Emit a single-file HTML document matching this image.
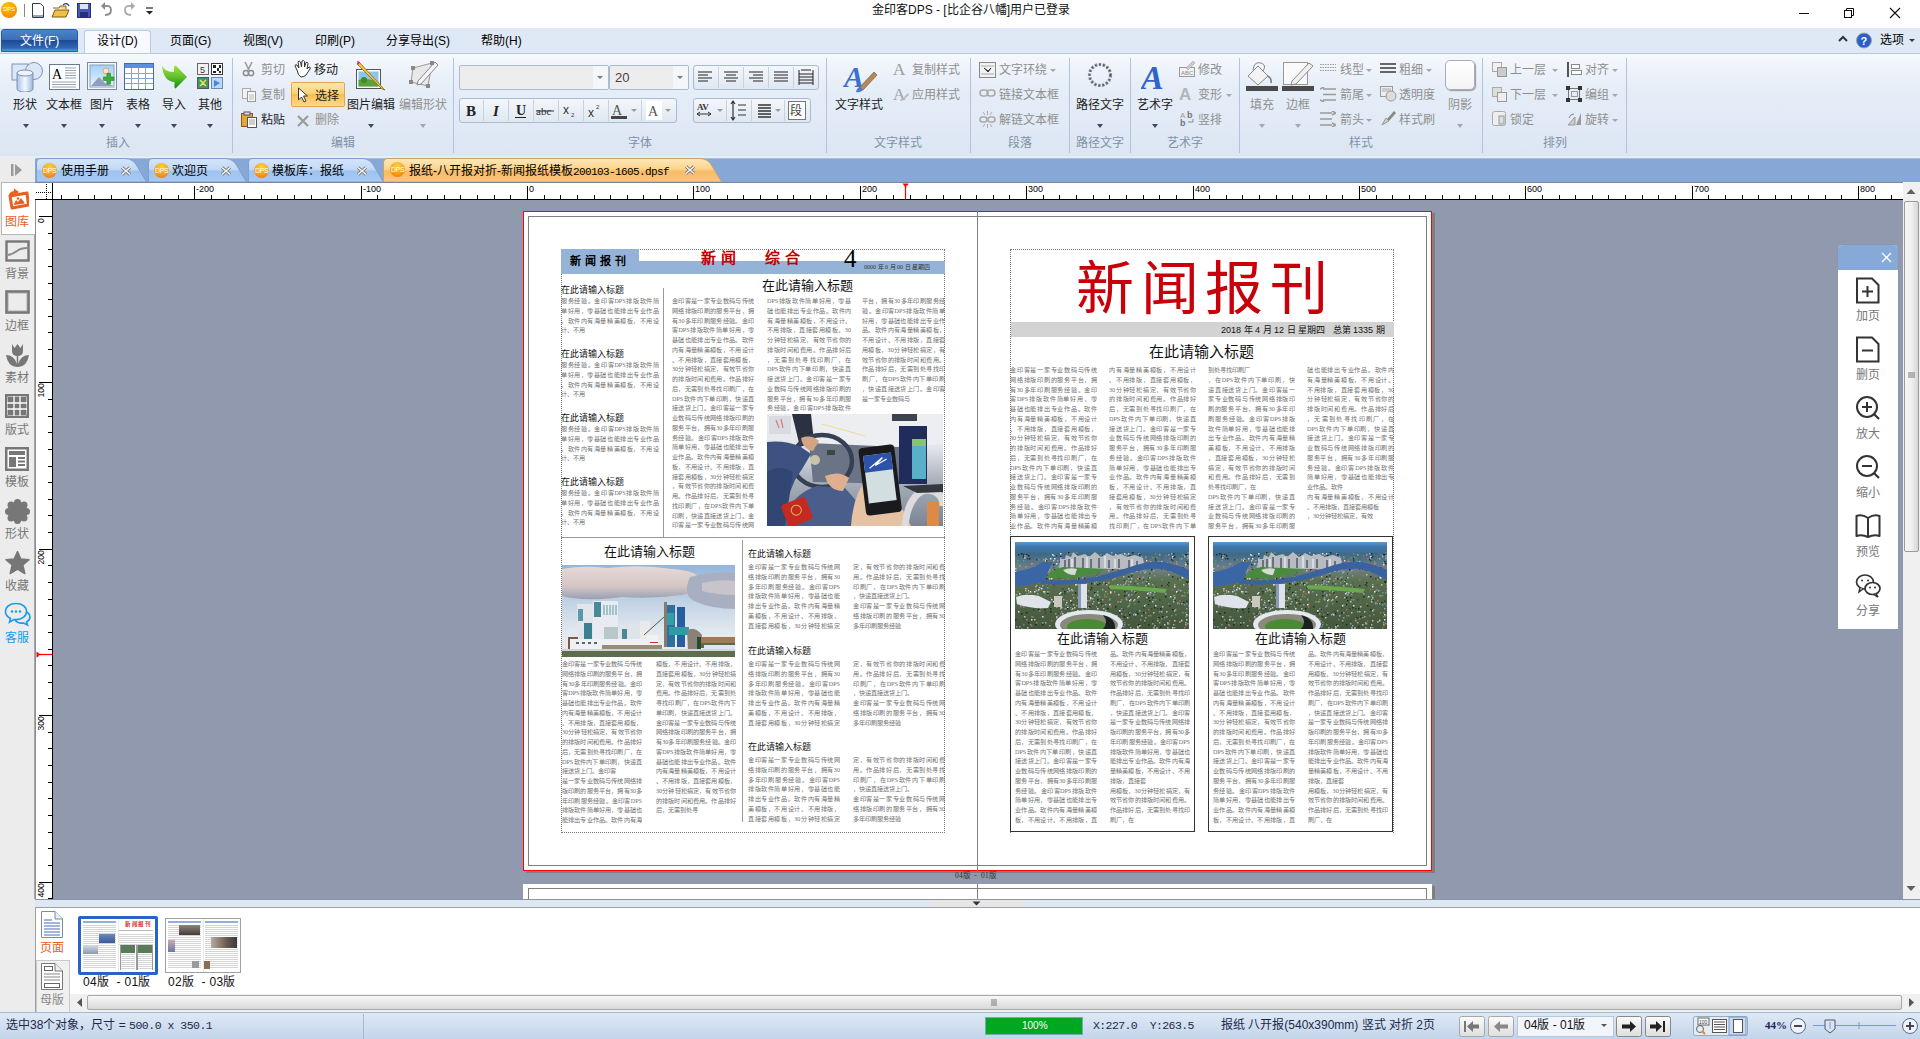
<!DOCTYPE html>
<html lang="zh-CN">
<head>
<meta charset="utf-8">
<style>
*{margin:0;padding:0;box-sizing:border-box}
html,body{width:1920px;height:1039px;overflow:hidden;background:#fff;font-family:"Liberation Sans",sans-serif;font-size:12px;color:#000}
.a{position:absolute}
.t{position:absolute;white-space:nowrap;line-height:1}
.bt .f{height:9.75px;text-align:justify;text-align-last:justify;white-space:nowrap;overflow:hidden}
.bt .s{height:9.75px;text-align:left;white-space:nowrap;overflow:hidden}
.bt{position:absolute;font-family:"Liberation Serif",serif;font-size:6.15px;line-height:9.75px;color:#707070;text-align:justify;word-break:break-all;overflow:hidden}
.hd{position:absolute;white-space:nowrap;line-height:1;font-weight:500;font-size:9px;color:#111}
.bh{position:absolute;white-space:nowrap;line-height:1;font-size:13px;color:#111}
#title{left:0;top:0;width:1920px;height:28px;background:#fff}
#menubar{left:0;top:28px;width:1920px;height:25px;background:#dfe9f5}
#ribbon{left:0;top:53px;width:1920px;height:105px;border-bottom:2px solid #e4eef8;background:linear-gradient(#f6f9fd 0,#e6eef8 30%,#dce6f3 100%);border-top:1px solid #b9cbe3}
#doctabs{left:0;top:158px;width:1920px;height:24px;background:#87a8d6;border-top:1px solid #a8bedc}
#leftbar{left:0;top:182px;width:35px;height:831px;background:#ececec}
#hruler{left:35px;top:182px;width:1868px;height:18px;background:#fff;border-bottom:1px solid #000}
#vruler{left:35px;top:200px;width:18px;height:699px;background:#fff;border-right:1px solid #000}
#canvas{left:53px;top:200px;width:1850px;height:699px;background:#9199ae;overflow:hidden}
#vscroll{left:1903px;top:182px;width:17px;height:717px;background:#f0f0f0}
#bottom{left:35px;top:899px;width:1885px;height:114px;background:#fff}
#status{left:0;top:1012px;width:1920px;height:27px;background:linear-gradient(#dfe9f6,#c3d4ea);border-top:1px solid #a4b9d6}
.sep{position:absolute;width:1px;background:#b2c4dc}
.glab{position:absolute;color:#8091a8;font-size:12px;top:137px;line-height:1;white-space:nowrap}
.rb{position:absolute;font-size:12px;color:#222;white-space:nowrap;line-height:1}
.gr{color:#909090}
.dd{position:absolute;width:0;height:0;border-left:3.5px solid transparent;border-right:3.5px solid transparent;border-top:4px solid #3b4a63}
.dd.g{border-top-color:#a0a8b4}
</style>
</head>
<body>
<!-- TITLE BAR -->
<div id="title" class="a">
  <div class="a" style="left:1px;top:2px;width:16px;height:16px;border-radius:50%;background:radial-gradient(circle at 40% 30%,#ffc400,#f07800);"></div>
  <div class="t" style="left:3px;top:6px;font-size:6px;color:#fff">DPS</div>
  <div class="a" style="left:24px;top:4px;width:1px;height:13px;background:#888"></div>
  <svg class="a" style="left:30px;top:1px" width="125" height="19" viewBox="0 0 125 19">
   <path d="M2.5 2.5h8l3 3v11h-11z" fill="#fff" stroke="#2a3a5a"/><path d="M3 15h10" stroke="#445" />
   <path d="M23 7h6l1-2h6v3" fill="#f6d46a" stroke="#8a6a20"/><path d="M22 16 L25 9 H39 L36 16z" fill="#f1c04a" stroke="#7a5a10"/><path d="M33 4 Q37 1 39 5" stroke="#2a4a8a" fill="none" stroke-width="1.3"/>
   <rect x="47.5" y="2.5" width="13" height="14" fill="#4a56b8" stroke="#26307a"/><rect x="50" y="3" width="8" height="5" fill="#dfe3ff"/><rect x="50" y="11" width="8" height="5" fill="#26307a"/>
   <path d="M75 14 Q81 14 81 9 Q81 4 75 5 L73 5" fill="none" stroke="#8a8a8a" stroke-width="1.8"/><path d="M71 5 L75 1 L75 9z" fill="#8a8a8a"/>
   <path d="M101 14 Q95 14 95 9 Q95 4 101 5 L103 5" fill="none" stroke="#aaa" stroke-width="1.8"/><path d="M105 5 L101 1 L101 9z" fill="#aaa"/>
   <path d="M116 7h7" stroke="#222" stroke-width="1.2"/><path d="M116 10h7l-3.5 3.5z" fill="#222"/>
  </svg>
  <svg class="a" style="left:1790px;top:0" width="130" height="28" viewBox="0 0 130 28">
   <path d="M9 13.5h10" stroke="#111" stroke-width="1"/>
   <rect x="54.5" y="10.5" width="7" height="7" fill="none" stroke="#111"/><path d="M56.5 10.5v-2h7v7h-2" fill="none" stroke="#111"/>
   <path d="M100 8 L110 18 M110 8 L100 18" stroke="#111" stroke-width="1.1"/>
  </svg>
  <div class="t" style="left:872px;top:4px;font-size:12px;color:#111">金印客DPS - [比企谷八幡]用户已登录</div>
</div>
<!-- MENU BAR -->
<div id="menubar" class="a">
  <div class="a" style="left:1px;top:1px;width:77px;height:23px;border-radius:3px 3px 0 0;background:linear-gradient(#4a86cc 0,#3a6fb8 45%,#1f4a94 50%,#2d67b5 85%,#46a0dc 100%);border:1px solid #2a5aa8"></div>
  <div class="t" style="left:20px;top:7px;font-size:12px;color:#fff">文件(F)</div>
  <div class="a" style="left:84px;top:2px;width:67px;height:23px;border-radius:3px 3px 0 0;background:#f6f9fd;border:1px solid #b9cbe3;border-bottom:none"></div>
  <div class="t" style="left:97px;top:7px;font-size:12px">设计(D)</div>
  <div class="t" style="left:170px;top:7px;font-size:12px">页面(G)</div>
  <div class="t" style="left:243px;top:7px;font-size:12px">视图(V)</div>
  <div class="t" style="left:315px;top:7px;font-size:12px">印刷(P)</div>
  <div class="t" style="left:386px;top:7px;font-size:12px">分享导出(S)</div>
  <div class="t" style="left:481px;top:7px;font-size:12px">帮助(H)</div>
  <div class="t" style="left:1880px;top:6px;font-size:12px">选项</div>
  <svg class="a" style="left:1836px;top:4px" width="40" height="18" viewBox="0 0 40 18">
   <path d="M3 9 L7 5 L11 9" fill="none" stroke="#333" stroke-width="2"/>
   <circle cx="28" cy="8.5" r="7.5" fill="#2a5ec8" stroke="#9aa" stroke-width="1"/>
   <text x="24.5" y="13" font-size="11" font-weight="bold" fill="#fff" font-family="Liberation Sans">?</text>
  </svg>
  <div class="dd" style="left:1909px;top:11px;border-width:3px 3px 0;border-top-color:#333"></div>

</div>
<!-- RIBBON -->
<div id="ribbon" class="a"></div>
<div class="a" style="left:0;top:0;width:1920px;height:157px">
<!-- group insert -->
<svg class="a" style="left:10px;top:60px" width="34" height="32" viewBox="0 0 34 32">
 <defs><linearGradient id="cyl" x1="0" x2="1"><stop offset="0" stop-color="#a9c3e6"/><stop offset=".5" stop-color="#f4f8fe"/><stop offset="1" stop-color="#9bb6dc"/></linearGradient></defs>
 <rect x="2" y="4" width="16" height="16" fill="#dce8f8" stroke="#7d93b3"/>
 <circle cx="24" cy="11" r="8.5" fill="#dbe7f7" stroke="#7d93b3"/>
 <path d="M7 13 h16 v16 a8 3 0 0 1 -16 0z" fill="url(#cyl)" stroke="#7d93b3"/>
 <ellipse cx="15" cy="13" rx="8" ry="3" fill="#eef4fc" stroke="#7d93b3"/>
</svg>
<svg class="a" style="left:49px;top:64px" width="31" height="26" viewBox="0 0 31 26">
 <rect x=".5" y=".5" width="30" height="25" fill="#fff" stroke="#6b7a90"/>
 <text x="3" y="15" font-family="Liberation Serif" font-size="14" fill="#000">A</text>
 <path d="M16 4h11M16 6.5h11M16 9h11M16 11.5h11M16 14h11M3 18h24M3 20.5h24M3 23h24" stroke="#98a3b3" stroke-width="1"/>
</svg>
<svg class="a" style="left:87px;top:62px" width="31" height="29" viewBox="0 0 31 29">
 <defs><linearGradient id="pic" x1="0" y1="0" x2="0" y2="1"><stop offset="0" stop-color="#9fd2f6"/><stop offset="1" stop-color="#e9f5fd"/></linearGradient></defs>
 <rect x=".5" y=".5" width="29" height="27" fill="#f4f7fb" stroke="#7c8a9e"/>
 <rect x="3" y="3" width="24" height="22" fill="url(#pic)" stroke="#8aa0bb"/>
 <circle cx="19" cy="9" r="3" fill="#fde6d2" stroke="#f39a6a"/>
 <path d="M4 24 L12 15 L18 21 L27 24z" fill="#8e9fbf"/>
 <path d="M21 17h4v4h4v4h-4v4h-4v-4h-4v-4h4z" transform="translate(1,-4) scale(.9)" fill="#3ab03a" stroke="#1f7a1f" stroke-width=".6"/>
</svg>
<svg class="a" style="left:124px;top:63px" width="30" height="27" viewBox="0 0 30 27">
 <rect x=".5" y=".5" width="29" height="26" fill="#fff" stroke="#4f67a6"/>
 <rect x="1" y="1" width="28" height="4" fill="#5d8fe0"/>
 <path d="M1 10.5h28M1 15.5h28M1 20.5h28M7.5 5v21M14.5 5v21M21.5 5v21" stroke="#8aa3cf"/>
</svg>
<svg class="a" style="left:161px;top:65px" width="27" height="25" viewBox="0 0 27 25">
 <defs><linearGradient id="arr" x1="0" y1="0" x2="0" y2="1"><stop offset="0" stop-color="#a8e040"/><stop offset=".5" stop-color="#60c02a"/><stop offset="1" stop-color="#108a10"/></linearGradient></defs>
 <path d="M1 0.5 Q4 7.5 13 7 V1.8 Q14 0.2 15.5 1.2 L26 12 L15 23 Q14 24 13.5 22.5 V17 Q2.5 16.5 1 0.5z" fill="url(#arr)"/>
</svg>
<svg class="a" style="left:196px;top:62px" width="29" height="29" viewBox="0 0 29 29">
 <rect x="1.5" y="1.5" width="11" height="11" fill="#f2f2f2" stroke="#666"/>
 <text x="4" y="11" font-size="9" font-family="Liberation Sans" fill="#333">5</text>
 <rect x="15.5" y="1.5" width="11" height="11" fill="#fff" stroke="#333"/>
 <path d="M17 3h3v3h-3zM23 3h2v3h-2zM17 9h3v2h-3zM21 6h2v3h-2zM23 9h2v2h-2z" fill="#222"/>
 <rect x="1.5" y="15.5" width="11" height="11" fill="#3e9a6a" stroke="#555"/>
 <path d="M4 18l3 3-3 3M10 18l-3 3 3 3" stroke="#f5e04a" stroke-width="1.5" fill="none"/>
 <rect x="15.5" y="15.5" width="11" height="11" fill="#bcd6f5" stroke="#6b8ab5"/>
 <path d="M18 18l6 3-6 4z" fill="#4a86d8"/>
</svg>
<div class="rb" style="left:13px;top:99px">形状</div>
<div class="rb" style="left:46px;top:99px">文本框</div>
<div class="rb" style="left:90px;top:99px">图片</div>
<div class="rb" style="left:126px;top:99px">表格</div>
<div class="rb" style="left:162px;top:99px">导入</div>
<div class="rb" style="left:198px;top:99px">其他</div>
<div class="glab" style="left:106px">插入</div>
<div class="sep" style="left:232px;top:58px;height:95px"></div>
<div class="dd" style="left:23px;top:124px"></div>
<div class="dd" style="left:61px;top:124px"></div>
<div class="dd" style="left:99px;top:124px"></div>
<div class="dd" style="left:135px;top:124px"></div>
<div class="dd" style="left:171px;top:124px"></div>
<div class="dd" style="left:207px;top:124px"></div>
<!-- group edit -->
<svg class="a" style="left:241px;top:61px" width="15" height="16" viewBox="0 0 15 16">
 <path d="M4 1 L8 9 M11 1 L7 9" stroke="#9a9a9a" stroke-width="1.6"/>
 <circle cx="5" cy="12" r="2.6" fill="none" stroke="#8c8c8c" stroke-width="1.5"/><circle cx="10" cy="12" r="2.6" fill="none" stroke="#8c8c8c" stroke-width="1.5"/>
</svg>
<div class="rb gr" style="left:261px;top:64px">剪切</div>
<svg class="a" style="left:293px;top:60px" width="19" height="18" viewBox="0 0 19 18">
 <path d="M4 10 L2 6 Q2 4 4 5 L6 8 L5 2 Q6 0 7.5 2 L8.5 7 L9 1 Q10.5 -0.5 11.5 1.5 L11.5 7 L13 2.5 Q14.5 1.5 15 3.5 L14 9 L16 7 Q18 7 17 9 L13 15 Q11 17 8 17 Q5 16 4 10z" fill="#fff" stroke="#333" stroke-width="1"/>
</svg>
<div class="rb" style="left:314px;top:64px">移动</div>
<svg class="a" style="left:241px;top:87px" width="16" height="15" viewBox="0 0 16 15">
 <rect x="1.5" y="1.5" width="8" height="10" fill="#f3f3f3" stroke="#aaa"/><rect x="6.5" y="4.5" width="8" height="10" fill="#f8f8f8" stroke="#999"/>
 <path d="M8 8h5M8 10h5M8 12h5" stroke="#bbb"/>
</svg>
<div class="rb gr" style="left:261px;top:89px">复制</div>
<div class="a" style="left:291px;top:82px;width:54px;height:25px;border:1px solid #e0a64a;border-radius:2px;background:linear-gradient(#fde7a8,#fbd27a 45%,#f9bf4f 50%,#fcd98c)"></div>
<svg class="a" style="left:297px;top:87px" width="13" height="16" viewBox="0 0 13 16">
 <path d="M1.5 1 L1.5 13 L4.5 10 L7 15 L9 14 L6.5 9 L10.5 9z" fill="#fff" stroke="#333" stroke-width="1"/>
</svg>
<div class="rb" style="left:315px;top:90px">选择</div>
<svg class="a" style="left:240px;top:111px" width="18" height="17" viewBox="0 0 18 17">
 <rect x="1.5" y="2.5" width="11" height="13" fill="#e2a73c" stroke="#8a5a12"/>
 <rect x="4" y="1" width="6" height="3" fill="#ddd" stroke="#555"/>
 <rect x="7.5" y="6.5" width="9" height="10" fill="#fff" stroke="#555"/>
 <path d="M9 9h6M9 11h6M9 13h6" stroke="#999"/>
</svg>
<div class="rb" style="left:261px;top:114px">粘贴</div>
<svg class="a" style="left:296px;top:114px" width="14" height="14" viewBox="0 0 14 14"><path d="M2 2 L12 12 M12 2 L2 12" stroke="#9b9b9b" stroke-width="2.2"/></svg>
<div class="rb gr" style="left:315px;top:114px">删除</div>
<svg class="a" style="left:354px;top:60px" width="34" height="31" viewBox="0 0 34 31">
 <rect x="2.5" y="9.5" width="24" height="19" fill="#fff" stroke="#555"/>
 <rect x="4.5" y="11.5" width="20" height="15" fill="#8fc3ea"/>
 <path d="M4.5 26.5 L4.5 20 Q12 17 24.5 22 L24.5 26.5z" fill="#5aa33a"/>
 <circle cx="10" cy="20" r="3" fill="#3f8a2a"/>
 <path d="M5 2 L29 28 L31 30 L28 29 L3 4z" fill="#f4c542" stroke="#8a6a10" stroke-width=".8"/>
 <path d="M3 1 L6 2 L4 5z" fill="#f08"/>
</svg>
<div class="rb" style="left:347px;top:99px">图片编辑</div>
<svg class="a" style="left:408px;top:59px" width="31" height="32" viewBox="0 0 31 32">
 <path d="M5 9 L24 4 L20 27 L3 23z" fill="#e8e8e8" stroke="#9a9a9a"/>
 <path d="M10 22 L27 3 L30 6 L13 25 L9 26z" fill="#f5f5f5" stroke="#888"/>
 <rect x="3" y="7" width="4" height="4" fill="#888"/><rect x="22" y="2" width="4" height="4" fill="#888"/><rect x="18" y="25" width="4" height="4" fill="#888"/><rect x="1" y="21" width="4" height="4" fill="#888"/>
</svg>
<div class="rb gr" style="left:399px;top:99px">编辑形状</div>
<div class="dd" style="left:368px;top:124px"></div>
<div class="dd g" style="left:420px;top:124px"></div>
<div class="glab" style="left:331px">编辑</div>
<div class="sep" style="left:453px;top:58px;height:95px"></div>
<!-- group font -->
<div class="a" style="left:459px;top:65px;width:150px;height:25px;border:1px solid #a9bad3;background:#ededed;border-radius:2px"></div>
<div class="a" style="left:593px;top:66px;width:15px;height:23px;background:#f4f6f9"></div>
<div class="dd" style="left:597px;top:76px;border-top-color:#777;border-width:3px 3px 0"></div>
<div class="a" style="left:609px;top:65px;width:80px;height:25px;border:1px solid #a9bad3;background:#ededed;border-radius:2px"></div>
<div class="a" style="left:673px;top:66px;width:15px;height:23px;background:#f4f6f9"></div>
<div class="dd" style="left:677px;top:76px;border-top-color:#777;border-width:3px 3px 0"></div>
<div class="rb" style="left:615px;top:71px;font-size:13px;color:#444">20</div>
<div class="a" style="left:693px;top:65px;width:126px;height:25px;border:1px solid #a9bad3;border-radius:3px;background:linear-gradient(#f4f7fb,#dfe7f2)"></div>
<svg class="a" style="left:693px;top:65px" width="126" height="25" viewBox="0 0 126 25">
 <path d="M25.5 2v21M50.5 2v21M75.5 2v21M100.5 2v21" stroke="#c6d2e2"/>
 <path d="M5 7h14M5 10h10M5 13h14M5 16h10" stroke="#222" stroke-width="1.2"/>
 <path d="M31 7h14M33 10h10M31 13h14M33 16h10" stroke="#222" stroke-width="1.2"/>
 <path d="M56 7h14M60 10h10M56 13h14M60 16h10" stroke="#222" stroke-width="1.2"/>
 <path d="M81 7h14M81 10h14M81 13h14M81 16h14" stroke="#222" stroke-width="1.2"/>
 <path d="M106 9h14M106 12h14M106 15h14M106 18h14M106 5v15M120 5v15M108 5h10" stroke="#222" stroke-width="1"/>
</svg>
<div class="a" style="left:459px;top:98px;width:218px;height:25px;border:1px solid #a9bad3;border-radius:3px;background:linear-gradient(#f4f7fb,#dfe7f2)"></div>
<svg class="a" style="left:459px;top:98px" width="218" height="25" viewBox="0 0 218 25">
 <path d="M24.5 2v21M49.5 2v21M74.5 2v21M99.5 2v21M124.5 2v21M149.5 2v21M182.5 2v21" stroke="#c6d2e2"/>
 <text x="7" y="18" font-family="Liberation Serif" font-weight="bold" font-size="15" fill="#222">B</text>
 <text x="34" y="18" font-family="Liberation Serif" font-style="italic" font-weight="bold" font-size="15" fill="#222">I</text>
 <text x="57" y="17" font-family="Liberation Serif" font-weight="bold" font-size="14" fill="#222">U</text><path d="M56 19.5h11" stroke="#222"/>
 <text x="77" y="17" font-family="Liberation Serif" font-size="11" fill="#333">abc</text><path d="M77 13h18" stroke="#333"/>
 <text x="104" y="16" font-family="Liberation Sans" font-size="12" fill="#333">x</text><text x="112" y="19" font-size="6" fill="#333">2</text>
 <text x="129" y="19" font-family="Liberation Sans" font-size="12" fill="#333">x</text><text x="137" y="11" font-size="6" fill="#333">2</text>
 <text x="153" y="17" font-family="Liberation Serif" font-size="14" fill="#555">A</text><rect x="152" y="18" width="16" height="3" fill="#444"/>
 <path d="M172 11l3 3 3-3z" fill="#999"/>
 <rect x="187" y="3" width="16" height="19" fill="#fff"/><text x="189" y="18" font-family="Liberation Serif" font-size="14" fill="#555">A</text>
 <path d="M206 11l3 3 3-3z" fill="#999"/>
</svg>
<div class="a" style="left:693px;top:98px;width:118px;height:25px;border:1px solid #a9bad3;border-radius:3px;background:linear-gradient(#f4f7fb,#dfe7f2)"></div>
<svg class="a" style="left:693px;top:98px" width="118" height="25" viewBox="0 0 118 25">
 <path d="M33.5 2v21M58.5 2v21M91.5 2v21" stroke="#c6d2e2"/>
 <text x="4" y="12" font-family="Liberation Serif" font-weight="bold" font-size="9" fill="#333">AV</text>
 <path d="M4 16h14M4 16l3-2M4 16l3 2M18 16l-3-2M18 16l-3 2" stroke="#333"/>
 <path d="M24 11l3 3 3-3z" fill="#999"/>
 <path d="M40 4v17M38 6l2-3 2 3M38 19l2 3 2-3M45 7h8M45 12h8M45 17h8" stroke="#333" stroke-width="1.2" fill="none"/>
 <path d="M65 7h13M65 10h13M65 13h13M65 16h13M65 19h13" stroke="#333" stroke-width="1.3"/>
 <path d="M82 11l3 3 3-3z" fill="#999"/>
 <rect x="95.5" y="3.5" width="17" height="18" fill="#fff" stroke="#777"/>
 <text x="97" y="17" font-size="12" fill="#444">段</text>
</svg>
<div class="glab" style="left:628px">字体</div>
<div class="sep" style="left:826px;top:58px;height:95px"></div>
<!-- group text style -->
<svg class="a" style="left:843px;top:60px" width="36" height="33" viewBox="0 0 36 33">
 <text x="1" y="27" font-family="Liberation Serif" font-style="italic" font-weight="bold" font-size="30" fill="#3d6fd0">A</text>
 <path d="M16 28 L31 12 L34 15 L20 30z" fill="#b8875a" stroke="#7a5530" stroke-width=".7"/>
 <path d="M13 32 Q14 27 18 27 L20 30 Q17 33 13 32z" fill="#4a7ad0"/>
</svg>
<div class="rb" style="left:835px;top:99px">文字样式</div>
<svg class="a" style="left:892px;top:60px" width="17" height="17" viewBox="0 0 17 17"><text x="1" y="15" font-family="Liberation Serif" font-size="17" fill="#9a9a9a">A</text></svg>
<div class="rb gr" style="left:912px;top:64px">复制样式</div>
<svg class="a" style="left:892px;top:85px" width="18" height="17" viewBox="0 0 18 17"><text x="1" y="15" font-family="Liberation Serif" font-size="17" fill="#a0a0a0">A</text><path d="M8 16 L16 8 L17 10 L10 16z" fill="#bbb"/></svg>
<div class="rb gr" style="left:912px;top:89px">应用样式</div>
<div class="glab" style="left:874px">文字样式</div>
<div class="sep" style="left:970px;top:58px;height:95px"></div>
<!-- group paragraph -->
<svg class="a" style="left:979px;top:62px" width="17" height="16" viewBox="0 0 17 16"><rect x=".5" y=".5" width="16" height="15" fill="#f2f2f2" stroke="#888"/><path d="M2 4h13M2 12h13" stroke="#aaa"/><path d="M5 6 L9 10 L12 6 L9 9z" fill="#333" stroke="#333"/></svg>
<div class="rb gr" style="left:999px;top:64px">文字环绕</div>
<div class="dd g" style="left:1050px;top:69px;border-width:3px 3px 0"></div>
<svg class="a" style="left:979px;top:88px" width="17" height="11" viewBox="0 0 17 11"><rect x="1" y="2" width="8" height="6" rx="3" fill="none" stroke="#aaa" stroke-width="1.6"/><rect x="8" y="2" width="8" height="6" rx="3" fill="none" stroke="#aaa" stroke-width="1.6"/></svg>
<div class="rb gr" style="left:999px;top:89px">链接文本框</div>
<svg class="a" style="left:979px;top:111px" width="17" height="17" viewBox="0 0 17 17"><rect x="1" y="6" width="7" height="5" rx="2.5" fill="none" stroke="#aaa" stroke-width="1.5"/><rect x="9" y="6" width="7" height="5" rx="2.5" fill="none" stroke="#aaa" stroke-width="1.5"/><path d="M8.5 0v4M8.5 13v4M4 1l2 3M13 1l-2 3M4 16l2-3M13 16l-2-3" stroke="#aaa"/></svg>
<div class="rb gr" style="left:999px;top:114px">解链文本框</div>
<div class="glab" style="left:1008px">段落</div>
<div class="sep" style="left:1069px;top:58px;height:95px"></div>
<!-- group path text -->
<svg class="a" style="left:1085px;top:60px" width="30" height="30" viewBox="0 0 30 30">
 <circle cx="15" cy="15" r="10.5" fill="none" stroke="#8a8a8a" stroke-width="3.2" stroke-dasharray="2.4 1.6"/>
 <circle cx="15" cy="15" r="10.5" fill="none" stroke="#40568a" stroke-width="1.3" stroke-dasharray="1.5 2.5"/>
</svg>
<div class="rb" style="left:1076px;top:99px">路径文字</div>
<div class="dd" style="left:1097px;top:124px"></div>
<div class="glab" style="left:1076px">路径文字</div>
<div class="sep" style="left:1130px;top:58px;height:95px"></div>
<!-- group art -->
<svg class="a" style="left:1141px;top:60px" width="30" height="32" viewBox="0 0 30 32"><text x="0" y="29" font-family="Liberation Serif" font-style="italic" font-weight="bold" font-size="34" fill="#2f64c9">A</text></svg>
<div class="rb" style="left:1137px;top:99px">艺术字</div>
<div class="dd" style="left:1152px;top:124px"></div>
<svg class="a" style="left:1179px;top:61px" width="17" height="17" viewBox="0 0 17 17"><rect x=".5" y="6.5" width="15" height="9" fill="#f2f2f2" stroke="#999"/><text x="2" y="14" font-size="6" fill="#888">ABC</text><path d="M7 7 L14 0 L16 2 L9 9z" fill="#ccc" stroke="#999" stroke-width=".5"/></svg>
<div class="rb gr" style="left:1198px;top:64px">修改</div>
<svg class="a" style="left:1179px;top:85px" width="16" height="17" viewBox="0 0 16 17"><text x="0" y="15" font-family="Liberation Sans" font-weight="bold" font-size="17" fill="#b5b5b5">A</text></svg>
<div class="rb gr" style="left:1198px;top:89px">变形</div>
<div class="dd g" style="left:1226px;top:94px;border-width:3px 3px 0"></div>
<svg class="a" style="left:1180px;top:110px" width="15" height="17" viewBox="0 0 15 17"><text x="0" y="8" font-size="8" fill="#999">A</text><text x="7" y="8" font-weight="bold" font-size="9" fill="#777">b</text><text x="0" y="16" font-weight="bold" font-size="9" fill="#777">b</text><path d="M8 12h5v-3" stroke="#888" fill="none"/></svg>
<div class="rb gr" style="left:1198px;top:114px">竖排</div>
<div class="glab" style="left:1167px">艺术字</div>
<div class="sep" style="left:1239px;top:58px;height:95px"></div>
<!-- group style -->
<svg class="a" style="left:1245px;top:61px" width="34" height="32" viewBox="0 0 34 32">
 <path d="M3 15 L13 5 L23 15 L13 24z" fill="#f3f3f3" stroke="#888"/>
 <path d="M8 9 Q9 0 16 2 Q22 4 18 10" fill="none" stroke="#888"/>
 <path d="M23 15 Q27 18 26 22" fill="none" stroke="#777" stroke-width="1.5"/>
 <rect x="1" y="25" width="32" height="5" fill="#4a4a4a"/>
</svg>
<div class="rb gr" style="left:1250px;top:99px">填充</div>
<div class="dd g" style="left:1259px;top:124px"></div>
<svg class="a" style="left:1282px;top:61px" width="33" height="32" viewBox="0 0 33 32">
 <rect x="1.5" y="1.5" width="24" height="22" fill="#fafafa" stroke="#999"/>
 <path d="M10 20 L27 2 L31 5 L14 23 L9 24z" fill="#f0f0f0" stroke="#888"/>
 <rect x="0" y="25" width="32" height="5" fill="#4a4a4a"/>
</svg>
<div class="rb gr" style="left:1286px;top:99px">边框</div>
<div class="dd g" style="left:1295px;top:124px"></div>
<svg class="a" style="left:1320px;top:63px" width="16" height="9" viewBox="0 0 16 9"><path d="M0 1.5h16M0 4.5h16M0 7.5h16" stroke="#999" stroke-dasharray="1.5 1"/></svg>
<div class="rb gr" style="left:1340px;top:64px">线型</div>
<div class="dd g" style="left:1366px;top:69px;border-width:3px 3px 0"></div>
<svg class="a" style="left:1380px;top:63px" width="16" height="10" viewBox="0 0 16 10"><path d="M0 1h16M0 5h16M0 9h16" stroke="#666" stroke-width="2"/></svg>
<div class="rb gr" style="left:1399px;top:64px">粗细</div>
<div class="dd g" style="left:1426px;top:69px;border-width:3px 3px 0"></div>
<svg class="a" style="left:1320px;top:87px" width="16" height="15" viewBox="0 0 16 15"><path d="M3 2h13M3 7.5h13M3 13h13M0 2l4-2M0 13l4 2" stroke="#999" stroke-width="1.5"/></svg>
<div class="rb gr" style="left:1340px;top:89px">箭尾</div>
<div class="dd g" style="left:1366px;top:94px;border-width:3px 3px 0"></div>
<svg class="a" style="left:1380px;top:86px" width="17" height="16" viewBox="0 0 17 16"><rect x=".5" y=".5" width="12" height="10" fill="#eee" stroke="#999"/><circle cx="11" cy="10" r="5" fill="#ddd" stroke="#999"/><path d="M2 3h9M2 5h9" stroke="#aaa"/></svg>
<div class="rb gr" style="left:1399px;top:89px">透明度</div>
<svg class="a" style="left:1320px;top:111px" width="16" height="16" viewBox="0 0 16 16"><path d="M0 2h12M0 8h12M0 14h12M12 0l4 2-4 2M12 12l4 2-4 2" stroke="#999" stroke-width="1.5" fill="none"/></svg>
<div class="rb gr" style="left:1340px;top:114px">箭头</div>
<div class="dd g" style="left:1366px;top:119px;border-width:3px 3px 0"></div>
<svg class="a" style="left:1380px;top:110px" width="17" height="17" viewBox="0 0 17 17"><path d="M2 15 L6 8 L9 11z" fill="#ccc" stroke="#999"/><path d="M7 9 L14 1 L16 3 L9 11z" fill="#888"/></svg>
<div class="rb gr" style="left:1399px;top:114px">样式刷</div>
<div class="a" style="left:1445px;top:60px;width:30px;height:30px;border:1px solid #aab;border-radius:5px;background:linear-gradient(#fff,#f4f4f4);box-shadow:1px 1px 1px #999"></div>
<div class="rb gr" style="left:1448px;top:99px">阴影</div>
<div class="dd g" style="left:1457px;top:124px"></div>
<div class="glab" style="left:1349px">样式</div>
<div class="sep" style="left:1482px;top:58px;height:95px"></div>
<!-- group arrange -->
<svg class="a" style="left:1492px;top:62px" width="15" height="16" viewBox="0 0 15 16"><rect x=".5" y=".5" width="9" height="9" fill="#f0f0f0" stroke="#aaa"/><rect x="5.5" y="5.5" width="9" height="9" fill="#ccc" stroke="#999"/></svg>
<div class="rb gr" style="left:1510px;top:64px">上一层</div>
<div class="dd g" style="left:1552px;top:69px;border-width:3px 3px 0"></div>
<svg class="a" style="left:1492px;top:87px" width="15" height="16" viewBox="0 0 15 16"><rect x=".5" y=".5" width="9" height="9" fill="#ddd" stroke="#aaa"/><rect x="5.5" y="5.5" width="9" height="9" fill="#eee" stroke="#999"/></svg>
<div class="rb gr" style="left:1510px;top:89px">下一层</div>
<div class="dd g" style="left:1552px;top:94px;border-width:3px 3px 0"></div>
<svg class="a" style="left:1492px;top:111px" width="15" height="16" viewBox="0 0 15 16"><rect x=".5" y=".5" width="13" height="14" rx="2" fill="#eee" stroke="#aaa"/><rect x="7" y="5" width="5" height="8" fill="#ddd" stroke="#999"/></svg>
<div class="rb gr" style="left:1510px;top:114px">锁定</div>
<svg class="a" style="left:1567px;top:62px" width="15" height="15" viewBox="0 0 15 15"><path d="M1 0v15" stroke="#555" stroke-width="2"/><rect x="4.5" y="2.5" width="8" height="4" fill="#fff" stroke="#888"/><rect x="4.5" y="8.5" width="10" height="4" fill="#fff" stroke="#888"/></svg>
<div class="rb gr" style="left:1585px;top:64px">对齐</div>
<div class="dd g" style="left:1612px;top:69px;border-width:3px 3px 0"></div>
<svg class="a" style="left:1566px;top:86px" width="16" height="16" viewBox="0 0 16 16"><rect x="2.5" y="2.5" width="11" height="11" fill="none" stroke="#777"/><rect x="0" y="0" width="4" height="4" fill="#333"/><rect x="12" y="0" width="4" height="4" fill="#333"/><rect x="0" y="12" width="4" height="4" fill="#333"/><rect x="12" y="12" width="4" height="4" fill="#333"/><rect x="5.5" y="5.5" width="6" height="5" fill="none" stroke="#999"/></svg>
<div class="rb gr" style="left:1585px;top:89px">编组</div>
<div class="dd g" style="left:1612px;top:94px;border-width:3px 3px 0"></div>
<svg class="a" style="left:1567px;top:112px" width="15" height="14" viewBox="0 0 15 14"><path d="M1 13 L8 5 L8 13z" fill="#ccc" stroke="#999"/><path d="M9 13 L14 1 L14 13z" fill="#999"/><path d="M2 6 Q3 2 7 2" stroke="#888" fill="none"/></svg>
<div class="rb gr" style="left:1585px;top:114px">旋转</div>
<div class="dd g" style="left:1612px;top:119px;border-width:3px 3px 0"></div>
<div class="glab" style="left:1543px">排列</div>
<div class="sep" style="left:1626px;top:58px;height:95px"></div>
</div>

<!-- DOC TABS -->
<div id="doctabs" class="a"></div>
<div class="a" style="left:0;top:157px;width:35px;height:25px;background:#ececec"></div>
<svg class="a" style="left:10px;top:163px" width="14" height="14" viewBox="0 0 14 14"><rect x="1" y="1" width="2.5" height="12" fill="#9a9a9a"/><path d="M5 1 L12 7 L5 13z" fill="#9a9a9a"/></svg>
<svg class="a" style="left:36px;top:158px" width="112" height="24" viewBox="0 0 112 24"><defs><linearGradient id="tg36" x1="0" y1="0" x2="0" y2="1"><stop offset="0" stop-color="#d3e5fb"/><stop offset=".45" stop-color="#c3daf7"/><stop offset=".55" stop-color="#9fc3f0"/><stop offset="1" stop-color="#a8c9f2"/></linearGradient></defs><path d="M0.5 24 V5 Q0.5 0.5 5 0.5 H89 Q97 0.5 101 8 L110.5 24z" fill="url(#tg36)" stroke="#7b9fd0"/></svg><div class="a" style="left:42.0px;top:162.5px;width:15.0px;height:15.0px;border-radius:50%;background:radial-gradient(circle at 50% 25%,#ffd23a,#f79a1a 60%,#ef6a10)"></div><div class="t" style="left:43.0px;top:166.5px;font-size:7px;color:#fff;letter-spacing:-.3px">DPS</div><div class="t" style="left:61px;top:165px;font-size:12px">使用手册</div><svg class="a" style="left:120px;top:166px" width="12" height="10" viewBox="0 0 12 10"><path d="M2 1.5 L10 8.5 M10 1.5 L2 8.5" stroke="#777" stroke-width="3"/><path d="M2 1.5 L10 8.5 M10 1.5 L2 8.5" stroke="#fff" stroke-width="1.2"/></svg><svg class="a" style="left:148px;top:158px" width="100" height="24" viewBox="0 0 100 24"><defs><linearGradient id="tg148" x1="0" y1="0" x2="0" y2="1"><stop offset="0" stop-color="#d3e5fb"/><stop offset=".45" stop-color="#c3daf7"/><stop offset=".55" stop-color="#9fc3f0"/><stop offset="1" stop-color="#a8c9f2"/></linearGradient></defs><path d="M0.5 24 V5 Q0.5 0.5 5 0.5 H77 Q85 0.5 89 8 L98.5 24z" fill="url(#tg148)" stroke="#7b9fd0"/></svg><div class="a" style="left:154.0px;top:162.5px;width:15.0px;height:15.0px;border-radius:50%;background:radial-gradient(circle at 50% 25%,#ffd23a,#f79a1a 60%,#ef6a10)"></div><div class="t" style="left:155.0px;top:166.5px;font-size:7px;color:#fff;letter-spacing:-.3px">DPS</div><div class="t" style="left:172px;top:165px;font-size:12px">欢迎页</div><svg class="a" style="left:220px;top:166px" width="12" height="10" viewBox="0 0 12 10"><path d="M2 1.5 L10 8.5 M10 1.5 L2 8.5" stroke="#777" stroke-width="3"/><path d="M2 1.5 L10 8.5 M10 1.5 L2 8.5" stroke="#fff" stroke-width="1.2"/></svg><svg class="a" style="left:248px;top:158px" width="137" height="24" viewBox="0 0 137 24"><defs><linearGradient id="tg248" x1="0" y1="0" x2="0" y2="1"><stop offset="0" stop-color="#d3e5fb"/><stop offset=".45" stop-color="#c3daf7"/><stop offset=".55" stop-color="#9fc3f0"/><stop offset="1" stop-color="#a8c9f2"/></linearGradient></defs><path d="M0.5 24 V5 Q0.5 0.5 5 0.5 H114 Q122 0.5 126 8 L135.5 24z" fill="url(#tg248)" stroke="#7b9fd0"/></svg><div class="a" style="left:254.0px;top:162.5px;width:15.0px;height:15.0px;border-radius:50%;background:radial-gradient(circle at 50% 25%,#ffd23a,#f79a1a 60%,#ef6a10)"></div><div class="t" style="left:255.0px;top:166.5px;font-size:7px;color:#fff;letter-spacing:-.3px">DPS</div><div class="t" style="left:272px;top:165px;font-size:12px">模板库：报纸</div><svg class="a" style="left:356px;top:166px" width="12" height="10" viewBox="0 0 12 10"><path d="M2 1.5 L10 8.5 M10 1.5 L2 8.5" stroke="#777" stroke-width="3"/><path d="M2 1.5 L10 8.5 M10 1.5 L2 8.5" stroke="#fff" stroke-width="1.2"/></svg><svg class="a" style="left:383px;top:158px" width="340" height="24" viewBox="0 0 340 24"><defs><linearGradient id="tg383" x1="0" y1="0" x2="0" y2="1"><stop offset="0" stop-color="#fee8ba"/><stop offset=".45" stop-color="#fdd48c"/><stop offset=".55" stop-color="#f8bb68"/><stop offset="1" stop-color="#fbc878"/></linearGradient></defs><path d="M0.5 24 V5 Q0.5 0.5 5 0.5 H317 Q325 0.5 329 8 L338.5 24z" fill="url(#tg383)" stroke="#c8a06a"/></svg><div class="a" style="left:390.0px;top:161.5px;width:15.0px;height:15.0px;border-radius:50%;background:radial-gradient(circle at 50% 25%,#ffd23a,#f79a1a 60%,#ef6a10)"></div><div class="t" style="left:391.0px;top:165.5px;font-size:7px;color:#fff;letter-spacing:-.3px">DPS</div><div class="t" style="left:409px;top:165px;font-size:12px">报纸-八开报对折-新闻报纸模板<span style="font-family:Liberation Mono;font-size:11px;letter-spacing:-.6px">200103-1605.dpsf</span></div><svg class="a" style="left:684px;top:165px" width="12" height="10" viewBox="0 0 12 10"><path d="M2 1.5 L10 8.5 M10 1.5 L2 8.5" stroke="#777" stroke-width="3"/><path d="M2 1.5 L10 8.5 M10 1.5 L2 8.5" stroke="#fff" stroke-width="1.2"/></svg>
<div id="leftbar" class="a"></div>
<div class="a" style="left:34px;top:182px;width:1px;height:717px;background:#a8a8a8"></div>
<div class="a" style="left:1px;top:182px;width:34px;height:53px;background:#fff;border:1px solid #b8b8b8;border-right:none"></div>
<svg class="a" style="left:5px;top:188px" width="24" height="22" viewBox="0 0 24 22">
 <path d="M4 9 Q3 4 9 3 L9 0.5 L14 4 L9 7.5 L9 5.5 Q6 6 6.5 9" fill="#e8601a"/>
 <path d="M5 8 L22 5 L23.5 17 L7 20z" fill="none" stroke="#e8601a" stroke-width="3" stroke-linejoin="round"/>
 <path d="M9 16 L11 12 L13 14 L16 10 L19 14 L19.5 15.5 L9.5 17z" fill="#e8601a"/><circle cx="13" cy="10.5" r="1.3" fill="#e8601a"/>
</svg>
<div class="t" style="left:5px;top:216px;font-size:12px;color:#e8601a">图库</div>
<svg class="a" style="left:5px;top:240px" width="25" height="22" viewBox="0 0 25 22"><rect x="1.5" y="1.5" width="22" height="19" fill="none" stroke="#777" stroke-width="2.4"/><path d="M3 15 Q8 14 12 11 Q16 8 22 8" fill="none" stroke="#8a8a8a" stroke-width="2"/></svg>
<div class="t" style="left:5px;top:268px;font-size:12px;color:#777">背景</div>
<svg class="a" style="left:5px;top:290px" width="25" height="24" viewBox="0 0 25 24"><rect x="1.5" y="1.5" width="22" height="21" fill="none" stroke="#777" stroke-width="2.6"/><rect x="3.5" y="3.5" width="18" height="17" fill="none" stroke="#aaa" stroke-width="1" stroke-dasharray="1 1"/></svg>
<div class="t" style="left:5px;top:320px;font-size:12px;color:#777">边框</div>
<svg class="a" style="left:5px;top:343px" width="25" height="24" viewBox="0 0 25 24"><path d="M7 1 L9.5 5 L12.5 1 L15.5 5 L18 1 L18 8 Q18 13 12.5 13 Q7 13 7 8z" fill="#777"/><path d="M12 24 Q3 24 1 12 Q9 12 12 21z M13 24 Q22 24 24 12 Q16 12 13 21z" fill="#777"/><path d="M12.5 13v11" stroke="#777" stroke-width="1.5"/></svg>
<div class="t" style="left:5px;top:372px;font-size:12px;color:#777">素材</div>
<svg class="a" style="left:5px;top:394px" width="25" height="25" viewBox="0 0 25 25"><rect x="0" y="0" width="24" height="24" fill="#777"/><path d="M2.5 2.5h19v19h-19z" fill="#fff"/><rect x="3" y="3" width="18" height="18" fill="#777"/><path d="M9 2v20M15 2v20M2 9h20M2 15h20" stroke="#fff" stroke-width="1.3"/></svg>
<div class="t" style="left:5px;top:424px;font-size:12px;color:#777">版式</div>
<svg class="a" style="left:5px;top:447px" width="25" height="25" viewBox="0 0 25 25"><rect x="0" y="0" width="24" height="24" fill="#777"/><rect x="2.5" y="2.5" width="19" height="19" fill="#fff"/><rect x="4" y="4" width="16" height="4" fill="#777"/><rect x="4" y="10" width="7" height="10" fill="#777"/><path d="M13 11h7M13 14.5h7M13 18h7" stroke="#777" stroke-width="2"/></svg>
<div class="t" style="left:5px;top:476px;font-size:12px;color:#777">模板</div>
<svg class="a" style="left:5px;top:499px" width="25" height="25" viewBox="0 0 25 25"><circle cx="12.5" cy="12.5" r="10" fill="#777"/><g fill="#777"><circle cx="12.5" cy="3.5" r="3.5"/><circle cx="12.5" cy="21.5" r="3.5"/><circle cx="3.5" cy="12.5" r="3.5"/><circle cx="21.5" cy="12.5" r="3.5"/><circle cx="6" cy="6" r="3.5"/><circle cx="19" cy="6" r="3.5"/><circle cx="6" cy="19" r="3.5"/><circle cx="19" cy="19" r="3.5"/></g></svg>
<div class="t" style="left:5px;top:528px;font-size:12px;color:#777">形状</div>
<svg class="a" style="left:5px;top:551px" width="25" height="24" viewBox="0 0 25 24"><path d="M12.5 0.5 L15.8 8 L24 8.7 L17.8 14 L19.8 22.5 L12.5 18 L5.2 22.5 L7.2 14 L1 8.7 L9.2 8z" fill="#777" stroke="#777" stroke-linejoin="round" stroke-width="1.5"/></svg>
<div class="t" style="left:5px;top:580px;font-size:12px;color:#777">收藏</div>
<svg class="a" style="left:4px;top:602px" width="27" height="25" viewBox="0 0 27 25"><path d="M12 1.5 C5.5 1.5 1.5 5 1.5 9.5 C1.5 12.5 3.5 15 6.5 16.5 L5.5 20 L10 17.5 C10.7 17.6 11.3 17.6 12 17.6 C18.5 17.6 22.5 14 22.5 9.5 C22.5 5 18.5 1.5 12 1.5z" fill="none" stroke="#1a9ae8" stroke-width="1.6"/><path d="M23 10 C25 11.5 26 13 26 15 C26 17 24.5 19 22.5 20 L23.5 23 L19.5 21 C16 21.5 12.5 20 11 18" fill="none" stroke="#1a9ae8" stroke-width="1.6"/><circle cx="8" cy="9.5" r="1.2" fill="#1a9ae8"/><circle cx="12" cy="9.5" r="1.2" fill="#1a9ae8"/><circle cx="16" cy="9.5" r="1.2" fill="#1a9ae8"/></svg>
<div class="t" style="left:5px;top:632px;font-size:12px;color:#1a9ae8">客服</div>

<svg class="a" style="left:35px;top:182px" width="1868" height="18" viewBox="0 0 1868 18">
<rect x="0" y="0" width="1868" height="18" fill="#fff"/>
<path d="M0 17.5h1868M17.5 0v18" stroke="#000"/>
<path d="M1 10.5h16M11.5 2v15" stroke="#000" stroke-dasharray="1 1"/>
<path d="M26.5 13v4.5M43.5 13v4.5M59.5 13v4.5M76.5 13v4.5M93.5 13v4.5M109.5 13v4.5M126.5 13v4.5M143.5 13v4.5M159.5 4v13.5M176.5 13v4.5M193.5 13v4.5M209.5 13v4.5M226.5 13v4.5M242.5 13v4.5M259.5 13v4.5M276.5 13v4.5M292.5 13v4.5M309.5 13v4.5M326.5 4v13.5M342.5 13v4.5M359.5 13v4.5M376.5 13v4.5M392.5 13v4.5M409.5 13v4.5M425.5 13v4.5M442.5 13v4.5M459.5 13v4.5M475.5 13v4.5M492.5 4v13.5M509.5 13v4.5M525.5 13v4.5M542.5 13v4.5M559.5 13v4.5M575.5 13v4.5M592.5 13v4.5M608.5 13v4.5M625.5 13v4.5M642.5 13v4.5M658.5 4v13.5M675.5 13v4.5M692.5 13v4.5M708.5 13v4.5M725.5 13v4.5M742.5 13v4.5M758.5 13v4.5M775.5 13v4.5M791.5 13v4.5M808.5 13v4.5M825.5 4v13.5M841.5 13v4.5M858.5 13v4.5M875.5 13v4.5M891.5 13v4.5M908.5 13v4.5M925.5 13v4.5M941.5 13v4.5M958.5 13v4.5M974.5 13v4.5M991.5 4v13.5M1008.5 13v4.5M1024.5 13v4.5M1041.5 13v4.5M1058.5 13v4.5M1074.5 13v4.5M1091.5 13v4.5M1108.5 13v4.5M1124.5 13v4.5M1141.5 13v4.5M1158.5 4v13.5M1174.5 13v4.5M1191.5 13v4.5M1207.5 13v4.5M1224.5 13v4.5M1241.5 13v4.5M1257.5 13v4.5M1274.5 13v4.5M1291.5 13v4.5M1307.5 13v4.5M1324.5 4v13.5M1341.5 13v4.5M1357.5 13v4.5M1374.5 13v4.5M1390.5 13v4.5M1407.5 13v4.5M1424.5 13v4.5M1440.5 13v4.5M1457.5 13v4.5M1474.5 13v4.5M1490.5 4v13.5M1507.5 13v4.5M1524.5 13v4.5M1540.5 13v4.5M1557.5 13v4.5M1573.5 13v4.5M1590.5 13v4.5M1607.5 13v4.5M1623.5 13v4.5M1640.5 13v4.5M1657.5 4v13.5M1673.5 13v4.5M1690.5 13v4.5M1707.5 13v4.5M1723.5 13v4.5M1740.5 13v4.5M1756.5 13v4.5M1773.5 13v4.5M1790.5 13v4.5M1806.5 13v4.5M1823.5 4v13.5M1840.5 13v4.5M1856.5 13v4.5" stroke="#000"/>
<text x="161.0" y="10" font-size="9" font-family="Liberation Sans">-200</text>
<text x="328.0" y="10" font-size="9" font-family="Liberation Sans">-100</text>
<text x="494.0" y="10" font-size="9" font-family="Liberation Sans">0</text>
<text x="660.0" y="10" font-size="9" font-family="Liberation Sans">100</text>
<text x="827.0" y="10" font-size="9" font-family="Liberation Sans">200</text>
<text x="993.0" y="10" font-size="9" font-family="Liberation Sans">300</text>
<text x="1160.0" y="10" font-size="9" font-family="Liberation Sans">400</text>
<text x="1326.0" y="10" font-size="9" font-family="Liberation Sans">500</text>
<text x="1492.0" y="10" font-size="9" font-family="Liberation Sans">600</text>
<text x="1659.0" y="10" font-size="9" font-family="Liberation Sans">700</text>
<text x="1825.0" y="10" font-size="9" font-family="Liberation Sans">800</text>
</svg>
<svg class="a" style="left:35px;top:200px" width="18" height="699" viewBox="0 0 18 699">
<rect x="1" y="0" width="17" height="699" fill="#fff"/><path d="M0.5 0v699" stroke="#8a9098"/><path d="M17.5 0v699" stroke="#000"/>
<path d="M4 16.5h14M13 33.5h5M13 49.5h5M13 66.5h5M13 83.5h5M13 99.5h5M13 116.5h5M13 132.5h5M13 149.5h5M13 166.5h5M4 182.5h14M13 199.5h5M13 216.5h5M13 232.5h5M13 249.5h5M13 266.5h5M13 282.5h5M13 299.5h5M13 315.5h5M13 332.5h5M4 349.5h14M13 365.5h5M13 382.5h5M13 399.5h5M13 415.5h5M13 432.5h5M13 449.5h5M13 465.5h5M13 482.5h5M13 498.5h5M4 515.5h14M13 532.5h5M13 548.5h5M13 565.5h5M13 582.5h5M13 598.5h5M13 615.5h5M13 632.5h5M13 648.5h5M13 665.5h5M4 682.5h14M13 698.5h5" stroke="#000"/>
<text transform="translate(9,23.0) rotate(-90)" font-size="8.5" font-family="Liberation Sans">0</text>
<text transform="translate(9,197.5) rotate(-90)" font-size="8.5" font-family="Liberation Sans">100</text>
<text transform="translate(9,364.5) rotate(-90)" font-size="8.5" font-family="Liberation Sans">200</text>
<text transform="translate(9,530.5) rotate(-90)" font-size="8.5" font-family="Liberation Sans">300</text>
<text transform="translate(9,697.5) rotate(-90)" font-size="8.5" font-family="Liberation Sans">400</text>
</svg>
<div class="a" style="left:35px;top:182px;width:1868px;height:1px;background:#7d8696"></div>
<svg class="a" style="left:901px;top:183px" width="9" height="17" viewBox="0 0 9 17"><path d="M4.5 4v12.5" stroke="#f00" stroke-width="1.2"/><path d="M1.5 0.5 H7.5 L6.5 2.5 H5.5 L5 5 H4 L3.5 3z" fill="#f00"/></svg>
<svg class="a" style="left:36px;top:650px" width="17" height="9" viewBox="0 0 17 9"><path d="M4 4.5h12.5" stroke="#f00" stroke-width="1.2"/><path d="M0.5 1.5 V7.5 L2.5 6.5 V5.5 L5 5 V4 L3 3.5z" fill="#f00"/></svg>
<div id="canvas" class="a"></div>
<div class="a" style="left:0;top:0;width:1903px;height:899px;overflow:hidden;clip-path:inset(200px 0 0 53px)">
<div class="a" style="left:523px;top:211px;width:909px;height:660px;background:#fff;border:1px solid #ff0000;box-shadow:3px 2px 0 #7f7f7f"></div>
<div class="a" style="left:528px;top:216px;width:899px;height:650px;border:1px solid #808080"></div>
<div class="a" style="left:977px;top:211px;width:1px;height:660px;background:#808080"></div>
<div class="a" style="left:523px;top:884px;width:909px;height:20px;background:#fff;box-shadow:3px 2px 0 #7f7f7f"></div>
<div class="a" style="left:528px;top:888px;width:899px;height:20px;border:1px solid #808080"></div>
<div class="a" style="left:977px;top:884px;width:1px;height:20px;background:#808080"></div>
<div class="t" style="left:955px;top:872px;font-family:Liberation Serif;font-size:7.5px;color:#333;letter-spacing:.2px">04版 &nbsp;- &nbsp;01版</div>
<div class="a" style="left:561px;top:249px;width:384px;height:584px;border:1px dotted #777"></div>
<div class="a" style="left:561px;top:249px;width:78px;height:25px;background:#95b3d7"></div>
<div class="a" style="left:639px;top:261px;width:306px;height:13px;background:#95b3d7"></div>
<div class="t" style="left:570px;top:256px;font-size:11px;font-weight:bold;letter-spacing:4px;font-family:Liberation Serif">新闻报刊</div>
<div class="t" style="left:701px;top:251px;font-size:15px;font-weight:bold;color:#c00000;font-family:Liberation Serif;letter-spacing:5px">新闻</div><div class="t" style="left:765px;top:251px;font-size:15px;font-weight:bold;color:#c00000;font-family:Liberation Serif;letter-spacing:5px">综合</div>
<div class="t" style="left:844px;top:246px;font-size:25px;font-family:Liberation Serif">4</div>
<div class="t" style="left:864px;top:264px;font-size:6px;color:#333;font-family:Liberation Serif">0000 年 0 月 00 日 星期四</div>
<div class="hd" style="left:561px;top:286px">在此请输入标题</div>
<div class="bt" style="left:561px;top:297px;width:98px;height:39.00px"><div class="f">服务经验。金印客DPS排版软件简</div><div class="f">单好用，零基础也能排出专业作品</div><div class="f">。软件内有海量精美模板，不用设</div><div class="s">计、不用</div></div>

<div class="hd" style="left:561px;top:350px">在此请输入标题</div>
<div class="bt" style="left:561px;top:361px;width:98px;height:39.00px"><div class="f">服务经验。金印客DPS排版软件简</div><div class="f">单好用，零基础也能排出专业作品</div><div class="f">。软件内有海量精美模板，不用设</div><div class="s">计、不用</div></div>

<div class="hd" style="left:561px;top:414px">在此请输入标题</div>
<div class="bt" style="left:561px;top:425px;width:98px;height:39.00px"><div class="f">服务经验。金印客DPS排版软件简</div><div class="f">单好用，零基础也能排出专业作品</div><div class="f">。软件内有海量精美模板，不用设</div><div class="s">计、不用</div></div>

<div class="hd" style="left:561px;top:478px">在此请输入标题</div>
<div class="bt" style="left:561px;top:489px;width:98px;height:39.00px"><div class="f">服务经验。金印客DPS排版软件简</div><div class="f">单好用，零基础也能排出专业作品</div><div class="f">。软件内有海量精美模板，不用设</div><div class="s">计、不用</div></div>

<div class="a" style="left:663px;top:288px;width:1px;height:249px;background:#999"></div>
<div class="bh" style="left:762px;top:279px">在此请输入标题</div>
<div class="bt" style="left:672px;top:297px;width:82px;height:234.00px"><div class="f">金印客是一家专业数码与传统</div><div class="f">网络排版印刷的服务平台，拥</div><div class="f">有30多年印刷服务经验。金印</div><div class="f">客DPS排版软件简单好用，零</div><div class="f">基础也能排出专业作品。软件</div><div class="f">内有海量精美模板，不用设计</div><div class="f">、不用排版，直接套用模板，</div><div class="f">30分钟轻松搞定，有效节省你</div><div class="f">的排版时间和费用。作品排好</div><div class="f">后，无需到处寻找印刷厂，在</div><div class="f">DPS软件内下单印刷，快递直</div><div class="f">接送货上门。金印客是一家专</div><div class="f">业数码与传统网络排版印刷的</div><div class="f">服务平台，拥有30多年印刷服</div><div class="f">务经验。金印客DPS排版软件</div><div class="f">简单好用，零基础也能排出专</div><div class="f">业作品。软件内有海量精美模</div><div class="f">板，不用设计、不用排版，直</div><div class="f">接套用模板，30分钟轻松搞定</div><div class="f">，有效节省你的排版时间和费</div><div class="f">用。作品排好后，无需到处寻</div><div class="f">找印刷厂，在DPS软件内下单</div><div class="f">印刷，快递直接送货上门。金</div><div class="f">印客是一家专业数码与传统网</div></div>

<div class="bt" style="left:767px;top:297px;width:84px;height:117.00px"><div class="f">DPS排版软件简单好用，零基</div><div class="f">础也能排出专业作品。软件内</div><div class="f">有海量精美模板，不用设计、</div><div class="f">不用排版，直接套用模板，30</div><div class="f">分钟轻松搞定，有效节省你的</div><div class="f">排版时间和费用。作品排好后</div><div class="f">，无需到处寻找印刷厂，在</div><div class="f">DPS软件内下单印刷，快递直</div><div class="f">接送货上门。金印客是一家专</div><div class="f">业数码与传统网络排版印刷的</div><div class="f">服务平台，拥有30多年印刷服</div><div class="f">务经验。金印客DPS排版软件</div></div>

<div class="bt" style="left:862px;top:297px;width:83px;height:107.25px"><div class="f">平台，拥有30多年印刷服务经</div><div class="f">验。金印客DPS排版软件简单</div><div class="f">好用，零基础也能排出专业作</div><div class="f">品。软件内有海量精美模板，</div><div class="f">不用设计、不用排版，直接套</div><div class="f">用模板，30分钟轻松搞定，有</div><div class="f">效节省你的排版时间和费用。</div><div class="f">作品排好后，无需到处寻找印</div><div class="f">刷厂，在DPS软件内下单印刷</div><div class="f">，快递直接送货上门。金印客</div><div class="s">是一家专业数码与</div></div>

<svg class="a" style="left:767px;top:414px" width="176" height="112" viewBox="0 0 176 112">
<defs><linearGradient id="bg1" x1="0" y1="0" x2="0" y2="1"><stop offset="0" stop-color="#eef0f2"/><stop offset=".3" stop-color="#e2e5ea"/><stop offset=".6" stop-color="#a8b0bc"/><stop offset="1" stop-color="#7a8494"/></linearGradient></defs>
<rect width="176" height="112" fill="url(#bg1)"/>
<rect x="0" y="0" width="28" height="26" fill="#e8eaee"/><rect x="2" y="2" width="22" height="18" fill="#d8dce2"/><path d="M9 6l3 8M14 5l2 9" stroke="#d48090" stroke-width="1.3"/>
<path d="M25 0 H44 L47 28 L33 33z" fill="#2a3242"/>
<path d="M45 0 H176 V30 L120 34 L50 29z" fill="#eceef1"/>
<path d="M55 10 L98 22" stroke="#f0dc98" stroke-width="1.2"/>
<rect x="125" y="0" width="25" height="7" fill="#3c424e"/>
<path d="M42 29 L132 33 L136 70 L46 68z" fill="#6a7486"/>
<rect x="60" y="36" width="8" height="5" fill="#3a4a40"/>
<ellipse cx="55" cy="47" rx="30" ry="26" fill="none" stroke="#364055" stroke-width="4.5"/>
<circle cx="48" cy="46" r="5" fill="#c8c4a8"/>
<path d="M0 28 Q18 26 34 33 L44 40 Q36 54 28 66 Q18 88 12 112 H0z" fill="#3e5282"/>
<path d="M12 112 Q24 80 50 72 L78 74 L92 90 L84 112z" fill="#4a5e8c"/>
<path d="M0 58 Q12 50 26 58 L18 112 H0z" fill="#324674"/>
<path d="M34 24 Q44 20 52 27 L46 37 Q36 36 34 24z" fill="#d4a484"/>
<path d="M58 62 Q72 56 82 64 L76 77 Q62 77 58 62z" fill="#deb090"/>
<g transform="rotate(-22 30 98)"><rect x="17" y="86" width="26" height="24" rx="3" fill="#c42a20"/><circle cx="30" cy="96" r="5" fill="none" stroke="#e8b060" stroke-width="1"/></g>
<path d="M84 112 Q86 84 97 68 L108 84 L136 96 L144 112z" fill="#e6c2a4"/>
<g transform="rotate(-7 113 65)"><rect x="95" y="32" width="36" height="68" rx="4" fill="#1a1a1c"/>
<rect x="99" y="40" width="28" height="48" fill="#d2dedf"/><rect x="99" y="40" width="28" height="17" fill="#2c52aa"/><path d="M104 53 L118 44 L110 51 L122 46" stroke="#fff" stroke-width="1.2" fill="none"/></g>
<rect x="132" y="12" width="28" height="58" fill="#202c5c"/>
<rect x="145" y="25" width="14" height="40" fill="#5ab0c8"/>
<rect x="145" y="25" width="14" height="7" fill="#88c468"/>
<path d="M138 112 Q141 82 158 76 Q176 76 176 92" fill="none" stroke="#dcdcde" stroke-width="7"/>
<rect x="160" y="88" width="12" height="24" fill="#dc8a48"/>
<path d="M136 72 L176 70 L176 78 L150 79z" fill="#34383e"/>
</svg>
<div class="a" style="left:561px;top:537px;width:384px;height:1px;background:#999"></div>
<div class="a" style="left:742px;top:540px;width:1px;height:282px;background:#999"></div>
<div class="bh" style="left:604px;top:545px">在此请输入标题</div>
<svg class="a" style="left:562px;top:565px" width="173" height="92" viewBox="0 0 173 92">
<defs><linearGradient id="sky" x1="0" y1="0" x2="0" y2="1"><stop offset="0" stop-color="#93b6d8"/><stop offset=".45" stop-color="#c6d6e6"/><stop offset=".75" stop-color="#e4eaf0"/><stop offset="1" stop-color="#f0e8e2"/></linearGradient>
<linearGradient id="cl" x1="0" y1="0" x2="0" y2="1"><stop offset="0" stop-color="#e6d8d4"/><stop offset=".6" stop-color="#d4c6c6"/><stop offset="1" stop-color="#9aa0b2"/></linearGradient></defs>
<rect width="173" height="92" fill="url(#sky)"/>
<path d="M0 4 Q20 0 45 3 Q80 -1 110 4 Q135 6 138 14 Q140 26 120 30 Q90 34 60 32 Q30 36 10 33 Q0 32 0 30z" fill="url(#cl)"/>
<path d="M128 12 Q150 6 173 8 V44 Q150 44 132 36 Q120 30 128 12z" fill="#a8afc0"/>
<path d="M140 18 Q160 14 173 16 V30 Q155 30 140 26z" fill="#c8c4cc"/>
<rect x="15" y="39" width="16" height="36" fill="#e2e6ec"/><rect x="16" y="44" width="5" height="12" fill="#5a98a8"/>
<rect x="31" y="36" width="25" height="40" fill="#e8ecf2"/><rect x="32" y="37" width="7" height="15" fill="#4a8a98"/><path d="M42 40v10M45 40v10M48 40v10M51 40v10M54 40v10" stroke="#5a9aa0" stroke-width="1"/>
<rect x="22" y="58" width="8" height="17" fill="#3a8090"/>
<rect x="42" y="62" width="14" height="15" fill="#b8c8c8"/>
<rect x="58" y="60" width="20" height="20" fill="#dfe4ea"/><rect x="60" y="64" width="5" height="12" fill="#4a8898"/>
<rect x="78" y="56" width="10" height="26" fill="#eaeaea"/>
<rect x="85" y="70" width="11" height="16" fill="#f2f2f2"/><rect x="85" y="77" width="11" height="1" fill="#c83030"/>
<path d="M82 70 L102 52" stroke="#555" stroke-width="1"/>
<rect x="102" y="37" width="3" height="45" fill="#8a7a6a"/>
<rect x="105" y="40" width="8" height="42" fill="#2f6fa0"/><rect x="105" y="48" width="7" height="12" fill="#30a0a8"/>
<rect x="115" y="42" width="8" height="40" fill="#2a5ca0"/>
<rect x="107" y="62" width="20" height="8" fill="#2a9ca4"/>
<path d="M125 66 Q132 60 140 70 L138 86 H126z" fill="#8a8278"/>
<rect x="136" y="72" width="37" height="6" fill="#a07a58"/>
<rect x="136" y="78" width="37" height="5" fill="#5a6a4a"/>
<rect x="135" y="72" width="4" height="14" fill="#2a4a30"/>
<rect x="6" y="72" width="10" height="12" fill="#7a5a48"/>
<rect x="8" y="74" width="80" height="10" fill="#eef0f4"/><path d="M14 78h3M20 78h3M26 78h3M32 78h3" stroke="#334" stroke-width="1.5"/>
<rect x="40" y="80" width="60" height="5" fill="#9a8a78"/>
<rect x="142" y="80" width="31" height="9" fill="#dce6f0"/>
<rect x="0" y="84" width="173" height="2" fill="#cfd4d8"/>
<rect x="0" y="86" width="173" height="6" fill="#5e6e4c"/>
</svg>
<div class="bt" style="left:562px;top:660px;width:80px;height:165.75px"><div class="f">金印客是一家专业数码与传统</div><div class="f">网络排版印刷的服务平台，拥</div><div class="f">有30多年印刷服务经验。金印</div><div class="f">客DPS排版软件简单好用，零</div><div class="f">基础也能排出专业作品。软件</div><div class="f">内有海量精美模板，不用设计</div><div class="f">、不用排版，直接套用模板，</div><div class="f">30分钟轻松搞定，有效节省你</div><div class="f">的排版时间和费用。作品排好</div><div class="f">后，无需到处寻找印刷厂，在</div><div class="f">DPS软件内下单印刷，快递直</div><div class="s">接送货上门。金印客</div><div class="f">是一家专业数码与传统网络排</div><div class="f">版印刷的服务平台，拥有30多</div><div class="f">年印刷服务经验。金印客DPS</div><div class="f">排版软件简单好用，零基础也</div><div class="f">能排出专业作品。软件内有海</div></div>

<div class="bt" style="left:656px;top:660px;width:80px;height:156.00px"><div class="f">模板，不用设计、不用排版，</div><div class="f">直接套用模板，30分钟轻松搞</div><div class="f">定，有效节省你的排版时间和</div><div class="f">费用。作品排好后，无需到处</div><div class="f">寻找印刷厂，在DPS软件内下</div><div class="f">单印刷，快递直接送货上门。</div><div class="f">金印客是一家专业数码与传统</div><div class="f">网络排版印刷的服务平台，拥</div><div class="f">有30多年印刷服务经验。金印</div><div class="f">客DPS排版软件简单好用，零</div><div class="f">基础也能排出专业作品。软件</div><div class="f">内有海量精美模板，不用设计</div><div class="f">、不用排版，直接套用模板，</div><div class="f">30分钟轻松搞定，有效节省你</div><div class="f">的排版时间和费用。作品排好</div><div class="s">后，无需到处寻</div></div>

<div class="hd" style="left:748px;top:550px">在此请输入标题</div>
<div class="bt" style="left:748px;top:563px;width:92px;height:68.25px"><div class="f">金印客是一家专业数码与传统网</div><div class="f">络排版印刷的服务平台，拥有30</div><div class="f">多年印刷服务经验。金印客DPS</div><div class="f">排版软件简单好用，零基础也能</div><div class="f">排出专业作品。软件内有海量精</div><div class="f">美模板，不用设计、不用排版，</div><div class="f">直接套用模板，30分钟轻松搞定</div></div>

<div class="bt" style="left:853px;top:563px;width:92px;height:68.25px"><div class="f">定，有效节省你的排版时间和费</div><div class="f">用。作品排好后，无需到处寻找</div><div class="f">印刷厂，在DPS软件内下单印刷</div><div class="s">，快递直接送货上门。</div><div class="f">金印客是一家专业数码与传统网</div><div class="f">络排版印刷的服务平台，拥有30</div><div class="s">多年印刷服务经验</div></div>

<div class="hd" style="left:748px;top:647px">在此请输入标题</div>
<div class="bt" style="left:748px;top:660px;width:92px;height:68.25px"><div class="f">金印客是一家专业数码与传统网</div><div class="f">络排版印刷的服务平台，拥有30</div><div class="f">多年印刷服务经验。金印客DPS</div><div class="f">排版软件简单好用，零基础也能</div><div class="f">排出专业作品。软件内有海量精</div><div class="f">美模板，不用设计、不用排版，</div><div class="f">直接套用模板，30分钟轻松搞定</div></div>

<div class="bt" style="left:853px;top:660px;width:92px;height:68.25px"><div class="f">定，有效节省你的排版时间和费</div><div class="f">用。作品排好后，无需到处寻找</div><div class="f">印刷厂，在DPS软件内下单印刷</div><div class="s">，快递直接送货上门。</div><div class="f">金印客是一家专业数码与传统网</div><div class="f">络排版印刷的服务平台，拥有30</div><div class="s">多年印刷服务经验</div></div>

<div class="hd" style="left:748px;top:743px">在此请输入标题</div>
<div class="bt" style="left:748px;top:756px;width:92px;height:68.25px"><div class="f">金印客是一家专业数码与传统网</div><div class="f">络排版印刷的服务平台，拥有30</div><div class="f">多年印刷服务经验。金印客DPS</div><div class="f">排版软件简单好用，零基础也能</div><div class="f">排出专业作品。软件内有海量精</div><div class="f">美模板，不用设计、不用排版，</div><div class="f">直接套用模板，30分钟轻松搞定</div></div>

<div class="bt" style="left:853px;top:756px;width:92px;height:68.25px"><div class="f">定，有效节省你的排版时间和费</div><div class="f">用。作品排好后，无需到处寻找</div><div class="f">印刷厂，在DPS软件内下单印刷</div><div class="s">，快递直接送货上门。</div><div class="f">金印客是一家专业数码与传统网</div><div class="f">络排版印刷的服务平台，拥有30</div><div class="s">多年印刷服务经验</div></div>

<div class="a" style="left:1010px;top:249px;width:384px;height:584px;border:1px dotted #777;border-bottom:none"></div>
<div class="t" style="left:1076px;top:261px;font-size:58px;font-weight:500;color:#c8000a;letter-spacing:6.7px;font-family:Liberation Serif">新闻报刊</div>
<div class="a" style="left:1011px;top:322px;width:383px;height:15px;background:#d3d3d3"></div>
<div class="t" style="left:1221px;top:326px;font-size:9px;color:#111">2018 年 4 月 12 日  星期四 &nbsp; 总第 1335 期</div>
<div class="t" style="left:1149px;top:344px;font-size:15px;color:#111">在此请输入标题</div>
<div class="bt" style="left:1010px;top:366px;width:87px;height:165.75px"><div class="f">金印客是一家专业数码与传统</div><div class="f">网络排版印刷的服务平台，拥</div><div class="f">有30多年印刷服务经验。金印</div><div class="f">客DPS排版软件简单好用，零</div><div class="f">基础也能排出专业作品。软件</div><div class="f">内有海量精美模板，不用设计</div><div class="f">、不用排版，直接套用模板，</div><div class="f">30分钟轻松搞定，有效节省你</div><div class="f">的排版时间和费用。作品排好</div><div class="f">后，无需到处寻找印刷厂，在</div><div class="f">DPS软件内下单印刷，快递直</div><div class="f">接送货上门。金印客是一家专</div><div class="f">业数码与传统网络排版印刷的</div><div class="f">服务平台，拥有30多年印刷服</div><div class="f">务经验。金印客DPS排版软件</div><div class="f">简单好用，零基础也能排出专</div><div class="f">业作品。软件内有海量精美模</div></div>

<div class="bt" style="left:1109px;top:366px;width:87px;height:165.75px"><div class="f">内有海量精美模板，不用设计</div><div class="f">、不用排版，直接套用模板，</div><div class="f">30分钟轻松搞定，有效节省你</div><div class="f">的排版时间和费用。作品排好</div><div class="f">后，无需到处寻找印刷厂，在</div><div class="f">DPS软件内下单印刷，快递直</div><div class="f">接送货上门。金印客是一家专</div><div class="f">业数码与传统网络排版印刷的</div><div class="f">服务平台，拥有30多年印刷服</div><div class="f">务经验。金印客DPS排版软件</div><div class="f">简单好用，零基础也能排出专</div><div class="f">业作品。软件内有海量精美模</div><div class="f">板，不用设计、不用排版，直</div><div class="f">接套用模板，30分钟轻松搞定</div><div class="f">，有效节省你的排版时间和费</div><div class="f">用。作品排好后，无需到处寻</div><div class="f">找印刷厂，在DPS软件内下单</div></div>

<div class="bt" style="left:1208px;top:366px;width:87px;height:165.75px"><div class="s">到处寻找印刷厂</div><div class="f">，在DPS软件内下单印刷，快</div><div class="f">递直接送货上门。金印客是一</div><div class="f">家专业数码与传统网络排版印</div><div class="f">刷的服务平台，拥有30多年印</div><div class="f">刷服务经验。金印客DPS排版</div><div class="f">软件简单好用，零基础也能排</div><div class="f">出专业作品。软件内有海量精</div><div class="f">美模板，不用设计、不用排版</div><div class="f">，直接套用模板，30分钟轻松</div><div class="f">搞定，有效节省你的排版时间</div><div class="f">和费用。作品排好后，无需到</div><div class="s">处寻找印刷厂，在</div><div class="f">DPS软件内下单印刷，快递直</div><div class="f">接送货上门。金印客是一家专</div><div class="f">业数码与传统网络排版印刷的</div><div class="f">服务平台，拥有30多年印刷服</div></div>

<div class="bt" style="left:1307px;top:366px;width:87px;height:156.00px"><div class="f">础也能排出专业作品。软件内</div><div class="f">有海量精美模板，不用设计、</div><div class="f">不用排版，直接套用模板，30</div><div class="f">分钟轻松搞定，有效节省你的</div><div class="f">排版时间和费用。作品排好后</div><div class="f">，无需到处寻找印刷厂，在</div><div class="f">DPS软件内下单印刷，快递直</div><div class="f">接送货上门。金印客是一家专</div><div class="f">业数码与传统网络排版印刷的</div><div class="f">服务平台，拥有30多年印刷服</div><div class="f">务经验。金印客DPS排版软件</div><div class="f">简单好用，零基础也能排出专</div><div class="s">业作品。软件</div><div class="f">内有海量精美模板，不用设计</div><div class="s">、不用排版，直接套用模板</div><div class="s">，30分钟轻松搞定，有效</div></div>

<div class="a" style="left:1010px;top:536px;width:185px;height:296px;border:1.5px solid #333"></div>
<svg class="a" style="left:1015px;top:542px" width="174" height="87" viewBox="0 0 174 87"><defs><linearGradient id="cs1015" x1="0" y1="0" x2="0" y2="1"><stop offset="0" stop-color="#5a9ad0"/><stop offset=".05" stop-color="#3f78b0"/><stop offset=".14" stop-color="#3e6a88"/><stop offset=".3" stop-color="#6e8088"/><stop offset=".45" stop-color="#5a7050"/><stop offset="1" stop-color="#44563c"/></linearGradient></defs><rect width="174" height="87" fill="url(#cs1015)"/><rect x="79" y="53" width="1.5" height="1.5" fill="#9aa8b8"/><rect x="79" y="76" width="1.5" height="1.5" fill="#b86a50"/><rect x="32" y="49" width="1.5" height="1.5" fill="#a0a8a0"/><rect x="107" y="24" width="1.5" height="1.5" fill="#9aa8b8"/><rect x="53" y="17" width="1.5" height="1.5" fill="#7890b0"/><rect x="110" y="56" width="1.5" height="1.5" fill="#6a9a5a"/><rect x="168" y="60" width="1.5" height="1.5" fill="#202820"/><rect x="113" y="58" width="1.5" height="1.5" fill="#4a6a38"/><rect x="11" y="13" width="1.5" height="1.5" fill="#b86a50"/><rect x="104" y="70" width="1.5" height="1.5" fill="#1c2a18"/><rect x="77" y="75" width="1.5" height="1.5" fill="#4a6a38"/><rect x="41" y="33" width="1.5" height="1.5" fill="#c8c0b0"/><rect x="115" y="45" width="1.5" height="1.5" fill="#e0e0e0"/><rect x="71" y="52" width="1.5" height="1.5" fill="#8a9aa8"/><rect x="123" y="34" width="1.5" height="1.5" fill="#b86a50"/><rect x="89" y="12" width="1.5" height="1.5" fill="#202820"/><rect x="133" y="41" width="1.5" height="1.5" fill="#e0e0e0"/><rect x="67" y="84" width="1.5" height="1.5" fill="#a0a8a0"/><rect x="0" y="26" width="1.5" height="1.5" fill="#c8c0b0"/><rect x="82" y="85" width="1.5" height="1.5" fill="#6a9a5a"/><rect x="73" y="54" width="1.5" height="1.5" fill="#b86a50"/><rect x="135" y="31" width="1.5" height="1.5" fill="#8a9aa8"/><rect x="54" y="11" width="1.5" height="1.5" fill="#6a9a5a"/><rect x="132" y="19" width="1.5" height="1.5" fill="#b86a50"/><rect x="123" y="11" width="1.5" height="1.5" fill="#9aa8b8"/><rect x="139" y="24" width="1.5" height="1.5" fill="#4a6a38"/><rect x="33" y="49" width="1.5" height="1.5" fill="#7890b0"/><rect x="134" y="42" width="1.5" height="1.5" fill="#6a9a5a"/><rect x="20" y="42" width="1.5" height="1.5" fill="#b86a50"/><rect x="0" y="77" width="1.5" height="1.5" fill="#202820"/><rect x="53" y="78" width="1.5" height="1.5" fill="#b86a50"/><rect x="33" y="87" width="1.5" height="1.5" fill="#202820"/><rect x="112" y="18" width="1.5" height="1.5" fill="#2e4a28"/><rect x="37" y="30" width="1.5" height="1.5" fill="#202820"/><rect x="57" y="33" width="1.5" height="1.5" fill="#8a9aa8"/><rect x="13" y="26" width="1.5" height="1.5" fill="#a0a8a0"/><rect x="42" y="56" width="1.5" height="1.5" fill="#1c2a18"/><rect x="108" y="20" width="1.5" height="1.5" fill="#202820"/><rect x="84" y="54" width="1.5" height="1.5" fill="#6a9a5a"/><rect x="32" y="22" width="1.5" height="1.5" fill="#b86a50"/><rect x="142" y="29" width="1.5" height="1.5" fill="#b86a50"/><rect x="28" y="58" width="1.5" height="1.5" fill="#4a6a38"/><rect x="34" y="83" width="1.5" height="1.5" fill="#9aa8b8"/><rect x="105" y="42" width="1.5" height="1.5" fill="#8a9aa8"/><rect x="19" y="49" width="1.5" height="1.5" fill="#e0e0e0"/><rect x="41" y="64" width="1.5" height="1.5" fill="#e0e0e0"/><rect x="73" y="80" width="1.5" height="1.5" fill="#9aa8b8"/><rect x="51" y="24" width="1.5" height="1.5" fill="#7890b0"/><rect x="170" y="20" width="1.5" height="1.5" fill="#9aa8b8"/><rect x="97" y="76" width="1.5" height="1.5" fill="#202820"/><rect x="13" y="26" width="1.5" height="1.5" fill="#b86a50"/><rect x="130" y="15" width="1.5" height="1.5" fill="#6a9a5a"/><rect x="78" y="15" width="1.5" height="1.5" fill="#2e4a28"/><rect x="49" y="51" width="1.5" height="1.5" fill="#2e4a28"/><rect x="16" y="21" width="1.5" height="1.5" fill="#9aa8b8"/><rect x="171" y="61" width="1.5" height="1.5" fill="#7890b0"/><rect x="91" y="83" width="1.5" height="1.5" fill="#202820"/><rect x="6" y="11" width="1.5" height="1.5" fill="#1c2a18"/><rect x="122" y="84" width="1.5" height="1.5" fill="#c8c0b0"/><rect x="104" y="16" width="1.5" height="1.5" fill="#8a9aa8"/><rect x="127" y="35" width="1.5" height="1.5" fill="#8a9aa8"/><rect x="13" y="52" width="1.5" height="1.5" fill="#7890b0"/><rect x="8" y="82" width="1.5" height="1.5" fill="#7890b0"/><rect x="122" y="71" width="1.5" height="1.5" fill="#1c2a18"/><rect x="61" y="63" width="1.5" height="1.5" fill="#8a9aa8"/><rect x="152" y="42" width="1.5" height="1.5" fill="#c8c0b0"/><rect x="150" y="54" width="1.5" height="1.5" fill="#202820"/><rect x="115" y="39" width="1.5" height="1.5" fill="#c8c0b0"/><rect x="106" y="16" width="1.5" height="1.5" fill="#a0a8a0"/><rect x="20" y="30" width="1.5" height="1.5" fill="#6a9a5a"/><rect x="127" y="40" width="1.5" height="1.5" fill="#7890b0"/><rect x="121" y="45" width="1.5" height="1.5" fill="#9aa8b8"/><rect x="146" y="16" width="1.5" height="1.5" fill="#4a6a38"/><rect x="5" y="56" width="1.5" height="1.5" fill="#9aa8b8"/><rect x="4" y="84" width="1.5" height="1.5" fill="#8a9aa8"/><rect x="87" y="57" width="1.5" height="1.5" fill="#9aa8b8"/><rect x="45" y="11" width="1.5" height="1.5" fill="#e0e0e0"/><rect x="25" y="57" width="1.5" height="1.5" fill="#4a6a38"/><rect x="30" y="80" width="1.5" height="1.5" fill="#a0a8a0"/><rect x="162" y="48" width="1.5" height="1.5" fill="#b86a50"/><rect x="57" y="61" width="1.5" height="1.5" fill="#b86a50"/><rect x="110" y="72" width="1.5" height="1.5" fill="#b86a50"/><rect x="153" y="40" width="1.5" height="1.5" fill="#202820"/><rect x="160" y="26" width="1.5" height="1.5" fill="#2e4a28"/><rect x="86" y="74" width="1.5" height="1.5" fill="#c8c0b0"/><rect x="124" y="83" width="1.5" height="1.5" fill="#e0e0e0"/><rect x="143" y="19" width="1.5" height="1.5" fill="#9aa8b8"/><rect x="48" y="26" width="1.5" height="1.5" fill="#6a9a5a"/><rect x="67" y="50" width="1.5" height="1.5" fill="#a0a8a0"/><rect x="55" y="75" width="1.5" height="1.5" fill="#202820"/><rect x="79" y="16" width="1.5" height="1.5" fill="#c8c0b0"/><rect x="48" y="57" width="1.5" height="1.5" fill="#a0a8a0"/><rect x="123" y="54" width="1.5" height="1.5" fill="#e0e0e0"/><rect x="113" y="53" width="1.5" height="1.5" fill="#a0a8a0"/><rect x="24" y="45" width="1.5" height="1.5" fill="#c8c0b0"/><rect x="134" y="31" width="1.5" height="1.5" fill="#2e4a28"/><rect x="139" y="86" width="1.5" height="1.5" fill="#8a9aa8"/><rect x="78" y="59" width="1.5" height="1.5" fill="#a0a8a0"/><rect x="111" y="38" width="1.5" height="1.5" fill="#8a9aa8"/><rect x="119" y="25" width="1.5" height="1.5" fill="#9aa8b8"/><rect x="45" y="65" width="1.5" height="1.5" fill="#9aa8b8"/><rect x="93" y="13" width="1.5" height="1.5" fill="#b86a50"/><rect x="47" y="37" width="1.5" height="1.5" fill="#7890b0"/><rect x="165" y="49" width="1.5" height="1.5" fill="#2e4a28"/><rect x="68" y="71" width="1.5" height="1.5" fill="#b86a50"/><rect x="15" y="82" width="1.5" height="1.5" fill="#7890b0"/><rect x="68" y="45" width="1.5" height="1.5" fill="#b86a50"/><rect x="109" y="80" width="1.5" height="1.5" fill="#6a9a5a"/><rect x="96" y="60" width="1.5" height="1.5" fill="#4a6a38"/><rect x="139" y="83" width="1.5" height="1.5" fill="#9aa8b8"/><rect x="57" y="86" width="1.5" height="1.5" fill="#8a9aa8"/><rect x="126" y="73" width="1.5" height="1.5" fill="#a0a8a0"/><rect x="161" y="20" width="1.5" height="1.5" fill="#b86a50"/><rect x="157" y="85" width="1.5" height="1.5" fill="#e0e0e0"/><rect x="93" y="71" width="1.5" height="1.5" fill="#1c2a18"/><rect x="46" y="65" width="1.5" height="1.5" fill="#c8c0b0"/><rect x="61" y="16" width="1.5" height="1.5" fill="#9aa8b8"/><rect x="60" y="42" width="1.5" height="1.5" fill="#e0e0e0"/><rect x="85" y="12" width="1.5" height="1.5" fill="#8a9aa8"/><rect x="75" y="13" width="1.5" height="1.5" fill="#4a6a38"/><rect x="58" y="71" width="1.5" height="1.5" fill="#2e4a28"/><rect x="82" y="87" width="1.5" height="1.5" fill="#7890b0"/><rect x="90" y="62" width="1.5" height="1.5" fill="#9aa8b8"/><rect x="165" y="48" width="1.5" height="1.5" fill="#7890b0"/><rect x="15" y="27" width="1.5" height="1.5" fill="#4a6a38"/><rect x="97" y="74" width="1.5" height="1.5" fill="#4a6a38"/><rect x="111" y="50" width="1.5" height="1.5" fill="#4a6a38"/><rect x="45" y="62" width="1.5" height="1.5" fill="#202820"/><rect x="36" y="76" width="1.5" height="1.5" fill="#4a6a38"/><rect x="91" y="54" width="1.5" height="1.5" fill="#b86a50"/><rect x="72" y="19" width="1.5" height="1.5" fill="#c8c0b0"/><rect x="105" y="12" width="1.5" height="1.5" fill="#c8c0b0"/><rect x="90" y="41" width="1.5" height="1.5" fill="#202820"/><rect x="21" y="17" width="1.5" height="1.5" fill="#2e4a28"/><rect x="11" y="51" width="1.5" height="1.5" fill="#6a9a5a"/><rect x="160" y="72" width="1.5" height="1.5" fill="#6a9a5a"/><rect x="47" y="46" width="1.5" height="1.5" fill="#2e4a28"/><rect x="59" y="79" width="1.5" height="1.5" fill="#9aa8b8"/><rect x="91" y="18" width="1.5" height="1.5" fill="#6a9a5a"/><rect x="108" y="81" width="1.5" height="1.5" fill="#2e4a28"/><rect x="122" y="85" width="1.5" height="1.5" fill="#c8c0b0"/><rect x="34" y="27" width="1.5" height="1.5" fill="#a0a8a0"/><rect x="49" y="66" width="1.5" height="1.5" fill="#b86a50"/><rect x="108" y="18" width="1.5" height="1.5" fill="#7890b0"/><rect x="101" y="76" width="1.5" height="1.5" fill="#202820"/><rect x="44" y="25" width="1.5" height="1.5" fill="#4a6a38"/><rect x="153" y="12" width="1.5" height="1.5" fill="#a0a8a0"/><rect x="72" y="51" width="1.5" height="1.5" fill="#2e4a28"/><rect x="94" y="77" width="1.5" height="1.5" fill="#4a6a38"/><rect x="111" y="51" width="1.5" height="1.5" fill="#4a6a38"/><rect x="106" y="76" width="1.5" height="1.5" fill="#b86a50"/><rect x="159" y="58" width="1.5" height="1.5" fill="#1c2a18"/><rect x="157" y="34" width="1.5" height="1.5" fill="#1c2a18"/><rect x="155" y="25" width="1.5" height="1.5" fill="#b86a50"/><rect x="154" y="20" width="1.5" height="1.5" fill="#b86a50"/><rect x="23" y="17" width="1.5" height="1.5" fill="#6a9a5a"/><rect x="17" y="74" width="1.5" height="1.5" fill="#6a9a5a"/><rect x="95" y="64" width="1.5" height="1.5" fill="#b86a50"/><rect x="70" y="63" width="1.5" height="1.5" fill="#c8c0b0"/><rect x="17" y="54" width="1.5" height="1.5" fill="#1c2a18"/><rect x="159" y="85" width="1.5" height="1.5" fill="#8a9aa8"/><rect x="123" y="59" width="1.5" height="1.5" fill="#1c2a18"/><rect x="87" y="63" width="1.5" height="1.5" fill="#b86a50"/><rect x="140" y="47" width="1.5" height="1.5" fill="#c8c0b0"/><rect x="7" y="52" width="1.5" height="1.5" fill="#4a6a38"/><rect x="157" y="47" width="1.5" height="1.5" fill="#b86a50"/><rect x="32" y="26" width="1.5" height="1.5" fill="#2e4a28"/><rect x="172" y="81" width="1.5" height="1.5" fill="#8a9aa8"/><rect x="101" y="20" width="1.5" height="1.5" fill="#a0a8a0"/><rect x="80" y="69" width="1.5" height="1.5" fill="#1c2a18"/><rect x="68" y="43" width="1.5" height="1.5" fill="#1c2a18"/><rect x="75" y="56" width="1.5" height="1.5" fill="#c8c0b0"/><rect x="110" y="13" width="1.5" height="1.5" fill="#b86a50"/><rect x="32" y="45" width="1.5" height="1.5" fill="#7890b0"/><rect x="64" y="81" width="1.5" height="1.5" fill="#202820"/><rect x="29" y="49" width="1.5" height="1.5" fill="#c8c0b0"/><rect x="56" y="17" width="1.5" height="1.5" fill="#7890b0"/><rect x="152" y="80" width="1.5" height="1.5" fill="#6a9a5a"/><rect x="99" y="25" width="1.5" height="1.5" fill="#202820"/><rect x="171" y="72" width="1.5" height="1.5" fill="#e0e0e0"/><rect x="49" y="19" width="1.5" height="1.5" fill="#7890b0"/><rect x="135" y="73" width="1.5" height="1.5" fill="#6a9a5a"/><rect x="23" y="35" width="1.5" height="1.5" fill="#4a6a38"/><rect x="121" y="69" width="1.5" height="1.5" fill="#2e4a28"/><rect x="71" y="66" width="1.5" height="1.5" fill="#8a9aa8"/><rect x="139" y="33" width="1.5" height="1.5" fill="#8a9aa8"/><rect x="2" y="37" width="1.5" height="1.5" fill="#a0a8a0"/><rect x="157" y="14" width="1.5" height="1.5" fill="#e0e0e0"/><rect x="164" y="61" width="1.5" height="1.5" fill="#1c2a18"/><rect x="38" y="41" width="1.5" height="1.5" fill="#2e4a28"/><rect x="93" y="40" width="1.5" height="1.5" fill="#9aa8b8"/><rect x="112" y="64" width="1.5" height="1.5" fill="#6a9a5a"/><rect x="171" y="12" width="1.5" height="1.5" fill="#202820"/><rect x="19" y="28" width="1.5" height="1.5" fill="#9aa8b8"/><rect x="70" y="14" width="1.5" height="1.5" fill="#b86a50"/><rect x="113" y="11" width="1.5" height="1.5" fill="#e0e0e0"/><rect x="44" y="80" width="1.5" height="1.5" fill="#4a6a38"/><rect x="94" y="42" width="1.5" height="1.5" fill="#4a6a38"/><rect x="99" y="87" width="1.5" height="1.5" fill="#a0a8a0"/><rect x="77" y="60" width="1.5" height="1.5" fill="#4a6a38"/><rect x="104" y="68" width="1.5" height="1.5" fill="#c8c0b0"/><rect x="67" y="82" width="1.5" height="1.5" fill="#6a9a5a"/><rect x="82" y="23" width="1.5" height="1.5" fill="#9aa8b8"/><rect x="94" y="56" width="1.5" height="1.5" fill="#6a9a5a"/><rect x="164" y="42" width="1.5" height="1.5" fill="#4a6a38"/><rect x="69" y="34" width="1.5" height="1.5" fill="#4a6a38"/><rect x="50" y="60" width="1.5" height="1.5" fill="#4a6a38"/><rect x="162" y="61" width="1.5" height="1.5" fill="#7890b0"/><rect x="52" y="11" width="1.5" height="1.5" fill="#b86a50"/><rect x="102" y="59" width="1.5" height="1.5" fill="#6a9a5a"/><rect x="131" y="40" width="1.5" height="1.5" fill="#1c2a18"/><rect x="130" y="14" width="1.5" height="1.5" fill="#7890b0"/><rect x="164" y="16" width="1.5" height="1.5" fill="#b86a50"/><rect x="75" y="47" width="1.5" height="1.5" fill="#b86a50"/><rect x="8" y="18" width="1.5" height="1.5" fill="#7890b0"/><rect x="158" y="21" width="1.5" height="1.5" fill="#b86a50"/><rect x="105" y="19" width="1.5" height="1.5" fill="#202820"/><rect x="73" y="19" width="1.5" height="1.5" fill="#c8c0b0"/><rect x="62" y="22" width="1.5" height="1.5" fill="#1c2a18"/><rect x="77" y="61" width="1.5" height="1.5" fill="#9aa8b8"/><rect x="105" y="59" width="1.5" height="1.5" fill="#a0a8a0"/><rect x="73" y="70" width="1.5" height="1.5" fill="#4a6a38"/><rect x="142" y="21" width="1.5" height="1.5" fill="#e0e0e0"/><rect x="128" y="28" width="1.5" height="1.5" fill="#8a9aa8"/><rect x="88" y="34" width="1.5" height="1.5" fill="#4a6a38"/><rect x="109" y="38" width="1.5" height="1.5" fill="#e0e0e0"/><rect x="106" y="66" width="1.5" height="1.5" fill="#7890b0"/><rect x="103" y="59" width="1.5" height="1.5" fill="#b86a50"/><rect x="33" y="29" width="1.5" height="1.5" fill="#a0a8a0"/><rect x="159" y="78" width="1.5" height="1.5" fill="#c8c0b0"/><rect x="109" y="11" width="1.5" height="1.5" fill="#e0e0e0"/><rect x="74" y="58" width="1.5" height="1.5" fill="#8a9aa8"/><rect x="39" y="31" width="1.5" height="1.5" fill="#8a9aa8"/><rect x="159" y="22" width="1.5" height="1.5" fill="#b86a50"/><rect x="110" y="39" width="1.5" height="1.5" fill="#9aa8b8"/><rect x="62" y="36" width="1.5" height="1.5" fill="#9aa8b8"/><rect x="130" y="75" width="1.5" height="1.5" fill="#8a9aa8"/><rect x="140" y="44" width="1.5" height="1.5" fill="#202820"/><rect x="146" y="69" width="1.5" height="1.5" fill="#9aa8b8"/><rect x="74" y="30" width="1.5" height="1.5" fill="#2e4a28"/><rect x="64" y="60" width="1.5" height="1.5" fill="#202820"/><rect x="57" y="52" width="1.5" height="1.5" fill="#7890b0"/><rect x="144" y="24" width="1.5" height="1.5" fill="#a0a8a0"/><rect x="64" y="17" width="1.5" height="1.5" fill="#1c2a18"/><rect x="14" y="16" width="1.5" height="1.5" fill="#202820"/><rect x="99" y="73" width="1.5" height="1.5" fill="#9aa8b8"/><rect x="52" y="70" width="1.5" height="1.5" fill="#8a9aa8"/><rect x="54" y="80" width="1.5" height="1.5" fill="#202820"/><rect x="14" y="33" width="1.5" height="1.5" fill="#7890b0"/><rect x="133" y="35" width="1.5" height="1.5" fill="#2e4a28"/><rect x="38" y="61" width="1.5" height="1.5" fill="#1c2a18"/><rect x="64" y="19" width="1.5" height="1.5" fill="#7890b0"/><rect x="77" y="56" width="1.5" height="1.5" fill="#a0a8a0"/><rect x="159" y="44" width="1.5" height="1.5" fill="#e0e0e0"/><rect x="80" y="27" width="1.5" height="1.5" fill="#7890b0"/><rect x="156" y="29" width="1.5" height="1.5" fill="#1c2a18"/><rect x="144" y="12" width="1.5" height="1.5" fill="#a0a8a0"/><rect x="69" y="40" width="1.5" height="1.5" fill="#b86a50"/><rect x="129" y="38" width="1.5" height="1.5" fill="#6a9a5a"/><rect x="94" y="74" width="1.5" height="1.5" fill="#202820"/><rect x="31" y="17" width="1.5" height="1.5" fill="#9aa8b8"/><rect x="153" y="32" width="1.5" height="1.5" fill="#c8c0b0"/><rect x="38" y="14" width="1.5" height="1.5" fill="#2e4a28"/><rect x="99" y="84" width="1.5" height="1.5" fill="#a0a8a0"/><rect x="146" y="43" width="1.5" height="1.5" fill="#202820"/><rect x="95" y="71" width="1.5" height="1.5" fill="#8a9aa8"/><rect x="58" y="31" width="1.5" height="1.5" fill="#8a9aa8"/><rect x="156" y="17" width="1.5" height="1.5" fill="#a0a8a0"/><rect x="114" y="18" width="1.5" height="1.5" fill="#a0a8a0"/><rect x="73" y="65" width="1.5" height="1.5" fill="#9aa8b8"/><rect x="133" y="50" width="1.5" height="1.5" fill="#9aa8b8"/><rect x="69" y="36" width="1.5" height="1.5" fill="#1c2a18"/><rect x="117" y="48" width="1.5" height="1.5" fill="#4a6a38"/><rect x="140" y="16" width="1.5" height="1.5" fill="#202820"/><rect x="159" y="42" width="1.5" height="1.5" fill="#a0a8a0"/><rect x="61" y="10" width="1.5" height="1.5" fill="#6a9a5a"/><rect x="145" y="78" width="1.5" height="1.5" fill="#4a6a38"/><rect x="111" y="50" width="1.5" height="1.5" fill="#7890b0"/><rect x="2" y="18" width="1.5" height="1.5" fill="#6a9a5a"/><rect x="159" y="29" width="1.5" height="1.5" fill="#2e4a28"/><rect x="172" y="39" width="1.5" height="1.5" fill="#2e4a28"/><rect x="56" y="40" width="1.5" height="1.5" fill="#4a6a38"/><rect x="51" y="85" width="1.5" height="1.5" fill="#c8c0b0"/><rect x="82" y="66" width="1.5" height="1.5" fill="#e0e0e0"/><rect x="113" y="70" width="1.5" height="1.5" fill="#2e4a28"/><rect x="159" y="68" width="1.5" height="1.5" fill="#c8c0b0"/><rect x="102" y="80" width="1.5" height="1.5" fill="#c8c0b0"/><rect x="54" y="25" width="1.5" height="1.5" fill="#1c2a18"/><rect x="38" y="28" width="1.5" height="1.5" fill="#7890b0"/><rect x="82" y="49" width="1.5" height="1.5" fill="#9aa8b8"/><rect x="32" y="32" width="1.5" height="1.5" fill="#2e4a28"/><rect x="158" y="82" width="1.5" height="1.5" fill="#a0a8a0"/><rect x="95" y="73" width="1.5" height="1.5" fill="#9aa8b8"/><rect x="148" y="47" width="1.5" height="1.5" fill="#6a9a5a"/><rect x="159" y="36" width="1.5" height="1.5" fill="#4a6a38"/><rect x="134" y="17" width="1.5" height="1.5" fill="#b86a50"/><rect x="70" y="27" width="1.5" height="1.5" fill="#2e4a28"/><rect x="139" y="40" width="1.5" height="1.5" fill="#4a6a38"/><rect x="138" y="70" width="1.5" height="1.5" fill="#c8c0b0"/><rect x="114" y="28" width="1.5" height="1.5" fill="#c8c0b0"/><rect x="152" y="80" width="1.5" height="1.5" fill="#9aa8b8"/><rect x="139" y="65" width="1.5" height="1.5" fill="#202820"/><rect x="152" y="42" width="1.5" height="1.5" fill="#1c2a18"/><rect x="25" y="80" width="1.5" height="1.5" fill="#4a6a38"/><rect x="23" y="67" width="1.5" height="1.5" fill="#202820"/><rect x="46" y="51" width="1.5" height="1.5" fill="#2e4a28"/><rect x="100" y="24" width="1.5" height="1.5" fill="#b86a50"/><rect x="143" y="75" width="1.5" height="1.5" fill="#2e4a28"/><rect x="14" y="31" width="1.5" height="1.5" fill="#7890b0"/><rect x="92" y="79" width="1.5" height="1.5" fill="#7890b0"/><rect x="82" y="84" width="1.5" height="1.5" fill="#202820"/><rect x="95" y="49" width="1.5" height="1.5" fill="#c8c0b0"/><rect x="137" y="42" width="1.5" height="1.5" fill="#a0a8a0"/><rect x="16" y="74" width="1.5" height="1.5" fill="#b86a50"/><rect x="6" y="42" width="1.5" height="1.5" fill="#9aa8b8"/><rect x="27" y="74" width="1.5" height="1.5" fill="#e0e0e0"/><rect x="55" y="41" width="1.5" height="1.5" fill="#4a6a38"/><rect x="53" y="46" width="1.5" height="1.5" fill="#7890b0"/><rect x="12" y="16" width="1.5" height="1.5" fill="#2e4a28"/><rect x="18" y="40" width="1.5" height="1.5" fill="#9aa8b8"/><rect x="130" y="70" width="1.5" height="1.5" fill="#8a9aa8"/><rect x="114" y="11" width="1.5" height="1.5" fill="#6a9a5a"/><rect x="124" y="47" width="1.5" height="1.5" fill="#e0e0e0"/><rect x="98" y="45" width="1.5" height="1.5" fill="#c8c0b0"/><rect x="149" y="75" width="1.5" height="1.5" fill="#7890b0"/><rect x="36" y="57" width="1.5" height="1.5" fill="#e0e0e0"/><rect x="109" y="82" width="1.5" height="1.5" fill="#7890b0"/><rect x="52" y="36" width="1.5" height="1.5" fill="#6a9a5a"/><rect x="97" y="17" width="1.5" height="1.5" fill="#b86a50"/><rect x="35" y="66" width="1.5" height="1.5" fill="#1c2a18"/><rect x="54" y="31" width="1.5" height="1.5" fill="#9aa8b8"/><rect x="126" y="36" width="1.5" height="1.5" fill="#6a9a5a"/><rect x="16" y="21" width="1.5" height="1.5" fill="#8a9aa8"/><rect x="23" y="59" width="1.5" height="1.5" fill="#2e4a28"/><rect x="31" y="41" width="1.5" height="1.5" fill="#9aa8b8"/><rect x="103" y="17" width="1.5" height="1.5" fill="#b86a50"/><rect x="6" y="86" width="1.5" height="1.5" fill="#6a9a5a"/><rect x="71" y="16" width="1.5" height="1.5" fill="#6a9a5a"/><rect x="161" y="21" width="1.5" height="1.5" fill="#b86a50"/><rect x="133" y="73" width="1.5" height="1.5" fill="#6a9a5a"/><rect x="84" y="81" width="1.5" height="1.5" fill="#202820"/><rect x="3" y="41" width="1.5" height="1.5" fill="#7890b0"/><rect x="55" y="71" width="1.5" height="1.5" fill="#b86a50"/><rect x="115" y="57" width="1.5" height="1.5" fill="#c8c0b0"/><rect x="45" y="25" width="1.5" height="1.5" fill="#e0e0e0"/><rect x="113" y="18" width="1.5" height="1.5" fill="#6a9a5a"/><rect x="36" y="36" width="1.5" height="1.5" fill="#e0e0e0"/><rect x="144" y="57" width="1.5" height="1.5" fill="#2e4a28"/><rect x="44" y="51" width="1.5" height="1.5" fill="#e0e0e0"/><rect x="95" y="37" width="1.5" height="1.5" fill="#4a6a38"/><rect x="89" y="54" width="1.5" height="1.5" fill="#b86a50"/><rect x="172" y="50" width="1.5" height="1.5" fill="#7890b0"/><rect x="123" y="82" width="1.5" height="1.5" fill="#202820"/><rect x="164" y="58" width="1.5" height="1.5" fill="#b86a50"/><rect x="135" y="20" width="1.5" height="1.5" fill="#9aa8b8"/><rect x="100" y="64" width="1.5" height="1.5" fill="#1c2a18"/><rect x="16" y="77" width="1.5" height="1.5" fill="#e0e0e0"/><rect x="81" y="20" width="1.5" height="1.5" fill="#7890b0"/><rect x="24" y="80" width="1.5" height="1.5" fill="#4a6a38"/><rect x="95" y="15" width="1.5" height="1.5" fill="#e0e0e0"/><rect x="29" y="67" width="1.5" height="1.5" fill="#1c2a18"/><rect x="105" y="19" width="1.5" height="1.5" fill="#c8c0b0"/><rect x="50" y="79" width="1.5" height="1.5" fill="#b86a50"/><rect x="132" y="38" width="1.5" height="1.5" fill="#2e4a28"/><rect x="32" y="52" width="1.5" height="1.5" fill="#8a9aa8"/><rect x="79" y="41" width="1.5" height="1.5" fill="#a0a8a0"/><rect x="24" y="68" width="1.5" height="1.5" fill="#7890b0"/><rect x="158" y="57" width="1.5" height="1.5" fill="#a0a8a0"/><rect x="140" y="11" width="1.5" height="1.5" fill="#b86a50"/><rect x="72" y="13" width="1.5" height="1.5" fill="#4a6a38"/><rect x="67" y="54" width="1.5" height="1.5" fill="#2e4a28"/><rect x="59" y="20" width="1.5" height="1.5" fill="#b86a50"/><rect x="99" y="36" width="1.5" height="1.5" fill="#a0a8a0"/><rect x="136" y="66" width="1.5" height="1.5" fill="#2e4a28"/><rect x="70" y="48" width="1.5" height="1.5" fill="#8a9aa8"/><rect x="82" y="42" width="1.5" height="1.5" fill="#202820"/><rect x="159" y="53" width="1.5" height="1.5" fill="#6a9a5a"/><rect x="131" y="47" width="1.5" height="1.5" fill="#9aa8b8"/><rect x="146" y="76" width="1.5" height="1.5" fill="#6a9a5a"/><rect x="144" y="19" width="1.5" height="1.5" fill="#8a9aa8"/><rect x="158" y="50" width="1.5" height="1.5" fill="#4a6a38"/><rect x="91" y="42" width="1.5" height="1.5" fill="#c8c0b0"/><rect x="56" y="14" width="1.5" height="1.5" fill="#7890b0"/><rect x="107" y="43" width="1.5" height="1.5" fill="#6a9a5a"/><rect x="104" y="68" width="1.5" height="1.5" fill="#e0e0e0"/><rect x="154" y="78" width="1.5" height="1.5" fill="#b86a50"/><rect x="22" y="44" width="1.5" height="1.5" fill="#4a6a38"/><rect x="152" y="85" width="1.5" height="1.5" fill="#9aa8b8"/><rect x="121" y="51" width="1.5" height="1.5" fill="#b86a50"/><rect x="95" y="61" width="1.5" height="1.5" fill="#b86a50"/><rect x="153" y="87" width="1.5" height="1.5" fill="#7890b0"/><rect x="168" y="61" width="1.5" height="1.5" fill="#4a6a38"/><rect x="73" y="72" width="1.5" height="1.5" fill="#b86a50"/><rect x="113" y="42" width="1.5" height="1.5" fill="#8a9aa8"/><rect x="157" y="18" width="1.5" height="1.5" fill="#2e4a28"/><rect x="22" y="51" width="1.5" height="1.5" fill="#9aa8b8"/><rect x="0" y="29" width="1.5" height="1.5" fill="#e0e0e0"/><rect x="4" y="23" width="1.5" height="1.5" fill="#9aa8b8"/><rect x="156" y="73" width="1.5" height="1.5" fill="#6a9a5a"/><rect x="25" y="63" width="1.5" height="1.5" fill="#b86a50"/><rect x="8" y="12" width="1.5" height="1.5" fill="#1c2a18"/><rect x="54" y="48" width="1.5" height="1.5" fill="#9aa8b8"/><rect x="153" y="26" width="1.5" height="1.5" fill="#7890b0"/><rect x="156" y="25" width="1.5" height="1.5" fill="#1c2a18"/><rect x="156" y="11" width="1.5" height="1.5" fill="#a0a8a0"/><rect x="153" y="87" width="1.5" height="1.5" fill="#b86a50"/><rect x="93" y="28" width="1.5" height="1.5" fill="#c8c0b0"/><rect x="113" y="34" width="1.5" height="1.5" fill="#1c2a18"/><rect x="167" y="31" width="1.5" height="1.5" fill="#6a9a5a"/><rect x="124" y="20" width="1.5" height="1.5" fill="#7890b0"/><rect x="167" y="70" width="1.5" height="1.5" fill="#6a9a5a"/><rect x="14" y="27" width="1.5" height="1.5" fill="#e0e0e0"/><rect x="21" y="63" width="1.5" height="1.5" fill="#e0e0e0"/><rect x="31" y="28" width="1.5" height="1.5" fill="#a0a8a0"/><rect x="51" y="31" width="1.5" height="1.5" fill="#a0a8a0"/><rect x="91" y="19" width="1.5" height="1.5" fill="#4a6a38"/><rect x="40" y="33" width="1.5" height="1.5" fill="#2e4a28"/><rect x="116" y="31" width="1.5" height="1.5" fill="#a0a8a0"/><rect x="116" y="46" width="1.5" height="1.5" fill="#8a9aa8"/><rect x="77" y="51" width="1.5" height="1.5" fill="#4a6a38"/><rect x="158" y="11" width="1.5" height="1.5" fill="#202820"/><rect x="50" y="29" width="1.5" height="1.5" fill="#202820"/><rect x="15" y="32" width="1.5" height="1.5" fill="#b86a50"/><rect x="43" y="31" width="1.5" height="1.5" fill="#4a6a38"/><rect x="5" y="71" width="1.5" height="1.5" fill="#2e4a28"/><rect x="172" y="13" width="1.5" height="1.5" fill="#9aa8b8"/><rect x="159" y="55" width="1.5" height="1.5" fill="#c8c0b0"/><rect x="162" y="48" width="1.5" height="1.5" fill="#2e4a28"/><rect x="11" y="70" width="1.5" height="1.5" fill="#1c2a18"/><rect x="56" y="47" width="1.5" height="1.5" fill="#c8c0b0"/><rect x="90" y="49" width="1.5" height="1.5" fill="#a0a8a0"/><rect x="119" y="50" width="1.5" height="1.5" fill="#4a6a38"/><rect x="30" y="70" width="1.5" height="1.5" fill="#2e4a28"/><rect x="20" y="44" width="1.5" height="1.5" fill="#a0a8a0"/><rect x="77" y="70" width="1.5" height="1.5" fill="#7890b0"/><rect x="138" y="28" width="1.5" height="1.5" fill="#9aa8b8"/><rect x="95" y="76" width="1.5" height="1.5" fill="#202820"/><rect x="87" y="13" width="1.5" height="1.5" fill="#202820"/><rect x="169" y="14" width="1.5" height="1.5" fill="#9aa8b8"/><rect x="152" y="24" width="1.5" height="1.5" fill="#2e4a28"/><rect x="106" y="57" width="1.5" height="1.5" fill="#6a9a5a"/><rect x="88" y="66" width="1.5" height="1.5" fill="#c8c0b0"/><rect x="13" y="80" width="1.5" height="1.5" fill="#202820"/><rect x="111" y="55" width="1.5" height="1.5" fill="#7890b0"/><rect x="41" y="21" width="1.5" height="1.5" fill="#e0e0e0"/><rect x="74" y="64" width="1.5" height="1.5" fill="#202820"/><rect x="128" y="70" width="1.5" height="1.5" fill="#202820"/><rect x="87" y="60" width="1.5" height="1.5" fill="#4a6a38"/><rect x="30" y="30" width="1.5" height="1.5" fill="#2e4a28"/><rect x="86" y="61" width="1.5" height="1.5" fill="#202820"/><rect x="137" y="15" width="1.5" height="1.5" fill="#6a9a5a"/><rect x="81" y="64" width="1.5" height="1.5" fill="#7890b0"/><rect x="169" y="13" width="1.5" height="1.5" fill="#9aa8b8"/><rect x="131" y="56" width="1.5" height="1.5" fill="#2e4a28"/><rect x="25" y="45" width="1.5" height="1.5" fill="#7890b0"/><rect x="172" y="10" width="1.5" height="1.5" fill="#6a9a5a"/><rect x="155" y="21" width="1.5" height="1.5" fill="#6a9a5a"/><rect x="97" y="46" width="1.5" height="1.5" fill="#8a9aa8"/><rect x="169" y="62" width="1.5" height="1.5" fill="#7890b0"/><rect x="133" y="67" width="1.5" height="1.5" fill="#b86a50"/><rect x="51" y="19" width="1.5" height="1.5" fill="#b86a50"/><rect x="73" y="17" width="1.5" height="1.5" fill="#b86a50"/><rect x="63" y="36" width="1.5" height="1.5" fill="#202820"/><rect x="38" y="22" width="1.5" height="1.5" fill="#202820"/><rect x="113" y="15" width="1.5" height="1.5" fill="#1c2a18"/><rect x="99" y="80" width="1.5" height="1.5" fill="#202820"/><rect x="161" y="24" width="1.5" height="1.5" fill="#6a9a5a"/><rect x="163" y="26" width="1.5" height="1.5" fill="#6a9a5a"/><rect x="136" y="27" width="1.5" height="1.5" fill="#1c2a18"/><rect x="43" y="71" width="1.5" height="1.5" fill="#2e4a28"/><rect x="84" y="41" width="1.5" height="1.5" fill="#202820"/><rect x="81" y="34" width="1.5" height="1.5" fill="#9aa8b8"/><rect x="85" y="58" width="1.5" height="1.5" fill="#2e4a28"/><rect x="150" y="26" width="1.5" height="1.5" fill="#6a9a5a"/><rect x="73" y="14" width="1.5" height="1.5" fill="#e0e0e0"/><rect x="63" y="31" width="1.5" height="1.5" fill="#c8c0b0"/><rect x="90" y="67" width="1.5" height="1.5" fill="#4a6a38"/><rect x="68" y="81" width="1.5" height="1.5" fill="#7890b0"/><rect x="38" y="18" width="1.5" height="1.5" fill="#c8c0b0"/><rect x="27" y="82" width="1.5" height="1.5" fill="#1c2a18"/><rect x="24" y="29" width="1.5" height="1.5" fill="#8a9aa8"/><rect x="4" y="35" width="1.5" height="1.5" fill="#6a9a5a"/><rect x="78" y="76" width="1.5" height="1.5" fill="#6a9a5a"/><rect x="57" y="69" width="1.5" height="1.5" fill="#4a6a38"/><rect x="116" y="33" width="1.5" height="1.5" fill="#202820"/><rect x="41" y="13" width="1.5" height="1.5" fill="#2e4a28"/><rect x="89" y="20" width="1.5" height="1.5" fill="#b86a50"/><rect x="54" y="43" width="1.5" height="1.5" fill="#4a6a38"/><rect x="121" y="50" width="1.5" height="1.5" fill="#4a6a38"/><rect x="45" y="66" width="1.5" height="1.5" fill="#a0a8a0"/><rect x="66" y="78" width="1.5" height="1.5" fill="#e0e0e0"/><rect x="93" y="45" width="1.5" height="1.5" fill="#2e4a28"/><rect x="67" y="77" width="1.5" height="1.5" fill="#b86a50"/><rect x="18" y="39" width="1.5" height="1.5" fill="#202820"/><rect x="38" y="13" width="1.5" height="1.5" fill="#c8c0b0"/><rect x="130" y="47" width="1.5" height="1.5" fill="#c8c0b0"/><rect x="141" y="85" width="1.5" height="1.5" fill="#e0e0e0"/><rect x="115" y="15" width="1.5" height="1.5" fill="#b86a50"/><rect x="97" y="37" width="1.5" height="1.5" fill="#8a9aa8"/><rect x="166" y="77" width="1.5" height="1.5" fill="#b86a50"/><rect x="136" y="30" width="1.5" height="1.5" fill="#6a9a5a"/><rect x="21" y="48" width="1.5" height="1.5" fill="#9aa8b8"/><rect x="67" y="35" width="1.5" height="1.5" fill="#9aa8b8"/><rect x="122" y="27" width="1.5" height="1.5" fill="#6a9a5a"/><rect x="35" y="69" width="1.5" height="1.5" fill="#1c2a18"/><rect x="116" y="28" width="1.5" height="1.5" fill="#8a9aa8"/><rect x="129" y="80" width="1.5" height="1.5" fill="#2e4a28"/><rect x="83" y="30" width="1.5" height="1.5" fill="#4a6a38"/><rect x="54" y="80" width="1.5" height="1.5" fill="#6a9a5a"/><rect x="21" y="80" width="1.5" height="1.5" fill="#6a9a5a"/><rect x="47" y="39" width="1.5" height="1.5" fill="#202820"/><rect x="52" y="65" width="1.5" height="1.5" fill="#e0e0e0"/><rect x="13" y="13" width="1.5" height="1.5" fill="#1c2a18"/><rect x="155" y="54" width="1.5" height="1.5" fill="#e0e0e0"/><rect x="142" y="78" width="1.5" height="1.5" fill="#a0a8a0"/><rect x="82" y="57" width="1.5" height="1.5" fill="#1c2a18"/><rect x="5" y="64" width="1.5" height="1.5" fill="#b86a50"/><rect x="134" y="58" width="1.5" height="1.5" fill="#202820"/><rect x="94" y="57" width="1.5" height="1.5" fill="#8a9aa8"/><rect x="48" y="74" width="1.5" height="1.5" fill="#9aa8b8"/><rect x="66" y="80" width="1.5" height="1.5" fill="#c8c0b0"/><rect x="140" y="63" width="1.5" height="1.5" fill="#e0e0e0"/><rect x="54" y="38" width="1.5" height="1.5" fill="#c8c0b0"/><rect x="26" y="25" width="1.5" height="1.5" fill="#b86a50"/><rect x="45" y="27" width="1.5" height="1.5" fill="#4a6a38"/><rect x="0" y="52" width="1.5" height="1.5" fill="#6a9a5a"/><rect x="1" y="52" width="1.5" height="1.5" fill="#a0a8a0"/><rect x="133" y="16" width="1.5" height="1.5" fill="#4a6a38"/><rect x="154" y="63" width="1.5" height="1.5" fill="#1c2a18"/><rect x="46" y="18" width="1.5" height="1.5" fill="#c8c0b0"/><rect x="55" y="65" width="1.5" height="1.5" fill="#7890b0"/><rect x="69" y="22" width="1.5" height="1.5" fill="#b86a50"/><rect x="143" y="22" width="1.5" height="1.5" fill="#202820"/><rect x="120" y="72" width="1.5" height="1.5" fill="#e0e0e0"/><rect x="64" y="32" width="1.5" height="1.5" fill="#7890b0"/><rect x="116" y="48" width="1.5" height="1.5" fill="#a0a8a0"/><rect x="43" y="35" width="1.5" height="1.5" fill="#2e4a28"/><rect x="160" y="67" width="1.5" height="1.5" fill="#8a9aa8"/><rect x="172" y="73" width="1.5" height="1.5" fill="#7890b0"/><rect x="54" y="75" width="1.5" height="1.5" fill="#4a6a38"/><rect x="134" y="47" width="1.5" height="1.5" fill="#2e4a28"/><rect x="108" y="42" width="1.5" height="1.5" fill="#9aa8b8"/><rect x="9" y="30" width="1.5" height="1.5" fill="#4a6a38"/><rect x="129" y="63" width="1.5" height="1.5" fill="#e0e0e0"/><rect x="125" y="29" width="1.5" height="1.5" fill="#7890b0"/><rect x="119" y="24" width="1.5" height="1.5" fill="#b86a50"/><rect x="147" y="74" width="1.5" height="1.5" fill="#202820"/><rect x="171" y="59" width="1.5" height="1.5" fill="#2e4a28"/><rect x="108" y="74" width="1.5" height="1.5" fill="#2e4a28"/><rect x="22" y="39" width="1.5" height="1.5" fill="#a0a8a0"/><rect x="51" y="60" width="1.5" height="1.5" fill="#c8c0b0"/><rect x="82" y="63" width="1.5" height="1.5" fill="#2e4a28"/><rect x="47" y="31" width="1.5" height="1.5" fill="#e0e0e0"/><rect x="110" y="41" width="1.5" height="1.5" fill="#a0a8a0"/><rect x="172" y="14" width="1.5" height="1.5" fill="#7890b0"/><rect x="174" y="77" width="1.5" height="1.5" fill="#b86a50"/><rect x="50" y="66" width="1.5" height="1.5" fill="#8a9aa8"/><rect x="70" y="80" width="1.5" height="1.5" fill="#4a6a38"/><rect x="149" y="23" width="1.5" height="1.5" fill="#8a9aa8"/><rect x="54" y="72" width="1.5" height="1.5" fill="#a0a8a0"/><rect x="49" y="40" width="1.5" height="1.5" fill="#202820"/><rect x="71" y="21" width="1.5" height="1.5" fill="#202820"/><rect x="68" y="63" width="1.5" height="1.5" fill="#4a6a38"/><rect x="49" y="77" width="1.5" height="1.5" fill="#9aa8b8"/><rect x="30" y="18" width="1.5" height="1.5" fill="#e0e0e0"/><rect x="153" y="43" width="1.5" height="1.5" fill="#2e4a28"/><rect x="56" y="11" width="1.5" height="1.5" fill="#202820"/><rect x="99" y="31" width="1.5" height="1.5" fill="#6a9a5a"/><rect x="48" y="28" width="1.5" height="1.5" fill="#9aa8b8"/><rect x="35" y="52" width="1.5" height="1.5" fill="#4a6a38"/><rect x="9" y="15" width="1.5" height="1.5" fill="#e0e0e0"/><rect x="117" y="10" width="1.5" height="1.5" fill="#1c2a18"/><rect x="84" y="87" width="1.5" height="1.5" fill="#b86a50"/><rect x="173" y="41" width="1.5" height="1.5" fill="#c8c0b0"/><rect x="72" y="72" width="1.5" height="1.5" fill="#6a9a5a"/><rect x="97" y="27" width="1.5" height="1.5" fill="#202820"/><rect x="114" y="58" width="1.5" height="1.5" fill="#e0e0e0"/><rect x="33" y="32" width="1.5" height="1.5" fill="#b86a50"/><rect x="173" y="44" width="1.5" height="1.5" fill="#7890b0"/><rect x="8" y="76" width="1.5" height="1.5" fill="#2e4a28"/><rect x="94" y="62" width="1.5" height="1.5" fill="#e0e0e0"/><rect x="62" y="68" width="1.5" height="1.5" fill="#e0e0e0"/><rect x="11" y="46" width="1.5" height="1.5" fill="#b86a50"/><rect x="11" y="38" width="1.5" height="1.5" fill="#4a6a38"/><rect x="46" y="29" width="1.5" height="1.5" fill="#7890b0"/><rect x="86" y="34" width="1.5" height="1.5" fill="#4a6a38"/><rect x="144" y="69" width="1.5" height="1.5" fill="#8a9aa8"/><rect x="163" y="47" width="1.5" height="1.5" fill="#7890b0"/><rect x="71" y="79" width="1.5" height="1.5" fill="#202820"/><rect x="4" y="54" width="1.5" height="1.5" fill="#b86a50"/><rect x="56" y="66" width="1.5" height="1.5" fill="#4a6a38"/><rect x="114" y="72" width="1.5" height="1.5" fill="#1c2a18"/><rect x="109" y="45" width="1.5" height="1.5" fill="#e0e0e0"/><rect x="49" y="80" width="1.5" height="1.5" fill="#1c2a18"/><rect x="103" y="30" width="1.5" height="1.5" fill="#b86a50"/><rect x="129" y="26" width="1.5" height="1.5" fill="#7890b0"/><rect x="23" y="33" width="1.5" height="1.5" fill="#b86a50"/><rect x="31" y="18" width="1.5" height="1.5" fill="#2e4a28"/><rect x="65" y="24" width="1.5" height="1.5" fill="#c8c0b0"/><rect x="2" y="49" width="1.5" height="1.5" fill="#6a9a5a"/><rect x="16" y="83" width="1.5" height="1.5" fill="#b86a50"/><rect x="4" y="23" width="1.5" height="1.5" fill="#8a9aa8"/><rect x="131" y="18" width="1.5" height="1.5" fill="#1c2a18"/><rect x="75" y="84" width="1.5" height="1.5" fill="#b86a50"/><rect x="87" y="70" width="1.5" height="1.5" fill="#2e4a28"/><rect x="141" y="15" width="1.5" height="1.5" fill="#6a9a5a"/><rect x="165" y="35" width="1.5" height="1.5" fill="#2e4a28"/><rect x="135" y="50" width="1.5" height="1.5" fill="#c8c0b0"/><rect x="26" y="59" width="1.5" height="1.5" fill="#6a9a5a"/><rect x="159" y="14" width="1.5" height="1.5" fill="#202820"/><rect x="107" y="78" width="1.5" height="1.5" fill="#7890b0"/><rect x="109" y="49" width="1.5" height="1.5" fill="#202820"/><rect x="161" y="19" width="1.5" height="1.5" fill="#7890b0"/><rect x="120" y="45" width="1.5" height="1.5" fill="#a0a8a0"/><rect x="81" y="74" width="1.5" height="1.5" fill="#4a6a38"/><rect x="40" y="56" width="1.5" height="1.5" fill="#202820"/><rect x="7" y="81" width="1.5" height="1.5" fill="#4a6a38"/><rect x="109" y="44" width="1.5" height="1.5" fill="#202820"/><rect x="8" y="14" width="1.5" height="1.5" fill="#1c2a18"/><rect x="26" y="46" width="1.5" height="1.5" fill="#e0e0e0"/><rect x="128" y="34" width="1.5" height="1.5" fill="#7890b0"/><rect x="82" y="52" width="1.5" height="1.5" fill="#c8c0b0"/><rect x="151" y="20" width="1.5" height="1.5" fill="#9aa8b8"/><rect x="19" y="24" width="1.5" height="1.5" fill="#a0a8a0"/><rect x="137" y="21" width="1.5" height="1.5" fill="#8a9aa8"/><rect x="139" y="49" width="1.5" height="1.5" fill="#e0e0e0"/><rect x="11" y="77" width="1.5" height="1.5" fill="#7890b0"/><rect x="60" y="50" width="1.5" height="1.5" fill="#1c2a18"/><rect x="79" y="51" width="1.5" height="1.5" fill="#6a9a5a"/><rect x="34" y="32" width="1.5" height="1.5" fill="#a0a8a0"/><rect x="42" y="18" width="1.5" height="1.5" fill="#9aa8b8"/><rect x="137" y="48" width="1.5" height="1.5" fill="#b86a50"/><rect x="13" y="48" width="1.5" height="1.5" fill="#c8c0b0"/><rect x="134" y="52" width="1.5" height="1.5" fill="#8a9aa8"/><rect x="139" y="22" width="1.5" height="1.5" fill="#1c2a18"/><rect x="31" y="36" width="1.5" height="1.5" fill="#1c2a18"/><rect x="166" y="27" width="1.5" height="1.5" fill="#e0e0e0"/><rect x="20" y="24" width="1.5" height="1.5" fill="#6a9a5a"/><rect x="5" y="63" width="1.5" height="1.5" fill="#9aa8b8"/><rect x="157" y="16" width="1.5" height="1.5" fill="#a0a8a0"/><rect x="36" y="58" width="1.5" height="1.5" fill="#7890b0"/><rect x="169" y="53" width="1.5" height="1.5" fill="#6a9a5a"/><rect x="66" y="73" width="1.5" height="1.5" fill="#7890b0"/><rect x="55" y="58" width="1.5" height="1.5" fill="#e0e0e0"/><rect x="115" y="26" width="1.5" height="1.5" fill="#b86a50"/><rect x="31" y="20" width="1.5" height="1.5" fill="#7890b0"/><rect x="101" y="13" width="1.5" height="1.5" fill="#e0e0e0"/><rect x="20" y="82" width="1.5" height="1.5" fill="#202820"/><rect x="108" y="34" width="1.5" height="1.5" fill="#c8c0b0"/><rect x="173" y="63" width="1.5" height="1.5" fill="#7890b0"/><rect x="125" y="77" width="1.5" height="1.5" fill="#6a9a5a"/><rect x="35" y="16" width="1.5" height="1.5" fill="#e0e0e0"/><rect x="74" y="73" width="1.5" height="1.5" fill="#6a9a5a"/><rect x="49" y="20" width="1.5" height="1.5" fill="#8a9aa8"/><rect x="164" y="37" width="1.5" height="1.5" fill="#7890b0"/><rect x="73" y="48" width="1.5" height="1.5" fill="#8a9aa8"/><rect x="50" y="77" width="1.5" height="1.5" fill="#e0e0e0"/><rect x="166" y="16" width="1.5" height="1.5" fill="#a0a8a0"/><rect x="79" y="82" width="1.5" height="1.5" fill="#6a9a5a"/><rect x="35" y="42" width="1.5" height="1.5" fill="#b86a50"/><rect x="78" y="15" width="1.5" height="1.5" fill="#6a9a5a"/><rect x="58" y="55" width="1.5" height="1.5" fill="#a0a8a0"/><rect x="166" y="33" width="1.5" height="1.5" fill="#7890b0"/><rect x="2" y="57" width="1.5" height="1.5" fill="#c8c0b0"/><rect x="72" y="20" width="1.5" height="1.5" fill="#e0e0e0"/><rect x="68" y="31" width="1.5" height="1.5" fill="#8a9aa8"/><rect x="143" y="75" width="1.5" height="1.5" fill="#202820"/><rect x="18" y="61" width="1.5" height="1.5" fill="#9aa8b8"/><rect x="156" y="17" width="1.5" height="1.5" fill="#1c2a18"/><rect x="3" y="12" width="1.5" height="1.5" fill="#202820"/><rect x="116" y="36" width="1.5" height="1.5" fill="#c8c0b0"/><rect x="116" y="22" width="1.5" height="1.5" fill="#8a9aa8"/><rect x="63" y="46" width="1.5" height="1.5" fill="#1c2a18"/><rect x="83" y="60" width="1.5" height="1.5" fill="#c8c0b0"/><rect x="169" y="85" width="1.5" height="1.5" fill="#6a9a5a"/><rect x="75" y="28" width="1.5" height="1.5" fill="#4a6a38"/><rect x="122" y="87" width="1.5" height="1.5" fill="#8a9aa8"/><rect x="174" y="61" width="1.5" height="1.5" fill="#a0a8a0"/><rect x="162" y="50" width="1.5" height="1.5" fill="#202820"/><rect x="36" y="38" width="1.5" height="1.5" fill="#2e4a28"/><rect x="90" y="17" width="1.5" height="1.5" fill="#8a9aa8"/><rect x="1" y="84" width="1.5" height="1.5" fill="#7890b0"/><rect x="108" y="67" width="1.5" height="1.5" fill="#e0e0e0"/><rect x="115" y="85" width="1.5" height="1.5" fill="#9aa8b8"/><rect x="135" y="19" width="1.5" height="1.5" fill="#9aa8b8"/><rect x="27" y="39" width="1.5" height="1.5" fill="#1c2a18"/><rect x="164" y="79" width="1.5" height="1.5" fill="#c8c0b0"/><rect x="19" y="42" width="1.5" height="1.5" fill="#4a6a38"/><rect x="93" y="19" width="1.5" height="1.5" fill="#8a9aa8"/><rect x="52" y="49" width="1.5" height="1.5" fill="#8a9aa8"/><rect x="12" y="28" width="1.5" height="1.5" fill="#a0a8a0"/><rect x="15" y="49" width="1.5" height="1.5" fill="#e0e0e0"/><rect x="61" y="29" width="1.5" height="1.5" fill="#202820"/><rect x="72" y="14" width="1.5" height="1.5" fill="#b86a50"/><rect x="102" y="23" width="1.5" height="1.5" fill="#8a9aa8"/><rect x="80" y="76" width="1.5" height="1.5" fill="#8a9aa8"/><rect x="141" y="49" width="1.5" height="1.5" fill="#2e4a28"/><rect x="169" y="50" width="1.5" height="1.5" fill="#6a9a5a"/><rect x="108" y="84" width="1.5" height="1.5" fill="#7890b0"/><rect x="168" y="42" width="1.5" height="1.5" fill="#c8c0b0"/><rect x="40" y="71" width="1.5" height="1.5" fill="#8a9aa8"/><rect x="128" y="65" width="1.5" height="1.5" fill="#2e4a28"/><rect x="51" y="58" width="1.5" height="1.5" fill="#6a9a5a"/><rect x="19" y="33" width="1.5" height="1.5" fill="#4a6a38"/><rect x="112" y="75" width="1.5" height="1.5" fill="#c8c0b0"/><rect x="68" y="33" width="1.5" height="1.5" fill="#b86a50"/><rect x="45" y="19" width="1.5" height="1.5" fill="#6a9a5a"/><rect x="57" y="48" width="1.5" height="1.5" fill="#a0a8a0"/><rect x="173" y="53" width="1.5" height="1.5" fill="#2e4a28"/><rect x="99" y="49" width="1.5" height="1.5" fill="#8a9aa8"/><rect x="69" y="33" width="1.5" height="1.5" fill="#7890b0"/><rect x="104" y="27" width="1.5" height="1.5" fill="#8a9aa8"/><rect x="75" y="47" width="1.5" height="1.5" fill="#1c2a18"/><rect x="113" y="36" width="1.5" height="1.5" fill="#8a9aa8"/><rect x="9" y="74" width="1.5" height="1.5" fill="#c8c0b0"/><rect x="28" y="39" width="1.5" height="1.5" fill="#1c2a18"/><rect x="70" y="27" width="1.5" height="1.5" fill="#8a9aa8"/><rect x="124" y="12" width="1.5" height="1.5" fill="#1c2a18"/><rect x="84" y="28" width="1.5" height="1.5" fill="#7890b0"/><rect x="92" y="66" width="1.5" height="1.5" fill="#1c2a18"/><rect x="71" y="84" width="1.5" height="1.5" fill="#c8c0b0"/><rect x="120" y="38" width="1.5" height="1.5" fill="#b86a50"/><rect x="64" y="56" width="1.5" height="1.5" fill="#1c2a18"/><rect x="146" y="26" width="1.5" height="1.5" fill="#202820"/><rect x="10" y="24" width="1.5" height="1.5" fill="#8a9aa8"/><rect x="90" y="68" width="1.5" height="1.5" fill="#c8c0b0"/><rect x="149" y="26" width="1.5" height="1.5" fill="#202820"/><rect x="47" y="71" width="1.5" height="1.5" fill="#6a9a5a"/><rect x="113" y="39" width="1.5" height="1.5" fill="#8a9aa8"/><rect x="50" y="62" width="1.5" height="1.5" fill="#8a9aa8"/><rect x="69" y="27" width="1.5" height="1.5" fill="#e0e0e0"/><rect x="57" y="34" width="1.5" height="1.5" fill="#2e4a28"/><rect x="137" y="59" width="1.5" height="1.5" fill="#c8c0b0"/><rect x="174" y="48" width="1.5" height="1.5" fill="#6a9a5a"/><rect x="109" y="53" width="1.5" height="1.5" fill="#1c2a18"/><rect x="111" y="12" width="1.5" height="1.5" fill="#a0a8a0"/><rect x="131" y="55" width="1.5" height="1.5" fill="#c8c0b0"/><rect x="143" y="47" width="1.5" height="1.5" fill="#1c2a18"/><rect x="118" y="86" width="1.5" height="1.5" fill="#8a9aa8"/><rect x="30" y="16" width="1.5" height="1.5" fill="#a0a8a0"/><rect x="131" y="39" width="1.5" height="1.5" fill="#9aa8b8"/><rect x="118" y="72" width="1.5" height="1.5" fill="#9aa8b8"/><rect x="56" y="67" width="1.5" height="1.5" fill="#8a9aa8"/><rect x="145" y="84" width="1.5" height="1.5" fill="#1c2a18"/><rect x="116" y="52" width="1.5" height="1.5" fill="#8a9aa8"/><rect x="122" y="41" width="1.5" height="1.5" fill="#7890b0"/><rect x="166" y="53" width="1.5" height="1.5" fill="#b86a50"/><rect x="17" y="35" width="1.5" height="1.5" fill="#2e4a28"/><rect x="146" y="19" width="1.5" height="1.5" fill="#e0e0e0"/><rect x="82" y="12" width="1.5" height="1.5" fill="#6a9a5a"/><rect x="162" y="25" width="1.5" height="1.5" fill="#7890b0"/><rect x="162" y="48" width="1.5" height="1.5" fill="#7890b0"/><rect x="139" y="49" width="1.5" height="1.5" fill="#9aa8b8"/><rect x="18" y="67" width="1.5" height="1.5" fill="#2e4a28"/><rect x="134" y="35" width="1.5" height="1.5" fill="#c8c0b0"/><rect x="60" y="23" width="1.5" height="1.5" fill="#1c2a18"/><rect x="66" y="72" width="1.5" height="1.5" fill="#a0a8a0"/><rect x="68" y="54" width="1.5" height="1.5" fill="#9aa8b8"/><rect x="62" y="55" width="1.5" height="1.5" fill="#9aa8b8"/><rect x="122" y="41" width="1.5" height="1.5" fill="#8a9aa8"/><rect x="121" y="28" width="1.5" height="1.5" fill="#e0e0e0"/><rect x="61" y="42" width="1.5" height="1.5" fill="#c8c0b0"/><rect x="45" y="15" width="1.5" height="1.5" fill="#e0e0e0"/><rect x="66" y="65" width="1.5" height="1.5" fill="#6a9a5a"/><rect x="158" y="15" width="1.5" height="1.5" fill="#2e4a28"/><rect x="170" y="80" width="1.5" height="1.5" fill="#9aa8b8"/><rect x="67" y="19" width="1.5" height="1.5" fill="#2e4a28"/><rect x="131" y="18" width="1.5" height="1.5" fill="#e0e0e0"/><rect x="87" y="22" width="1.5" height="1.5" fill="#7890b0"/><rect x="61" y="22" width="1.5" height="1.5" fill="#9aa8b8"/><rect x="58" y="22" width="1.5" height="1.5" fill="#1c2a18"/><rect x="140" y="18" width="1.5" height="1.5" fill="#2e4a28"/><rect x="38" y="25" width="1.5" height="1.5" fill="#4a6a38"/><rect x="128" y="37" width="1.5" height="1.5" fill="#2e4a28"/><rect x="133" y="55" width="1.5" height="1.5" fill="#1c2a18"/><rect x="120" y="38" width="1.5" height="1.5" fill="#7890b0"/><rect x="140" y="57" width="1.5" height="1.5" fill="#7890b0"/><rect x="171" y="19" width="1.5" height="1.5" fill="#1c2a18"/><rect x="4" y="51" width="1.5" height="1.5" fill="#e0e0e0"/><rect x="116" y="32" width="1.5" height="1.5" fill="#4a6a38"/><rect x="23" y="47" width="1.5" height="1.5" fill="#e0e0e0"/><rect x="5" y="71" width="1.5" height="1.5" fill="#4a6a38"/><rect x="26" y="40" width="1.5" height="1.5" fill="#4a6a38"/><rect x="149" y="57" width="1.5" height="1.5" fill="#4a6a38"/><rect x="139" y="23" width="1.5" height="1.5" fill="#a0a8a0"/><rect x="122" y="55" width="1.5" height="1.5" fill="#a0a8a0"/><rect x="45" y="14" width="1.5" height="1.5" fill="#1c2a18"/><rect x="113" y="52" width="1.5" height="1.5" fill="#9aa8b8"/><rect x="79" y="39" width="1.5" height="1.5" fill="#7890b0"/><rect x="38" y="59" width="1.5" height="1.5" fill="#e0e0e0"/><rect x="98" y="37" width="1.5" height="1.5" fill="#b86a50"/><rect x="13" y="52" width="1.5" height="1.5" fill="#202820"/><rect x="164" y="61" width="1.5" height="1.5" fill="#8a9aa8"/><rect x="53" y="10" width="1.5" height="1.5" fill="#202820"/><rect x="167" y="25" width="1.5" height="1.5" fill="#1c2a18"/><rect x="54" y="77" width="1.5" height="1.5" fill="#c8c0b0"/><rect x="165" y="61" width="1.5" height="1.5" fill="#2e4a28"/><rect x="5" y="54" width="1.5" height="1.5" fill="#a0a8a0"/><rect x="170" y="85" width="1.5" height="1.5" fill="#4a6a38"/><rect x="94" y="44" width="1.5" height="1.5" fill="#a0a8a0"/><rect x="32" y="51" width="1.5" height="1.5" fill="#1c2a18"/><rect x="107" y="81" width="1.5" height="1.5" fill="#7890b0"/><rect x="18" y="21" width="1.5" height="1.5" fill="#b86a50"/><rect x="14" y="47" width="1.5" height="1.5" fill="#4a6a38"/><rect x="164" y="79" width="1.5" height="1.5" fill="#8a9aa8"/><rect x="23" y="33" width="1.5" height="1.5" fill="#1c2a18"/><rect x="38" y="31" width="1.5" height="1.5" fill="#2e4a28"/><rect x="170" y="83" width="1.5" height="1.5" fill="#2e4a28"/><rect x="149" y="82" width="1.5" height="1.5" fill="#c8c0b0"/><rect x="106" y="71" width="1.5" height="1.5" fill="#a0a8a0"/><rect x="99" y="79" width="1.5" height="1.5" fill="#1c2a18"/><rect x="162" y="17" width="1.5" height="1.5" fill="#4a6a38"/><rect x="27" y="80" width="1.5" height="1.5" fill="#8a9aa8"/><rect x="19" y="77" width="1.5" height="1.5" fill="#c8c0b0"/><rect x="72" y="21" width="1.5" height="1.5" fill="#2e4a28"/><rect x="120" y="50" width="1.5" height="1.5" fill="#202820"/><rect x="133" y="62" width="1.5" height="1.5" fill="#8a9aa8"/><rect x="0" y="15" width="1.5" height="1.5" fill="#b86a50"/><rect x="170" y="74" width="1.5" height="1.5" fill="#6a9a5a"/><rect x="61" y="27" width="1.5" height="1.5" fill="#6a9a5a"/><rect x="3" y="69" width="1.5" height="1.5" fill="#e0e0e0"/><rect x="8" y="38" width="1.5" height="1.5" fill="#7890b0"/><rect x="58" y="62" width="1.5" height="1.5" fill="#9aa8b8"/><rect x="113" y="82" width="1.5" height="1.5" fill="#6a9a5a"/><rect x="31" y="22" width="1.5" height="1.5" fill="#e0e0e0"/><rect x="79" y="27" width="1.5" height="1.5" fill="#1c2a18"/><rect x="32" y="62" width="1.5" height="1.5" fill="#202820"/><rect x="45" y="50" width="1.5" height="1.5" fill="#e0e0e0"/><rect x="100" y="12" width="1.5" height="1.5" fill="#e0e0e0"/><rect x="40" y="33" width="1.5" height="1.5" fill="#1c2a18"/><rect x="129" y="26" width="1.5" height="1.5" fill="#c8c0b0"/><rect x="138" y="52" width="1.5" height="1.5" fill="#8a9aa8"/><rect x="119" y="49" width="1.5" height="1.5" fill="#9aa8b8"/><rect x="38" y="42" width="1.5" height="1.5" fill="#2e4a28"/><rect x="65" y="37" width="1.5" height="1.5" fill="#8a9aa8"/><rect x="172" y="40" width="1.5" height="1.5" fill="#2e4a28"/><rect x="73" y="62" width="1.5" height="1.5" fill="#b86a50"/><rect x="59" y="71" width="1.5" height="1.5" fill="#6a9a5a"/><rect x="158" y="53" width="1.5" height="1.5" fill="#7890b0"/><rect x="12" y="85" width="1.5" height="1.5" fill="#c8c0b0"/><rect x="9" y="13" width="1.5" height="1.5" fill="#8a9aa8"/><rect x="74" y="22" width="1.5" height="1.5" fill="#8a9aa8"/><rect x="36" y="78" width="1.5" height="1.5" fill="#b86a50"/><rect x="162" y="36" width="1.5" height="1.5" fill="#2e4a28"/><rect x="25" y="65" width="1.5" height="1.5" fill="#c8c0b0"/><rect x="34" y="20" width="1.5" height="1.5" fill="#a0a8a0"/><rect x="41" y="75" width="1.5" height="1.5" fill="#a0a8a0"/><rect x="79" y="39" width="1.5" height="1.5" fill="#8a9aa8"/><rect x="161" y="21" width="1.5" height="1.5" fill="#8a9aa8"/><rect x="171" y="66" width="1.5" height="1.5" fill="#a0a8a0"/><rect x="9" y="34" width="1.5" height="1.5" fill="#2e4a28"/><rect x="101" y="31" width="1.5" height="1.5" fill="#4a6a38"/><rect x="94" y="54" width="1.5" height="1.5" fill="#4a6a38"/><rect x="46" y="17" width="1.5" height="1.5" fill="#a0a8a0"/><rect x="39" y="16" width="1.5" height="1.5" fill="#e0e0e0"/><rect x="170" y="82" width="1.5" height="1.5" fill="#a0a8a0"/><rect x="88" y="22" width="1.5" height="1.5" fill="#1c2a18"/><rect x="111" y="18" width="1.5" height="1.5" fill="#9aa8b8"/><rect x="138" y="85" width="1.5" height="1.5" fill="#9aa8b8"/><rect x="61" y="87" width="1.5" height="1.5" fill="#9aa8b8"/><rect x="81" y="25" width="1.5" height="1.5" fill="#9aa8b8"/><rect x="170" y="12" width="1.5" height="1.5" fill="#202820"/><rect x="70" y="14" width="1.5" height="1.5" fill="#2e4a28"/><rect x="8" y="41" width="1.5" height="1.5" fill="#b86a50"/><rect x="167" y="12" width="1.5" height="1.5" fill="#6a9a5a"/><rect x="139" y="48" width="1.5" height="1.5" fill="#a0a8a0"/><rect x="11" y="12" width="1.5" height="1.5" fill="#1c2a18"/><rect x="3" y="33" width="1.5" height="1.5" fill="#c8c0b0"/><rect x="59" y="75" width="1.5" height="1.5" fill="#4a6a38"/><rect x="64" y="46" width="1.5" height="1.5" fill="#202820"/><rect x="129" y="23" width="1.5" height="1.5" fill="#2e4a28"/><rect x="154" y="55" width="1.5" height="1.5" fill="#6a9a5a"/><rect x="75" y="55" width="1.5" height="1.5" fill="#e0e0e0"/><rect x="58" y="80" width="1.5" height="1.5" fill="#b86a50"/><rect x="118" y="58" width="1.5" height="1.5" fill="#a0a8a0"/><rect x="28" y="49" width="1.5" height="1.5" fill="#e0e0e0"/><rect x="133" y="82" width="1.5" height="1.5" fill="#1c2a18"/><rect x="41" y="55" width="1.5" height="1.5" fill="#2e4a28"/><rect x="122" y="36" width="1.5" height="1.5" fill="#a0a8a0"/><rect x="17" y="63" width="1.5" height="1.5" fill="#1c2a18"/><rect x="83" y="19" width="1.5" height="1.5" fill="#7890b0"/><rect x="161" y="50" width="1.5" height="1.5" fill="#6a9a5a"/><rect x="119" y="61" width="1.5" height="1.5" fill="#6a9a5a"/><rect x="47" y="54" width="1.5" height="1.5" fill="#a0a8a0"/><rect x="99" y="14" width="1.5" height="1.5" fill="#1c2a18"/><rect x="87" y="47" width="1.5" height="1.5" fill="#a0a8a0"/><rect x="25" y="12" width="1.5" height="1.5" fill="#4a6a38"/><rect x="77" y="17" width="1.5" height="1.5" fill="#c8c0b0"/><rect x="41" y="74" width="1.5" height="1.5" fill="#c8c0b0"/><rect x="44" y="80" width="1.5" height="1.5" fill="#4a6a38"/><rect x="18" y="37" width="1.5" height="1.5" fill="#c8c0b0"/><rect x="165" y="48" width="1.5" height="1.5" fill="#9aa8b8"/><rect x="26" y="34" width="1.5" height="1.5" fill="#a0a8a0"/><rect x="88" y="36" width="1.5" height="1.5" fill="#b86a50"/><rect x="113" y="63" width="1.5" height="1.5" fill="#9aa8b8"/><rect x="140" y="85" width="1.5" height="1.5" fill="#2e4a28"/><rect x="119" y="71" width="1.5" height="1.5" fill="#7890b0"/><rect x="48" y="33" width="1.5" height="1.5" fill="#2e4a28"/><rect x="20" y="47" width="1.5" height="1.5" fill="#7890b0"/><rect x="42" y="81" width="1.5" height="1.5" fill="#c8c0b0"/><rect x="166" y="61" width="1.5" height="1.5" fill="#9aa8b8"/><rect x="138" y="57" width="1.5" height="1.5" fill="#6a9a5a"/><rect x="162" y="60" width="1.5" height="1.5" fill="#8a9aa8"/><rect x="170" y="22" width="1.5" height="1.5" fill="#e0e0e0"/><rect x="171" y="77" width="1.5" height="1.5" fill="#e0e0e0"/><rect x="44" y="57" width="1.5" height="1.5" fill="#e0e0e0"/><rect x="171" y="58" width="1.5" height="1.5" fill="#2e4a28"/><rect x="130" y="62" width="1.5" height="1.5" fill="#6a9a5a"/><rect x="151" y="69" width="1.5" height="1.5" fill="#c8c0b0"/><rect x="99" y="83" width="1.5" height="1.5" fill="#a0a8a0"/><rect x="161" y="27" width="1.5" height="1.5" fill="#7890b0"/><rect x="61" y="12" width="1.5" height="1.5" fill="#2e4a28"/><rect x="87" y="85" width="1.5" height="1.5" fill="#b86a50"/><rect x="114" y="70" width="1.5" height="1.5" fill="#7890b0"/><rect x="27" y="43" width="1.5" height="1.5" fill="#9aa8b8"/><rect x="47" y="24" width="1.5" height="1.5" fill="#a0a8a0"/><rect x="46" y="69" width="1.5" height="1.5" fill="#8a9aa8"/><rect x="58" y="81" width="1.5" height="1.5" fill="#c8c0b0"/><rect x="51" y="83" width="1.5" height="1.5" fill="#202820"/><rect x="53" y="46" width="1.5" height="1.5" fill="#c8c0b0"/><rect x="58" y="32" width="1.5" height="1.5" fill="#4a6a38"/><rect x="173" y="15" width="1.5" height="1.5" fill="#8a9aa8"/><rect x="150" y="51" width="1.5" height="1.5" fill="#9aa8b8"/><rect x="132" y="51" width="1.5" height="1.5" fill="#e0e0e0"/><rect x="35" y="55" width="1.5" height="1.5" fill="#b86a50"/><rect x="76" y="41" width="1.5" height="1.5" fill="#1c2a18"/><rect x="9" y="37" width="1.5" height="1.5" fill="#4a6a38"/><rect x="150" y="76" width="1.5" height="1.5" fill="#4a6a38"/><rect x="72" y="41" width="1.5" height="1.5" fill="#b86a50"/><rect x="137" y="81" width="1.5" height="1.5" fill="#8a9aa8"/><rect x="21" y="43" width="1.5" height="1.5" fill="#a0a8a0"/><rect x="72" y="58" width="1.5" height="1.5" fill="#a0a8a0"/><rect x="161" y="49" width="1.5" height="1.5" fill="#e0e0e0"/><rect x="102" y="42" width="1.5" height="1.5" fill="#c8c0b0"/><rect x="92" y="25" width="1.5" height="1.5" fill="#c8c0b0"/><rect x="107" y="24" width="1.5" height="1.5" fill="#e0e0e0"/><rect x="137" y="55" width="1.5" height="1.5" fill="#1c2a18"/><rect x="47" y="71" width="1.5" height="1.5" fill="#c8c0b0"/><rect x="123" y="45" width="1.5" height="1.5" fill="#6a9a5a"/><rect x="170" y="83" width="1.5" height="1.5" fill="#b86a50"/><rect x="166" y="78" width="1.5" height="1.5" fill="#c8c0b0"/><rect x="96" y="10" width="1.5" height="1.5" fill="#9aa8b8"/><rect x="121" y="44" width="1.5" height="1.5" fill="#2e4a28"/><rect x="173" y="48" width="1.5" height="1.5" fill="#7890b0"/><rect x="43" y="73" width="1.5" height="1.5" fill="#b86a50"/><rect x="119" y="57" width="1.5" height="1.5" fill="#c8c0b0"/><rect x="15" y="53" width="1.5" height="1.5" fill="#b86a50"/><rect x="10" y="46" width="1.5" height="1.5" fill="#c8c0b0"/><rect x="67" y="67" width="1.5" height="1.5" fill="#7890b0"/><rect x="82" y="18" width="1.5" height="1.5" fill="#b86a50"/><rect x="148" y="47" width="1.5" height="1.5" fill="#202820"/><rect x="152" y="81" width="1.5" height="1.5" fill="#a0a8a0"/><rect x="21" y="33" width="1.5" height="1.5" fill="#b86a50"/><rect x="145" y="66" width="1.5" height="1.5" fill="#202820"/><rect x="71" y="41" width="1.5" height="1.5" fill="#b86a50"/><rect x="45" y="71" width="1.5" height="1.5" fill="#7890b0"/><rect x="47" y="26" width="1.5" height="1.5" fill="#a0a8a0"/><rect x="76" y="45" width="1.5" height="1.5" fill="#1c2a18"/><rect x="37" y="12" width="1.5" height="1.5" fill="#e0e0e0"/><rect x="108" y="17" width="1.5" height="1.5" fill="#7890b0"/><rect x="82" y="78" width="1.5" height="1.5" fill="#9aa8b8"/><rect x="115" y="62" width="1.5" height="1.5" fill="#4a6a38"/><rect x="170" y="70" width="1.5" height="1.5" fill="#6a9a5a"/><rect x="154" y="16" width="1.5" height="1.5" fill="#b86a50"/><rect x="52" y="66" width="1.5" height="1.5" fill="#202820"/><rect x="114" y="61" width="1.5" height="1.5" fill="#6a9a5a"/><rect x="37" y="33" width="1.5" height="1.5" fill="#202820"/><rect x="134" y="52" width="1.5" height="1.5" fill="#7890b0"/><rect x="59" y="65" width="1.5" height="1.5" fill="#c8c0b0"/><rect x="146" y="37" width="1.5" height="1.5" fill="#6a9a5a"/><rect x="45" y="57" width="1.5" height="1.5" fill="#b86a50"/><rect x="150" y="33" width="1.5" height="1.5" fill="#b86a50"/><rect x="130" y="43" width="1.5" height="1.5" fill="#9aa8b8"/><rect x="101" y="73" width="1.5" height="1.5" fill="#a0a8a0"/><rect x="68" y="55" width="1.5" height="1.5" fill="#7890b0"/><rect x="124" y="36" width="1.5" height="1.5" fill="#1c2a18"/><rect x="101" y="29" width="1.5" height="1.5" fill="#7890b0"/><rect x="119" y="41" width="1.5" height="1.5" fill="#2e4a28"/><rect x="172" y="21" width="1.5" height="1.5" fill="#202820"/><rect x="57" y="66" width="1.5" height="1.5" fill="#c8c0b0"/><rect x="48" y="54" width="1.5" height="1.5" fill="#4a6a38"/><rect x="166" y="35" width="1.5" height="1.5" fill="#a0a8a0"/><rect x="138" y="48" width="1.5" height="1.5" fill="#9aa8b8"/><rect x="50" y="72" width="1.5" height="1.5" fill="#6a9a5a"/><rect x="118" y="18" width="1.5" height="1.5" fill="#c8c0b0"/><rect x="80" y="51" width="1.5" height="1.5" fill="#9aa8b8"/><rect x="99" y="83" width="1.5" height="1.5" fill="#1c2a18"/><rect x="75" y="14" width="1.5" height="1.5" fill="#c8c0b0"/><rect x="52" y="63" width="1.5" height="1.5" fill="#7890b0"/><rect x="63" y="27" width="1.5" height="1.5" fill="#7890b0"/><rect x="48" y="38" width="1.5" height="1.5" fill="#4a6a38"/><rect x="89" y="52" width="1.5" height="1.5" fill="#6a9a5a"/><rect x="114" y="21" width="1.5" height="1.5" fill="#e0e0e0"/><rect x="109" y="74" width="1.5" height="1.5" fill="#202820"/><rect x="43" y="24" width="1.5" height="1.5" fill="#8a9aa8"/><rect x="158" y="59" width="1.5" height="1.5" fill="#c8c0b0"/><rect x="129" y="30" width="1.5" height="1.5" fill="#9aa8b8"/><rect x="10" y="55" width="1.5" height="1.5" fill="#a0a8a0"/><rect x="142" y="76" width="1.5" height="1.5" fill="#b86a50"/><rect x="109" y="38" width="1.5" height="1.5" fill="#1c2a18"/><rect x="59" y="78" width="1.5" height="1.5" fill="#b86a50"/><rect x="147" y="64" width="1.5" height="1.5" fill="#c8c0b0"/><rect x="77" y="73" width="1.5" height="1.5" fill="#202820"/><rect x="49" y="49" width="1.5" height="1.5" fill="#1c2a18"/><rect x="39" y="27" width="1.5" height="1.5" fill="#202820"/><rect x="56" y="60" width="1.5" height="1.5" fill="#1c2a18"/><rect x="137" y="78" width="1.5" height="1.5" fill="#2e4a28"/><rect x="144" y="80" width="1.5" height="1.5" fill="#a0a8a0"/><rect x="133" y="46" width="1.5" height="1.5" fill="#202820"/><rect x="123" y="27" width="1.5" height="1.5" fill="#1c2a18"/><rect x="152" y="27" width="1.5" height="1.5" fill="#1c2a18"/><rect x="10" y="48" width="1.5" height="1.5" fill="#a0a8a0"/><rect x="8" y="64" width="1.5" height="1.5" fill="#8a9aa8"/><rect x="133" y="62" width="1.5" height="1.5" fill="#202820"/><rect x="4" y="35" width="1.5" height="1.5" fill="#202820"/><rect x="61" y="86" width="1.5" height="1.5" fill="#202820"/><rect x="93" y="40" width="1.5" height="1.5" fill="#8a9aa8"/><rect x="73" y="80" width="1.5" height="1.5" fill="#202820"/><rect x="31" y="31" width="1.5" height="1.5" fill="#a0a8a0"/><rect x="27" y="62" width="1.5" height="1.5" fill="#c8c0b0"/><rect x="81" y="32" width="1.5" height="1.5" fill="#4a6a38"/><rect x="4" y="29" width="1.5" height="1.5" fill="#c8c0b0"/><rect x="43" y="32" width="1.5" height="1.5" fill="#e0e0e0"/><rect x="3" y="38" width="1.5" height="1.5" fill="#6a9a5a"/><rect x="103" y="31" width="1.5" height="1.5" fill="#8a9aa8"/><rect x="28" y="17" width="1.5" height="1.5" fill="#a0a8a0"/><rect x="89" y="34" width="1.5" height="1.5" fill="#202820"/><rect x="139" y="44" width="1.5" height="1.5" fill="#7890b0"/><rect x="87" y="42" width="1.5" height="1.5" fill="#6a9a5a"/><rect x="63" y="30" width="1.5" height="1.5" fill="#9aa8b8"/><rect x="92" y="51" width="1.5" height="1.5" fill="#b86a50"/><rect x="50" y="33" width="1.5" height="1.5" fill="#6a9a5a"/><rect x="6" y="71" width="1.5" height="1.5" fill="#202820"/><rect x="79" y="50" width="1.5" height="1.5" fill="#1c2a18"/><rect x="151" y="74" width="1.5" height="1.5" fill="#a0a8a0"/><rect x="81" y="39" width="1.5" height="1.5" fill="#9aa8b8"/><rect x="16" y="49" width="1.5" height="1.5" fill="#b86a50"/><rect x="153" y="86" width="1.5" height="1.5" fill="#b86a50"/><rect x="13" y="29" width="1.5" height="1.5" fill="#1c2a18"/><rect x="95" y="50" width="1.5" height="1.5" fill="#e0e0e0"/><rect x="7" y="32" width="1.5" height="1.5" fill="#1c2a18"/><rect x="172" y="16" width="1.5" height="1.5" fill="#8a9aa8"/><rect x="2" y="21" width="1.5" height="1.5" fill="#6a9a5a"/><rect x="124" y="68" width="1.5" height="1.5" fill="#9aa8b8"/><rect x="98" y="82" width="1.5" height="1.5" fill="#6a9a5a"/><rect x="103" y="52" width="1.5" height="1.5" fill="#c8c0b0"/><rect x="101" y="23" width="1.5" height="1.5" fill="#9aa8b8"/><rect x="130" y="29" width="1.5" height="1.5" fill="#9aa8b8"/><rect x="38" y="44" width="1.5" height="1.5" fill="#4a6a38"/><rect x="141" y="86" width="1.5" height="1.5" fill="#a0a8a0"/><rect x="107" y="11" width="1.5" height="1.5" fill="#7890b0"/><rect x="114" y="27" width="1.5" height="1.5" fill="#8a9aa8"/><rect x="42" y="34" width="1.5" height="1.5" fill="#2e4a28"/><rect x="167" y="53" width="1.5" height="1.5" fill="#8a9aa8"/><rect x="170" y="24" width="1.5" height="1.5" fill="#b86a50"/><rect x="142" y="66" width="1.5" height="1.5" fill="#2e4a28"/><rect x="10" y="13" width="1.5" height="1.5" fill="#7890b0"/><rect x="24" y="26" width="1.5" height="1.5" fill="#c8c0b0"/><rect x="129" y="78" width="1.5" height="1.5" fill="#a0a8a0"/><rect x="167" y="35" width="1.5" height="1.5" fill="#e0e0e0"/><rect x="157" y="67" width="1.5" height="1.5" fill="#1c2a18"/><rect x="111" y="57" width="1.5" height="1.5" fill="#a0a8a0"/><rect x="8" y="53" width="1.5" height="1.5" fill="#6a9a5a"/><rect x="153" y="61" width="1.5" height="1.5" fill="#6a9a5a"/><rect x="124" y="24" width="1.5" height="1.5" fill="#9aa8b8"/><rect x="114" y="13" width="1.5" height="1.5" fill="#202820"/><rect x="49" y="81" width="1.5" height="1.5" fill="#a0a8a0"/><rect x="14" y="29" width="1.5" height="1.5" fill="#7890b0"/><rect x="41" y="32" width="1.5" height="1.5" fill="#a0a8a0"/><rect x="122" y="85" width="1.5" height="1.5" fill="#a0a8a0"/><rect x="113" y="63" width="1.5" height="1.5" fill="#7890b0"/><rect x="56" y="11" width="1.5" height="1.5" fill="#6a9a5a"/><rect x="86" y="40" width="1.5" height="1.5" fill="#4a6a38"/><rect x="44" y="19" width="1.5" height="1.5" fill="#1c2a18"/><rect x="171" y="39" width="1.5" height="1.5" fill="#1c2a18"/><rect x="68" y="83" width="1.5" height="1.5" fill="#a0a8a0"/><rect x="159" y="24" width="1.5" height="1.5" fill="#4a6a38"/><rect x="2" y="61" width="1.5" height="1.5" fill="#a0a8a0"/><rect x="98" y="28" width="1.5" height="1.5" fill="#b86a50"/><rect x="84" y="13" width="1.5" height="1.5" fill="#4a6a38"/><rect x="150" y="13" width="1.5" height="1.5" fill="#b86a50"/><rect x="67" y="27" width="1.5" height="1.5" fill="#6a9a5a"/><rect x="108" y="67" width="1.5" height="1.5" fill="#1c2a18"/><rect x="126" y="14" width="1.5" height="1.5" fill="#8a9aa8"/><rect x="26" y="22" width="1.5" height="1.5" fill="#c8c0b0"/><rect x="156" y="29" width="1.5" height="1.5" fill="#a0a8a0"/><rect x="66" y="17" width="1.5" height="1.5" fill="#c8c0b0"/><rect x="24" y="36" width="1.5" height="1.5" fill="#c8c0b0"/><rect x="103" y="28" width="1.5" height="1.5" fill="#2e4a28"/><rect x="33" y="19" width="1.5" height="1.5" fill="#b86a50"/><rect x="13" y="50" width="1.5" height="1.5" fill="#8a9aa8"/><rect x="29" y="51" width="1.5" height="1.5" fill="#6a9a5a"/><rect x="71" y="39" width="1.5" height="1.5" fill="#7890b0"/><rect x="88" y="40" width="1.5" height="1.5" fill="#9aa8b8"/><rect x="53" y="86" width="1.5" height="1.5" fill="#c8c0b0"/><rect x="34" y="36" width="1.5" height="1.5" fill="#c8c0b0"/><rect x="74" y="71" width="1.5" height="1.5" fill="#6a9a5a"/><rect x="50" y="32" width="1.5" height="1.5" fill="#a0a8a0"/><rect x="23" y="40" width="1.5" height="1.5" fill="#7890b0"/><rect x="153" y="81" width="1.5" height="1.5" fill="#8a9aa8"/><path d="M44 27 L45 17 L50 17 L51 13 L56 15 L58 10 L63 14 L70 12 L74 15 L80 10 L86 15 L92 11 L98 14 L106 12 L112 15 L120 13 L128 16 L130 27z" fill="#b8bcc2"/><path d="M50 26v-8M54 26v-9M60 26v-11M68 26v-10M76 26v-9M84 26v-10M94 26v-8M104 26v-9M114 26v-8M122 26v-7" stroke="#40485a" stroke-width="1.3"/><path d="M57 26v-9M72 26v-11M90 26v-12M100 26v-9M117 26v-9" stroke="#e8eaee" stroke-width="1.4"/><path d="M0 30 Q15 28 28 20 L38 20 Q32 30 30 40 Q12 44 0 44z" fill="#3a66a6"/><path d="M28 38 Q55 40 80 35 Q100 30 112 26 Q135 18 150 20 Q166 24 174 28 L174 38 Q160 30 148 27 Q132 26 115 31 Q95 38 78 40 Q50 44 28 42z" fill="#3a62a0"/><path d="M32 36 Q36 27 48 25 Q72 26 92 27 Q75 34 55 36z" fill="#4a8a3e"/><path d="M48 28 Q55 25 62 27 L60 33 Q52 33 48 28z" fill="#d8dad8"/><rect x="63" y="42" width="9" height="24" fill="#dde2ea"/><rect x="63" y="42" width="3" height="24" fill="#8a9ab4"/><path d="M1 55 Q10 51 24 54 L36 60 L33 66 Q15 67 2 62z" fill="#dfe3ea"/><rect x="39" y="54" width="8" height="11" fill="#c8c8c0"/><path d="M95 43 Q125 44 152 47 L150 51 Q122 48 95 47z" fill="#6aa84c"/><ellipse cx="74" cy="82" rx="34" ry="14" fill="#e4e8f0"/><ellipse cx="74" cy="83" rx="29" ry="11" fill="#8a8a7a"/><ellipse cx="72" cy="85" rx="20" ry="8" fill="#4a8a36"/><path d="M88 73 Q101 76 100 87 H88 Q94 80 88 73z" fill="#1c2220"/></svg>
<div class="bh" style="left:1057px;top:632px;font-size:13px">在此请输入标题</div>
<div class="bt" style="left:1015px;top:650px;width:82px;height:175.50px"><div class="f">金印客是一家专业数码与传统</div><div class="f">网络排版印刷的服务平台，拥</div><div class="f">有30多年印刷服务经验。金印</div><div class="f">客DPS排版软件简单好用，零</div><div class="f">基础也能排出专业作品。软件</div><div class="f">内有海量精美模板，不用设计</div><div class="f">、不用排版，直接套用模板，</div><div class="f">30分钟轻松搞定，有效节省你</div><div class="f">的排版时间和费用。作品排好</div><div class="f">后，无需到处寻找印刷厂，在</div><div class="f">DPS软件内下单印刷，快递直</div><div class="f">接送货上门。金印客是一家专</div><div class="f">业数码与传统网络排版印刷的</div><div class="f">服务平台，拥有30多年印刷服</div><div class="f">务经验。金印客DPS排版软件</div><div class="f">简单好用，零基础也能排出专</div><div class="f">业作品。软件内有海量精美模</div><div class="f">板，不用设计、不用排版，直</div></div>

<div class="bt" style="left:1110px;top:650px;width:80px;height:175.50px"><div class="f">品。软件内有海量精美模板，</div><div class="f">不用设计、不用排版，直接套</div><div class="f">用模板，30分钟轻松搞定，有</div><div class="f">效节省你的排版时间和费用。</div><div class="f">作品排好后，无需到处寻找印</div><div class="f">刷厂，在DPS软件内下单印刷</div><div class="f">，快递直接送货上门。金印客</div><div class="f">是一家专业数码与传统网络排</div><div class="f">版印刷的服务平台，拥有30多</div><div class="f">年印刷服务经验。金印客DPS</div><div class="f">排版软件简单好用，零基础也</div><div class="f">能排出专业作品。软件内有海</div><div class="f">量精美模板，不用设计、不用</div><div class="s">排版，直接套</div><div class="f">用模板，30分钟轻松搞定，有</div><div class="f">效节省你的排版时间和费用。</div><div class="f">作品排好后，无需到处寻找印</div><div class="s">刷厂，在</div></div>

<div class="a" style="left:1208px;top:536px;width:185px;height:296px;border:1.5px solid #333"></div>
<svg class="a" style="left:1213px;top:542px" width="174" height="87" viewBox="0 0 174 87"><defs><linearGradient id="cs1213" x1="0" y1="0" x2="0" y2="1"><stop offset="0" stop-color="#5a9ad0"/><stop offset=".05" stop-color="#3f78b0"/><stop offset=".14" stop-color="#3e6a88"/><stop offset=".3" stop-color="#6e8088"/><stop offset=".45" stop-color="#5a7050"/><stop offset="1" stop-color="#44563c"/></linearGradient></defs><rect width="174" height="87" fill="url(#cs1213)"/><rect x="79" y="53" width="1.5" height="1.5" fill="#9aa8b8"/><rect x="79" y="76" width="1.5" height="1.5" fill="#b86a50"/><rect x="32" y="49" width="1.5" height="1.5" fill="#a0a8a0"/><rect x="107" y="24" width="1.5" height="1.5" fill="#9aa8b8"/><rect x="53" y="17" width="1.5" height="1.5" fill="#7890b0"/><rect x="110" y="56" width="1.5" height="1.5" fill="#6a9a5a"/><rect x="168" y="60" width="1.5" height="1.5" fill="#202820"/><rect x="113" y="58" width="1.5" height="1.5" fill="#4a6a38"/><rect x="11" y="13" width="1.5" height="1.5" fill="#b86a50"/><rect x="104" y="70" width="1.5" height="1.5" fill="#1c2a18"/><rect x="77" y="75" width="1.5" height="1.5" fill="#4a6a38"/><rect x="41" y="33" width="1.5" height="1.5" fill="#c8c0b0"/><rect x="115" y="45" width="1.5" height="1.5" fill="#e0e0e0"/><rect x="71" y="52" width="1.5" height="1.5" fill="#8a9aa8"/><rect x="123" y="34" width="1.5" height="1.5" fill="#b86a50"/><rect x="89" y="12" width="1.5" height="1.5" fill="#202820"/><rect x="133" y="41" width="1.5" height="1.5" fill="#e0e0e0"/><rect x="67" y="84" width="1.5" height="1.5" fill="#a0a8a0"/><rect x="0" y="26" width="1.5" height="1.5" fill="#c8c0b0"/><rect x="82" y="85" width="1.5" height="1.5" fill="#6a9a5a"/><rect x="73" y="54" width="1.5" height="1.5" fill="#b86a50"/><rect x="135" y="31" width="1.5" height="1.5" fill="#8a9aa8"/><rect x="54" y="11" width="1.5" height="1.5" fill="#6a9a5a"/><rect x="132" y="19" width="1.5" height="1.5" fill="#b86a50"/><rect x="123" y="11" width="1.5" height="1.5" fill="#9aa8b8"/><rect x="139" y="24" width="1.5" height="1.5" fill="#4a6a38"/><rect x="33" y="49" width="1.5" height="1.5" fill="#7890b0"/><rect x="134" y="42" width="1.5" height="1.5" fill="#6a9a5a"/><rect x="20" y="42" width="1.5" height="1.5" fill="#b86a50"/><rect x="0" y="77" width="1.5" height="1.5" fill="#202820"/><rect x="53" y="78" width="1.5" height="1.5" fill="#b86a50"/><rect x="33" y="87" width="1.5" height="1.5" fill="#202820"/><rect x="112" y="18" width="1.5" height="1.5" fill="#2e4a28"/><rect x="37" y="30" width="1.5" height="1.5" fill="#202820"/><rect x="57" y="33" width="1.5" height="1.5" fill="#8a9aa8"/><rect x="13" y="26" width="1.5" height="1.5" fill="#a0a8a0"/><rect x="42" y="56" width="1.5" height="1.5" fill="#1c2a18"/><rect x="108" y="20" width="1.5" height="1.5" fill="#202820"/><rect x="84" y="54" width="1.5" height="1.5" fill="#6a9a5a"/><rect x="32" y="22" width="1.5" height="1.5" fill="#b86a50"/><rect x="142" y="29" width="1.5" height="1.5" fill="#b86a50"/><rect x="28" y="58" width="1.5" height="1.5" fill="#4a6a38"/><rect x="34" y="83" width="1.5" height="1.5" fill="#9aa8b8"/><rect x="105" y="42" width="1.5" height="1.5" fill="#8a9aa8"/><rect x="19" y="49" width="1.5" height="1.5" fill="#e0e0e0"/><rect x="41" y="64" width="1.5" height="1.5" fill="#e0e0e0"/><rect x="73" y="80" width="1.5" height="1.5" fill="#9aa8b8"/><rect x="51" y="24" width="1.5" height="1.5" fill="#7890b0"/><rect x="170" y="20" width="1.5" height="1.5" fill="#9aa8b8"/><rect x="97" y="76" width="1.5" height="1.5" fill="#202820"/><rect x="13" y="26" width="1.5" height="1.5" fill="#b86a50"/><rect x="130" y="15" width="1.5" height="1.5" fill="#6a9a5a"/><rect x="78" y="15" width="1.5" height="1.5" fill="#2e4a28"/><rect x="49" y="51" width="1.5" height="1.5" fill="#2e4a28"/><rect x="16" y="21" width="1.5" height="1.5" fill="#9aa8b8"/><rect x="171" y="61" width="1.5" height="1.5" fill="#7890b0"/><rect x="91" y="83" width="1.5" height="1.5" fill="#202820"/><rect x="6" y="11" width="1.5" height="1.5" fill="#1c2a18"/><rect x="122" y="84" width="1.5" height="1.5" fill="#c8c0b0"/><rect x="104" y="16" width="1.5" height="1.5" fill="#8a9aa8"/><rect x="127" y="35" width="1.5" height="1.5" fill="#8a9aa8"/><rect x="13" y="52" width="1.5" height="1.5" fill="#7890b0"/><rect x="8" y="82" width="1.5" height="1.5" fill="#7890b0"/><rect x="122" y="71" width="1.5" height="1.5" fill="#1c2a18"/><rect x="61" y="63" width="1.5" height="1.5" fill="#8a9aa8"/><rect x="152" y="42" width="1.5" height="1.5" fill="#c8c0b0"/><rect x="150" y="54" width="1.5" height="1.5" fill="#202820"/><rect x="115" y="39" width="1.5" height="1.5" fill="#c8c0b0"/><rect x="106" y="16" width="1.5" height="1.5" fill="#a0a8a0"/><rect x="20" y="30" width="1.5" height="1.5" fill="#6a9a5a"/><rect x="127" y="40" width="1.5" height="1.5" fill="#7890b0"/><rect x="121" y="45" width="1.5" height="1.5" fill="#9aa8b8"/><rect x="146" y="16" width="1.5" height="1.5" fill="#4a6a38"/><rect x="5" y="56" width="1.5" height="1.5" fill="#9aa8b8"/><rect x="4" y="84" width="1.5" height="1.5" fill="#8a9aa8"/><rect x="87" y="57" width="1.5" height="1.5" fill="#9aa8b8"/><rect x="45" y="11" width="1.5" height="1.5" fill="#e0e0e0"/><rect x="25" y="57" width="1.5" height="1.5" fill="#4a6a38"/><rect x="30" y="80" width="1.5" height="1.5" fill="#a0a8a0"/><rect x="162" y="48" width="1.5" height="1.5" fill="#b86a50"/><rect x="57" y="61" width="1.5" height="1.5" fill="#b86a50"/><rect x="110" y="72" width="1.5" height="1.5" fill="#b86a50"/><rect x="153" y="40" width="1.5" height="1.5" fill="#202820"/><rect x="160" y="26" width="1.5" height="1.5" fill="#2e4a28"/><rect x="86" y="74" width="1.5" height="1.5" fill="#c8c0b0"/><rect x="124" y="83" width="1.5" height="1.5" fill="#e0e0e0"/><rect x="143" y="19" width="1.5" height="1.5" fill="#9aa8b8"/><rect x="48" y="26" width="1.5" height="1.5" fill="#6a9a5a"/><rect x="67" y="50" width="1.5" height="1.5" fill="#a0a8a0"/><rect x="55" y="75" width="1.5" height="1.5" fill="#202820"/><rect x="79" y="16" width="1.5" height="1.5" fill="#c8c0b0"/><rect x="48" y="57" width="1.5" height="1.5" fill="#a0a8a0"/><rect x="123" y="54" width="1.5" height="1.5" fill="#e0e0e0"/><rect x="113" y="53" width="1.5" height="1.5" fill="#a0a8a0"/><rect x="24" y="45" width="1.5" height="1.5" fill="#c8c0b0"/><rect x="134" y="31" width="1.5" height="1.5" fill="#2e4a28"/><rect x="139" y="86" width="1.5" height="1.5" fill="#8a9aa8"/><rect x="78" y="59" width="1.5" height="1.5" fill="#a0a8a0"/><rect x="111" y="38" width="1.5" height="1.5" fill="#8a9aa8"/><rect x="119" y="25" width="1.5" height="1.5" fill="#9aa8b8"/><rect x="45" y="65" width="1.5" height="1.5" fill="#9aa8b8"/><rect x="93" y="13" width="1.5" height="1.5" fill="#b86a50"/><rect x="47" y="37" width="1.5" height="1.5" fill="#7890b0"/><rect x="165" y="49" width="1.5" height="1.5" fill="#2e4a28"/><rect x="68" y="71" width="1.5" height="1.5" fill="#b86a50"/><rect x="15" y="82" width="1.5" height="1.5" fill="#7890b0"/><rect x="68" y="45" width="1.5" height="1.5" fill="#b86a50"/><rect x="109" y="80" width="1.5" height="1.5" fill="#6a9a5a"/><rect x="96" y="60" width="1.5" height="1.5" fill="#4a6a38"/><rect x="139" y="83" width="1.5" height="1.5" fill="#9aa8b8"/><rect x="57" y="86" width="1.5" height="1.5" fill="#8a9aa8"/><rect x="126" y="73" width="1.5" height="1.5" fill="#a0a8a0"/><rect x="161" y="20" width="1.5" height="1.5" fill="#b86a50"/><rect x="157" y="85" width="1.5" height="1.5" fill="#e0e0e0"/><rect x="93" y="71" width="1.5" height="1.5" fill="#1c2a18"/><rect x="46" y="65" width="1.5" height="1.5" fill="#c8c0b0"/><rect x="61" y="16" width="1.5" height="1.5" fill="#9aa8b8"/><rect x="60" y="42" width="1.5" height="1.5" fill="#e0e0e0"/><rect x="85" y="12" width="1.5" height="1.5" fill="#8a9aa8"/><rect x="75" y="13" width="1.5" height="1.5" fill="#4a6a38"/><rect x="58" y="71" width="1.5" height="1.5" fill="#2e4a28"/><rect x="82" y="87" width="1.5" height="1.5" fill="#7890b0"/><rect x="90" y="62" width="1.5" height="1.5" fill="#9aa8b8"/><rect x="165" y="48" width="1.5" height="1.5" fill="#7890b0"/><rect x="15" y="27" width="1.5" height="1.5" fill="#4a6a38"/><rect x="97" y="74" width="1.5" height="1.5" fill="#4a6a38"/><rect x="111" y="50" width="1.5" height="1.5" fill="#4a6a38"/><rect x="45" y="62" width="1.5" height="1.5" fill="#202820"/><rect x="36" y="76" width="1.5" height="1.5" fill="#4a6a38"/><rect x="91" y="54" width="1.5" height="1.5" fill="#b86a50"/><rect x="72" y="19" width="1.5" height="1.5" fill="#c8c0b0"/><rect x="105" y="12" width="1.5" height="1.5" fill="#c8c0b0"/><rect x="90" y="41" width="1.5" height="1.5" fill="#202820"/><rect x="21" y="17" width="1.5" height="1.5" fill="#2e4a28"/><rect x="11" y="51" width="1.5" height="1.5" fill="#6a9a5a"/><rect x="160" y="72" width="1.5" height="1.5" fill="#6a9a5a"/><rect x="47" y="46" width="1.5" height="1.5" fill="#2e4a28"/><rect x="59" y="79" width="1.5" height="1.5" fill="#9aa8b8"/><rect x="91" y="18" width="1.5" height="1.5" fill="#6a9a5a"/><rect x="108" y="81" width="1.5" height="1.5" fill="#2e4a28"/><rect x="122" y="85" width="1.5" height="1.5" fill="#c8c0b0"/><rect x="34" y="27" width="1.5" height="1.5" fill="#a0a8a0"/><rect x="49" y="66" width="1.5" height="1.5" fill="#b86a50"/><rect x="108" y="18" width="1.5" height="1.5" fill="#7890b0"/><rect x="101" y="76" width="1.5" height="1.5" fill="#202820"/><rect x="44" y="25" width="1.5" height="1.5" fill="#4a6a38"/><rect x="153" y="12" width="1.5" height="1.5" fill="#a0a8a0"/><rect x="72" y="51" width="1.5" height="1.5" fill="#2e4a28"/><rect x="94" y="77" width="1.5" height="1.5" fill="#4a6a38"/><rect x="111" y="51" width="1.5" height="1.5" fill="#4a6a38"/><rect x="106" y="76" width="1.5" height="1.5" fill="#b86a50"/><rect x="159" y="58" width="1.5" height="1.5" fill="#1c2a18"/><rect x="157" y="34" width="1.5" height="1.5" fill="#1c2a18"/><rect x="155" y="25" width="1.5" height="1.5" fill="#b86a50"/><rect x="154" y="20" width="1.5" height="1.5" fill="#b86a50"/><rect x="23" y="17" width="1.5" height="1.5" fill="#6a9a5a"/><rect x="17" y="74" width="1.5" height="1.5" fill="#6a9a5a"/><rect x="95" y="64" width="1.5" height="1.5" fill="#b86a50"/><rect x="70" y="63" width="1.5" height="1.5" fill="#c8c0b0"/><rect x="17" y="54" width="1.5" height="1.5" fill="#1c2a18"/><rect x="159" y="85" width="1.5" height="1.5" fill="#8a9aa8"/><rect x="123" y="59" width="1.5" height="1.5" fill="#1c2a18"/><rect x="87" y="63" width="1.5" height="1.5" fill="#b86a50"/><rect x="140" y="47" width="1.5" height="1.5" fill="#c8c0b0"/><rect x="7" y="52" width="1.5" height="1.5" fill="#4a6a38"/><rect x="157" y="47" width="1.5" height="1.5" fill="#b86a50"/><rect x="32" y="26" width="1.5" height="1.5" fill="#2e4a28"/><rect x="172" y="81" width="1.5" height="1.5" fill="#8a9aa8"/><rect x="101" y="20" width="1.5" height="1.5" fill="#a0a8a0"/><rect x="80" y="69" width="1.5" height="1.5" fill="#1c2a18"/><rect x="68" y="43" width="1.5" height="1.5" fill="#1c2a18"/><rect x="75" y="56" width="1.5" height="1.5" fill="#c8c0b0"/><rect x="110" y="13" width="1.5" height="1.5" fill="#b86a50"/><rect x="32" y="45" width="1.5" height="1.5" fill="#7890b0"/><rect x="64" y="81" width="1.5" height="1.5" fill="#202820"/><rect x="29" y="49" width="1.5" height="1.5" fill="#c8c0b0"/><rect x="56" y="17" width="1.5" height="1.5" fill="#7890b0"/><rect x="152" y="80" width="1.5" height="1.5" fill="#6a9a5a"/><rect x="99" y="25" width="1.5" height="1.5" fill="#202820"/><rect x="171" y="72" width="1.5" height="1.5" fill="#e0e0e0"/><rect x="49" y="19" width="1.5" height="1.5" fill="#7890b0"/><rect x="135" y="73" width="1.5" height="1.5" fill="#6a9a5a"/><rect x="23" y="35" width="1.5" height="1.5" fill="#4a6a38"/><rect x="121" y="69" width="1.5" height="1.5" fill="#2e4a28"/><rect x="71" y="66" width="1.5" height="1.5" fill="#8a9aa8"/><rect x="139" y="33" width="1.5" height="1.5" fill="#8a9aa8"/><rect x="2" y="37" width="1.5" height="1.5" fill="#a0a8a0"/><rect x="157" y="14" width="1.5" height="1.5" fill="#e0e0e0"/><rect x="164" y="61" width="1.5" height="1.5" fill="#1c2a18"/><rect x="38" y="41" width="1.5" height="1.5" fill="#2e4a28"/><rect x="93" y="40" width="1.5" height="1.5" fill="#9aa8b8"/><rect x="112" y="64" width="1.5" height="1.5" fill="#6a9a5a"/><rect x="171" y="12" width="1.5" height="1.5" fill="#202820"/><rect x="19" y="28" width="1.5" height="1.5" fill="#9aa8b8"/><rect x="70" y="14" width="1.5" height="1.5" fill="#b86a50"/><rect x="113" y="11" width="1.5" height="1.5" fill="#e0e0e0"/><rect x="44" y="80" width="1.5" height="1.5" fill="#4a6a38"/><rect x="94" y="42" width="1.5" height="1.5" fill="#4a6a38"/><rect x="99" y="87" width="1.5" height="1.5" fill="#a0a8a0"/><rect x="77" y="60" width="1.5" height="1.5" fill="#4a6a38"/><rect x="104" y="68" width="1.5" height="1.5" fill="#c8c0b0"/><rect x="67" y="82" width="1.5" height="1.5" fill="#6a9a5a"/><rect x="82" y="23" width="1.5" height="1.5" fill="#9aa8b8"/><rect x="94" y="56" width="1.5" height="1.5" fill="#6a9a5a"/><rect x="164" y="42" width="1.5" height="1.5" fill="#4a6a38"/><rect x="69" y="34" width="1.5" height="1.5" fill="#4a6a38"/><rect x="50" y="60" width="1.5" height="1.5" fill="#4a6a38"/><rect x="162" y="61" width="1.5" height="1.5" fill="#7890b0"/><rect x="52" y="11" width="1.5" height="1.5" fill="#b86a50"/><rect x="102" y="59" width="1.5" height="1.5" fill="#6a9a5a"/><rect x="131" y="40" width="1.5" height="1.5" fill="#1c2a18"/><rect x="130" y="14" width="1.5" height="1.5" fill="#7890b0"/><rect x="164" y="16" width="1.5" height="1.5" fill="#b86a50"/><rect x="75" y="47" width="1.5" height="1.5" fill="#b86a50"/><rect x="8" y="18" width="1.5" height="1.5" fill="#7890b0"/><rect x="158" y="21" width="1.5" height="1.5" fill="#b86a50"/><rect x="105" y="19" width="1.5" height="1.5" fill="#202820"/><rect x="73" y="19" width="1.5" height="1.5" fill="#c8c0b0"/><rect x="62" y="22" width="1.5" height="1.5" fill="#1c2a18"/><rect x="77" y="61" width="1.5" height="1.5" fill="#9aa8b8"/><rect x="105" y="59" width="1.5" height="1.5" fill="#a0a8a0"/><rect x="73" y="70" width="1.5" height="1.5" fill="#4a6a38"/><rect x="142" y="21" width="1.5" height="1.5" fill="#e0e0e0"/><rect x="128" y="28" width="1.5" height="1.5" fill="#8a9aa8"/><rect x="88" y="34" width="1.5" height="1.5" fill="#4a6a38"/><rect x="109" y="38" width="1.5" height="1.5" fill="#e0e0e0"/><rect x="106" y="66" width="1.5" height="1.5" fill="#7890b0"/><rect x="103" y="59" width="1.5" height="1.5" fill="#b86a50"/><rect x="33" y="29" width="1.5" height="1.5" fill="#a0a8a0"/><rect x="159" y="78" width="1.5" height="1.5" fill="#c8c0b0"/><rect x="109" y="11" width="1.5" height="1.5" fill="#e0e0e0"/><rect x="74" y="58" width="1.5" height="1.5" fill="#8a9aa8"/><rect x="39" y="31" width="1.5" height="1.5" fill="#8a9aa8"/><rect x="159" y="22" width="1.5" height="1.5" fill="#b86a50"/><rect x="110" y="39" width="1.5" height="1.5" fill="#9aa8b8"/><rect x="62" y="36" width="1.5" height="1.5" fill="#9aa8b8"/><rect x="130" y="75" width="1.5" height="1.5" fill="#8a9aa8"/><rect x="140" y="44" width="1.5" height="1.5" fill="#202820"/><rect x="146" y="69" width="1.5" height="1.5" fill="#9aa8b8"/><rect x="74" y="30" width="1.5" height="1.5" fill="#2e4a28"/><rect x="64" y="60" width="1.5" height="1.5" fill="#202820"/><rect x="57" y="52" width="1.5" height="1.5" fill="#7890b0"/><rect x="144" y="24" width="1.5" height="1.5" fill="#a0a8a0"/><rect x="64" y="17" width="1.5" height="1.5" fill="#1c2a18"/><rect x="14" y="16" width="1.5" height="1.5" fill="#202820"/><rect x="99" y="73" width="1.5" height="1.5" fill="#9aa8b8"/><rect x="52" y="70" width="1.5" height="1.5" fill="#8a9aa8"/><rect x="54" y="80" width="1.5" height="1.5" fill="#202820"/><rect x="14" y="33" width="1.5" height="1.5" fill="#7890b0"/><rect x="133" y="35" width="1.5" height="1.5" fill="#2e4a28"/><rect x="38" y="61" width="1.5" height="1.5" fill="#1c2a18"/><rect x="64" y="19" width="1.5" height="1.5" fill="#7890b0"/><rect x="77" y="56" width="1.5" height="1.5" fill="#a0a8a0"/><rect x="159" y="44" width="1.5" height="1.5" fill="#e0e0e0"/><rect x="80" y="27" width="1.5" height="1.5" fill="#7890b0"/><rect x="156" y="29" width="1.5" height="1.5" fill="#1c2a18"/><rect x="144" y="12" width="1.5" height="1.5" fill="#a0a8a0"/><rect x="69" y="40" width="1.5" height="1.5" fill="#b86a50"/><rect x="129" y="38" width="1.5" height="1.5" fill="#6a9a5a"/><rect x="94" y="74" width="1.5" height="1.5" fill="#202820"/><rect x="31" y="17" width="1.5" height="1.5" fill="#9aa8b8"/><rect x="153" y="32" width="1.5" height="1.5" fill="#c8c0b0"/><rect x="38" y="14" width="1.5" height="1.5" fill="#2e4a28"/><rect x="99" y="84" width="1.5" height="1.5" fill="#a0a8a0"/><rect x="146" y="43" width="1.5" height="1.5" fill="#202820"/><rect x="95" y="71" width="1.5" height="1.5" fill="#8a9aa8"/><rect x="58" y="31" width="1.5" height="1.5" fill="#8a9aa8"/><rect x="156" y="17" width="1.5" height="1.5" fill="#a0a8a0"/><rect x="114" y="18" width="1.5" height="1.5" fill="#a0a8a0"/><rect x="73" y="65" width="1.5" height="1.5" fill="#9aa8b8"/><rect x="133" y="50" width="1.5" height="1.5" fill="#9aa8b8"/><rect x="69" y="36" width="1.5" height="1.5" fill="#1c2a18"/><rect x="117" y="48" width="1.5" height="1.5" fill="#4a6a38"/><rect x="140" y="16" width="1.5" height="1.5" fill="#202820"/><rect x="159" y="42" width="1.5" height="1.5" fill="#a0a8a0"/><rect x="61" y="10" width="1.5" height="1.5" fill="#6a9a5a"/><rect x="145" y="78" width="1.5" height="1.5" fill="#4a6a38"/><rect x="111" y="50" width="1.5" height="1.5" fill="#7890b0"/><rect x="2" y="18" width="1.5" height="1.5" fill="#6a9a5a"/><rect x="159" y="29" width="1.5" height="1.5" fill="#2e4a28"/><rect x="172" y="39" width="1.5" height="1.5" fill="#2e4a28"/><rect x="56" y="40" width="1.5" height="1.5" fill="#4a6a38"/><rect x="51" y="85" width="1.5" height="1.5" fill="#c8c0b0"/><rect x="82" y="66" width="1.5" height="1.5" fill="#e0e0e0"/><rect x="113" y="70" width="1.5" height="1.5" fill="#2e4a28"/><rect x="159" y="68" width="1.5" height="1.5" fill="#c8c0b0"/><rect x="102" y="80" width="1.5" height="1.5" fill="#c8c0b0"/><rect x="54" y="25" width="1.5" height="1.5" fill="#1c2a18"/><rect x="38" y="28" width="1.5" height="1.5" fill="#7890b0"/><rect x="82" y="49" width="1.5" height="1.5" fill="#9aa8b8"/><rect x="32" y="32" width="1.5" height="1.5" fill="#2e4a28"/><rect x="158" y="82" width="1.5" height="1.5" fill="#a0a8a0"/><rect x="95" y="73" width="1.5" height="1.5" fill="#9aa8b8"/><rect x="148" y="47" width="1.5" height="1.5" fill="#6a9a5a"/><rect x="159" y="36" width="1.5" height="1.5" fill="#4a6a38"/><rect x="134" y="17" width="1.5" height="1.5" fill="#b86a50"/><rect x="70" y="27" width="1.5" height="1.5" fill="#2e4a28"/><rect x="139" y="40" width="1.5" height="1.5" fill="#4a6a38"/><rect x="138" y="70" width="1.5" height="1.5" fill="#c8c0b0"/><rect x="114" y="28" width="1.5" height="1.5" fill="#c8c0b0"/><rect x="152" y="80" width="1.5" height="1.5" fill="#9aa8b8"/><rect x="139" y="65" width="1.5" height="1.5" fill="#202820"/><rect x="152" y="42" width="1.5" height="1.5" fill="#1c2a18"/><rect x="25" y="80" width="1.5" height="1.5" fill="#4a6a38"/><rect x="23" y="67" width="1.5" height="1.5" fill="#202820"/><rect x="46" y="51" width="1.5" height="1.5" fill="#2e4a28"/><rect x="100" y="24" width="1.5" height="1.5" fill="#b86a50"/><rect x="143" y="75" width="1.5" height="1.5" fill="#2e4a28"/><rect x="14" y="31" width="1.5" height="1.5" fill="#7890b0"/><rect x="92" y="79" width="1.5" height="1.5" fill="#7890b0"/><rect x="82" y="84" width="1.5" height="1.5" fill="#202820"/><rect x="95" y="49" width="1.5" height="1.5" fill="#c8c0b0"/><rect x="137" y="42" width="1.5" height="1.5" fill="#a0a8a0"/><rect x="16" y="74" width="1.5" height="1.5" fill="#b86a50"/><rect x="6" y="42" width="1.5" height="1.5" fill="#9aa8b8"/><rect x="27" y="74" width="1.5" height="1.5" fill="#e0e0e0"/><rect x="55" y="41" width="1.5" height="1.5" fill="#4a6a38"/><rect x="53" y="46" width="1.5" height="1.5" fill="#7890b0"/><rect x="12" y="16" width="1.5" height="1.5" fill="#2e4a28"/><rect x="18" y="40" width="1.5" height="1.5" fill="#9aa8b8"/><rect x="130" y="70" width="1.5" height="1.5" fill="#8a9aa8"/><rect x="114" y="11" width="1.5" height="1.5" fill="#6a9a5a"/><rect x="124" y="47" width="1.5" height="1.5" fill="#e0e0e0"/><rect x="98" y="45" width="1.5" height="1.5" fill="#c8c0b0"/><rect x="149" y="75" width="1.5" height="1.5" fill="#7890b0"/><rect x="36" y="57" width="1.5" height="1.5" fill="#e0e0e0"/><rect x="109" y="82" width="1.5" height="1.5" fill="#7890b0"/><rect x="52" y="36" width="1.5" height="1.5" fill="#6a9a5a"/><rect x="97" y="17" width="1.5" height="1.5" fill="#b86a50"/><rect x="35" y="66" width="1.5" height="1.5" fill="#1c2a18"/><rect x="54" y="31" width="1.5" height="1.5" fill="#9aa8b8"/><rect x="126" y="36" width="1.5" height="1.5" fill="#6a9a5a"/><rect x="16" y="21" width="1.5" height="1.5" fill="#8a9aa8"/><rect x="23" y="59" width="1.5" height="1.5" fill="#2e4a28"/><rect x="31" y="41" width="1.5" height="1.5" fill="#9aa8b8"/><rect x="103" y="17" width="1.5" height="1.5" fill="#b86a50"/><rect x="6" y="86" width="1.5" height="1.5" fill="#6a9a5a"/><rect x="71" y="16" width="1.5" height="1.5" fill="#6a9a5a"/><rect x="161" y="21" width="1.5" height="1.5" fill="#b86a50"/><rect x="133" y="73" width="1.5" height="1.5" fill="#6a9a5a"/><rect x="84" y="81" width="1.5" height="1.5" fill="#202820"/><rect x="3" y="41" width="1.5" height="1.5" fill="#7890b0"/><rect x="55" y="71" width="1.5" height="1.5" fill="#b86a50"/><rect x="115" y="57" width="1.5" height="1.5" fill="#c8c0b0"/><rect x="45" y="25" width="1.5" height="1.5" fill="#e0e0e0"/><rect x="113" y="18" width="1.5" height="1.5" fill="#6a9a5a"/><rect x="36" y="36" width="1.5" height="1.5" fill="#e0e0e0"/><rect x="144" y="57" width="1.5" height="1.5" fill="#2e4a28"/><rect x="44" y="51" width="1.5" height="1.5" fill="#e0e0e0"/><rect x="95" y="37" width="1.5" height="1.5" fill="#4a6a38"/><rect x="89" y="54" width="1.5" height="1.5" fill="#b86a50"/><rect x="172" y="50" width="1.5" height="1.5" fill="#7890b0"/><rect x="123" y="82" width="1.5" height="1.5" fill="#202820"/><rect x="164" y="58" width="1.5" height="1.5" fill="#b86a50"/><rect x="135" y="20" width="1.5" height="1.5" fill="#9aa8b8"/><rect x="100" y="64" width="1.5" height="1.5" fill="#1c2a18"/><rect x="16" y="77" width="1.5" height="1.5" fill="#e0e0e0"/><rect x="81" y="20" width="1.5" height="1.5" fill="#7890b0"/><rect x="24" y="80" width="1.5" height="1.5" fill="#4a6a38"/><rect x="95" y="15" width="1.5" height="1.5" fill="#e0e0e0"/><rect x="29" y="67" width="1.5" height="1.5" fill="#1c2a18"/><rect x="105" y="19" width="1.5" height="1.5" fill="#c8c0b0"/><rect x="50" y="79" width="1.5" height="1.5" fill="#b86a50"/><rect x="132" y="38" width="1.5" height="1.5" fill="#2e4a28"/><rect x="32" y="52" width="1.5" height="1.5" fill="#8a9aa8"/><rect x="79" y="41" width="1.5" height="1.5" fill="#a0a8a0"/><rect x="24" y="68" width="1.5" height="1.5" fill="#7890b0"/><rect x="158" y="57" width="1.5" height="1.5" fill="#a0a8a0"/><rect x="140" y="11" width="1.5" height="1.5" fill="#b86a50"/><rect x="72" y="13" width="1.5" height="1.5" fill="#4a6a38"/><rect x="67" y="54" width="1.5" height="1.5" fill="#2e4a28"/><rect x="59" y="20" width="1.5" height="1.5" fill="#b86a50"/><rect x="99" y="36" width="1.5" height="1.5" fill="#a0a8a0"/><rect x="136" y="66" width="1.5" height="1.5" fill="#2e4a28"/><rect x="70" y="48" width="1.5" height="1.5" fill="#8a9aa8"/><rect x="82" y="42" width="1.5" height="1.5" fill="#202820"/><rect x="159" y="53" width="1.5" height="1.5" fill="#6a9a5a"/><rect x="131" y="47" width="1.5" height="1.5" fill="#9aa8b8"/><rect x="146" y="76" width="1.5" height="1.5" fill="#6a9a5a"/><rect x="144" y="19" width="1.5" height="1.5" fill="#8a9aa8"/><rect x="158" y="50" width="1.5" height="1.5" fill="#4a6a38"/><rect x="91" y="42" width="1.5" height="1.5" fill="#c8c0b0"/><rect x="56" y="14" width="1.5" height="1.5" fill="#7890b0"/><rect x="107" y="43" width="1.5" height="1.5" fill="#6a9a5a"/><rect x="104" y="68" width="1.5" height="1.5" fill="#e0e0e0"/><rect x="154" y="78" width="1.5" height="1.5" fill="#b86a50"/><rect x="22" y="44" width="1.5" height="1.5" fill="#4a6a38"/><rect x="152" y="85" width="1.5" height="1.5" fill="#9aa8b8"/><rect x="121" y="51" width="1.5" height="1.5" fill="#b86a50"/><rect x="95" y="61" width="1.5" height="1.5" fill="#b86a50"/><rect x="153" y="87" width="1.5" height="1.5" fill="#7890b0"/><rect x="168" y="61" width="1.5" height="1.5" fill="#4a6a38"/><rect x="73" y="72" width="1.5" height="1.5" fill="#b86a50"/><rect x="113" y="42" width="1.5" height="1.5" fill="#8a9aa8"/><rect x="157" y="18" width="1.5" height="1.5" fill="#2e4a28"/><rect x="22" y="51" width="1.5" height="1.5" fill="#9aa8b8"/><rect x="0" y="29" width="1.5" height="1.5" fill="#e0e0e0"/><rect x="4" y="23" width="1.5" height="1.5" fill="#9aa8b8"/><rect x="156" y="73" width="1.5" height="1.5" fill="#6a9a5a"/><rect x="25" y="63" width="1.5" height="1.5" fill="#b86a50"/><rect x="8" y="12" width="1.5" height="1.5" fill="#1c2a18"/><rect x="54" y="48" width="1.5" height="1.5" fill="#9aa8b8"/><rect x="153" y="26" width="1.5" height="1.5" fill="#7890b0"/><rect x="156" y="25" width="1.5" height="1.5" fill="#1c2a18"/><rect x="156" y="11" width="1.5" height="1.5" fill="#a0a8a0"/><rect x="153" y="87" width="1.5" height="1.5" fill="#b86a50"/><rect x="93" y="28" width="1.5" height="1.5" fill="#c8c0b0"/><rect x="113" y="34" width="1.5" height="1.5" fill="#1c2a18"/><rect x="167" y="31" width="1.5" height="1.5" fill="#6a9a5a"/><rect x="124" y="20" width="1.5" height="1.5" fill="#7890b0"/><rect x="167" y="70" width="1.5" height="1.5" fill="#6a9a5a"/><rect x="14" y="27" width="1.5" height="1.5" fill="#e0e0e0"/><rect x="21" y="63" width="1.5" height="1.5" fill="#e0e0e0"/><rect x="31" y="28" width="1.5" height="1.5" fill="#a0a8a0"/><rect x="51" y="31" width="1.5" height="1.5" fill="#a0a8a0"/><rect x="91" y="19" width="1.5" height="1.5" fill="#4a6a38"/><rect x="40" y="33" width="1.5" height="1.5" fill="#2e4a28"/><rect x="116" y="31" width="1.5" height="1.5" fill="#a0a8a0"/><rect x="116" y="46" width="1.5" height="1.5" fill="#8a9aa8"/><rect x="77" y="51" width="1.5" height="1.5" fill="#4a6a38"/><rect x="158" y="11" width="1.5" height="1.5" fill="#202820"/><rect x="50" y="29" width="1.5" height="1.5" fill="#202820"/><rect x="15" y="32" width="1.5" height="1.5" fill="#b86a50"/><rect x="43" y="31" width="1.5" height="1.5" fill="#4a6a38"/><rect x="5" y="71" width="1.5" height="1.5" fill="#2e4a28"/><rect x="172" y="13" width="1.5" height="1.5" fill="#9aa8b8"/><rect x="159" y="55" width="1.5" height="1.5" fill="#c8c0b0"/><rect x="162" y="48" width="1.5" height="1.5" fill="#2e4a28"/><rect x="11" y="70" width="1.5" height="1.5" fill="#1c2a18"/><rect x="56" y="47" width="1.5" height="1.5" fill="#c8c0b0"/><rect x="90" y="49" width="1.5" height="1.5" fill="#a0a8a0"/><rect x="119" y="50" width="1.5" height="1.5" fill="#4a6a38"/><rect x="30" y="70" width="1.5" height="1.5" fill="#2e4a28"/><rect x="20" y="44" width="1.5" height="1.5" fill="#a0a8a0"/><rect x="77" y="70" width="1.5" height="1.5" fill="#7890b0"/><rect x="138" y="28" width="1.5" height="1.5" fill="#9aa8b8"/><rect x="95" y="76" width="1.5" height="1.5" fill="#202820"/><rect x="87" y="13" width="1.5" height="1.5" fill="#202820"/><rect x="169" y="14" width="1.5" height="1.5" fill="#9aa8b8"/><rect x="152" y="24" width="1.5" height="1.5" fill="#2e4a28"/><rect x="106" y="57" width="1.5" height="1.5" fill="#6a9a5a"/><rect x="88" y="66" width="1.5" height="1.5" fill="#c8c0b0"/><rect x="13" y="80" width="1.5" height="1.5" fill="#202820"/><rect x="111" y="55" width="1.5" height="1.5" fill="#7890b0"/><rect x="41" y="21" width="1.5" height="1.5" fill="#e0e0e0"/><rect x="74" y="64" width="1.5" height="1.5" fill="#202820"/><rect x="128" y="70" width="1.5" height="1.5" fill="#202820"/><rect x="87" y="60" width="1.5" height="1.5" fill="#4a6a38"/><rect x="30" y="30" width="1.5" height="1.5" fill="#2e4a28"/><rect x="86" y="61" width="1.5" height="1.5" fill="#202820"/><rect x="137" y="15" width="1.5" height="1.5" fill="#6a9a5a"/><rect x="81" y="64" width="1.5" height="1.5" fill="#7890b0"/><rect x="169" y="13" width="1.5" height="1.5" fill="#9aa8b8"/><rect x="131" y="56" width="1.5" height="1.5" fill="#2e4a28"/><rect x="25" y="45" width="1.5" height="1.5" fill="#7890b0"/><rect x="172" y="10" width="1.5" height="1.5" fill="#6a9a5a"/><rect x="155" y="21" width="1.5" height="1.5" fill="#6a9a5a"/><rect x="97" y="46" width="1.5" height="1.5" fill="#8a9aa8"/><rect x="169" y="62" width="1.5" height="1.5" fill="#7890b0"/><rect x="133" y="67" width="1.5" height="1.5" fill="#b86a50"/><rect x="51" y="19" width="1.5" height="1.5" fill="#b86a50"/><rect x="73" y="17" width="1.5" height="1.5" fill="#b86a50"/><rect x="63" y="36" width="1.5" height="1.5" fill="#202820"/><rect x="38" y="22" width="1.5" height="1.5" fill="#202820"/><rect x="113" y="15" width="1.5" height="1.5" fill="#1c2a18"/><rect x="99" y="80" width="1.5" height="1.5" fill="#202820"/><rect x="161" y="24" width="1.5" height="1.5" fill="#6a9a5a"/><rect x="163" y="26" width="1.5" height="1.5" fill="#6a9a5a"/><rect x="136" y="27" width="1.5" height="1.5" fill="#1c2a18"/><rect x="43" y="71" width="1.5" height="1.5" fill="#2e4a28"/><rect x="84" y="41" width="1.5" height="1.5" fill="#202820"/><rect x="81" y="34" width="1.5" height="1.5" fill="#9aa8b8"/><rect x="85" y="58" width="1.5" height="1.5" fill="#2e4a28"/><rect x="150" y="26" width="1.5" height="1.5" fill="#6a9a5a"/><rect x="73" y="14" width="1.5" height="1.5" fill="#e0e0e0"/><rect x="63" y="31" width="1.5" height="1.5" fill="#c8c0b0"/><rect x="90" y="67" width="1.5" height="1.5" fill="#4a6a38"/><rect x="68" y="81" width="1.5" height="1.5" fill="#7890b0"/><rect x="38" y="18" width="1.5" height="1.5" fill="#c8c0b0"/><rect x="27" y="82" width="1.5" height="1.5" fill="#1c2a18"/><rect x="24" y="29" width="1.5" height="1.5" fill="#8a9aa8"/><rect x="4" y="35" width="1.5" height="1.5" fill="#6a9a5a"/><rect x="78" y="76" width="1.5" height="1.5" fill="#6a9a5a"/><rect x="57" y="69" width="1.5" height="1.5" fill="#4a6a38"/><rect x="116" y="33" width="1.5" height="1.5" fill="#202820"/><rect x="41" y="13" width="1.5" height="1.5" fill="#2e4a28"/><rect x="89" y="20" width="1.5" height="1.5" fill="#b86a50"/><rect x="54" y="43" width="1.5" height="1.5" fill="#4a6a38"/><rect x="121" y="50" width="1.5" height="1.5" fill="#4a6a38"/><rect x="45" y="66" width="1.5" height="1.5" fill="#a0a8a0"/><rect x="66" y="78" width="1.5" height="1.5" fill="#e0e0e0"/><rect x="93" y="45" width="1.5" height="1.5" fill="#2e4a28"/><rect x="67" y="77" width="1.5" height="1.5" fill="#b86a50"/><rect x="18" y="39" width="1.5" height="1.5" fill="#202820"/><rect x="38" y="13" width="1.5" height="1.5" fill="#c8c0b0"/><rect x="130" y="47" width="1.5" height="1.5" fill="#c8c0b0"/><rect x="141" y="85" width="1.5" height="1.5" fill="#e0e0e0"/><rect x="115" y="15" width="1.5" height="1.5" fill="#b86a50"/><rect x="97" y="37" width="1.5" height="1.5" fill="#8a9aa8"/><rect x="166" y="77" width="1.5" height="1.5" fill="#b86a50"/><rect x="136" y="30" width="1.5" height="1.5" fill="#6a9a5a"/><rect x="21" y="48" width="1.5" height="1.5" fill="#9aa8b8"/><rect x="67" y="35" width="1.5" height="1.5" fill="#9aa8b8"/><rect x="122" y="27" width="1.5" height="1.5" fill="#6a9a5a"/><rect x="35" y="69" width="1.5" height="1.5" fill="#1c2a18"/><rect x="116" y="28" width="1.5" height="1.5" fill="#8a9aa8"/><rect x="129" y="80" width="1.5" height="1.5" fill="#2e4a28"/><rect x="83" y="30" width="1.5" height="1.5" fill="#4a6a38"/><rect x="54" y="80" width="1.5" height="1.5" fill="#6a9a5a"/><rect x="21" y="80" width="1.5" height="1.5" fill="#6a9a5a"/><rect x="47" y="39" width="1.5" height="1.5" fill="#202820"/><rect x="52" y="65" width="1.5" height="1.5" fill="#e0e0e0"/><rect x="13" y="13" width="1.5" height="1.5" fill="#1c2a18"/><rect x="155" y="54" width="1.5" height="1.5" fill="#e0e0e0"/><rect x="142" y="78" width="1.5" height="1.5" fill="#a0a8a0"/><rect x="82" y="57" width="1.5" height="1.5" fill="#1c2a18"/><rect x="5" y="64" width="1.5" height="1.5" fill="#b86a50"/><rect x="134" y="58" width="1.5" height="1.5" fill="#202820"/><rect x="94" y="57" width="1.5" height="1.5" fill="#8a9aa8"/><rect x="48" y="74" width="1.5" height="1.5" fill="#9aa8b8"/><rect x="66" y="80" width="1.5" height="1.5" fill="#c8c0b0"/><rect x="140" y="63" width="1.5" height="1.5" fill="#e0e0e0"/><rect x="54" y="38" width="1.5" height="1.5" fill="#c8c0b0"/><rect x="26" y="25" width="1.5" height="1.5" fill="#b86a50"/><rect x="45" y="27" width="1.5" height="1.5" fill="#4a6a38"/><rect x="0" y="52" width="1.5" height="1.5" fill="#6a9a5a"/><rect x="1" y="52" width="1.5" height="1.5" fill="#a0a8a0"/><rect x="133" y="16" width="1.5" height="1.5" fill="#4a6a38"/><rect x="154" y="63" width="1.5" height="1.5" fill="#1c2a18"/><rect x="46" y="18" width="1.5" height="1.5" fill="#c8c0b0"/><rect x="55" y="65" width="1.5" height="1.5" fill="#7890b0"/><rect x="69" y="22" width="1.5" height="1.5" fill="#b86a50"/><rect x="143" y="22" width="1.5" height="1.5" fill="#202820"/><rect x="120" y="72" width="1.5" height="1.5" fill="#e0e0e0"/><rect x="64" y="32" width="1.5" height="1.5" fill="#7890b0"/><rect x="116" y="48" width="1.5" height="1.5" fill="#a0a8a0"/><rect x="43" y="35" width="1.5" height="1.5" fill="#2e4a28"/><rect x="160" y="67" width="1.5" height="1.5" fill="#8a9aa8"/><rect x="172" y="73" width="1.5" height="1.5" fill="#7890b0"/><rect x="54" y="75" width="1.5" height="1.5" fill="#4a6a38"/><rect x="134" y="47" width="1.5" height="1.5" fill="#2e4a28"/><rect x="108" y="42" width="1.5" height="1.5" fill="#9aa8b8"/><rect x="9" y="30" width="1.5" height="1.5" fill="#4a6a38"/><rect x="129" y="63" width="1.5" height="1.5" fill="#e0e0e0"/><rect x="125" y="29" width="1.5" height="1.5" fill="#7890b0"/><rect x="119" y="24" width="1.5" height="1.5" fill="#b86a50"/><rect x="147" y="74" width="1.5" height="1.5" fill="#202820"/><rect x="171" y="59" width="1.5" height="1.5" fill="#2e4a28"/><rect x="108" y="74" width="1.5" height="1.5" fill="#2e4a28"/><rect x="22" y="39" width="1.5" height="1.5" fill="#a0a8a0"/><rect x="51" y="60" width="1.5" height="1.5" fill="#c8c0b0"/><rect x="82" y="63" width="1.5" height="1.5" fill="#2e4a28"/><rect x="47" y="31" width="1.5" height="1.5" fill="#e0e0e0"/><rect x="110" y="41" width="1.5" height="1.5" fill="#a0a8a0"/><rect x="172" y="14" width="1.5" height="1.5" fill="#7890b0"/><rect x="174" y="77" width="1.5" height="1.5" fill="#b86a50"/><rect x="50" y="66" width="1.5" height="1.5" fill="#8a9aa8"/><rect x="70" y="80" width="1.5" height="1.5" fill="#4a6a38"/><rect x="149" y="23" width="1.5" height="1.5" fill="#8a9aa8"/><rect x="54" y="72" width="1.5" height="1.5" fill="#a0a8a0"/><rect x="49" y="40" width="1.5" height="1.5" fill="#202820"/><rect x="71" y="21" width="1.5" height="1.5" fill="#202820"/><rect x="68" y="63" width="1.5" height="1.5" fill="#4a6a38"/><rect x="49" y="77" width="1.5" height="1.5" fill="#9aa8b8"/><rect x="30" y="18" width="1.5" height="1.5" fill="#e0e0e0"/><rect x="153" y="43" width="1.5" height="1.5" fill="#2e4a28"/><rect x="56" y="11" width="1.5" height="1.5" fill="#202820"/><rect x="99" y="31" width="1.5" height="1.5" fill="#6a9a5a"/><rect x="48" y="28" width="1.5" height="1.5" fill="#9aa8b8"/><rect x="35" y="52" width="1.5" height="1.5" fill="#4a6a38"/><rect x="9" y="15" width="1.5" height="1.5" fill="#e0e0e0"/><rect x="117" y="10" width="1.5" height="1.5" fill="#1c2a18"/><rect x="84" y="87" width="1.5" height="1.5" fill="#b86a50"/><rect x="173" y="41" width="1.5" height="1.5" fill="#c8c0b0"/><rect x="72" y="72" width="1.5" height="1.5" fill="#6a9a5a"/><rect x="97" y="27" width="1.5" height="1.5" fill="#202820"/><rect x="114" y="58" width="1.5" height="1.5" fill="#e0e0e0"/><rect x="33" y="32" width="1.5" height="1.5" fill="#b86a50"/><rect x="173" y="44" width="1.5" height="1.5" fill="#7890b0"/><rect x="8" y="76" width="1.5" height="1.5" fill="#2e4a28"/><rect x="94" y="62" width="1.5" height="1.5" fill="#e0e0e0"/><rect x="62" y="68" width="1.5" height="1.5" fill="#e0e0e0"/><rect x="11" y="46" width="1.5" height="1.5" fill="#b86a50"/><rect x="11" y="38" width="1.5" height="1.5" fill="#4a6a38"/><rect x="46" y="29" width="1.5" height="1.5" fill="#7890b0"/><rect x="86" y="34" width="1.5" height="1.5" fill="#4a6a38"/><rect x="144" y="69" width="1.5" height="1.5" fill="#8a9aa8"/><rect x="163" y="47" width="1.5" height="1.5" fill="#7890b0"/><rect x="71" y="79" width="1.5" height="1.5" fill="#202820"/><rect x="4" y="54" width="1.5" height="1.5" fill="#b86a50"/><rect x="56" y="66" width="1.5" height="1.5" fill="#4a6a38"/><rect x="114" y="72" width="1.5" height="1.5" fill="#1c2a18"/><rect x="109" y="45" width="1.5" height="1.5" fill="#e0e0e0"/><rect x="49" y="80" width="1.5" height="1.5" fill="#1c2a18"/><rect x="103" y="30" width="1.5" height="1.5" fill="#b86a50"/><rect x="129" y="26" width="1.5" height="1.5" fill="#7890b0"/><rect x="23" y="33" width="1.5" height="1.5" fill="#b86a50"/><rect x="31" y="18" width="1.5" height="1.5" fill="#2e4a28"/><rect x="65" y="24" width="1.5" height="1.5" fill="#c8c0b0"/><rect x="2" y="49" width="1.5" height="1.5" fill="#6a9a5a"/><rect x="16" y="83" width="1.5" height="1.5" fill="#b86a50"/><rect x="4" y="23" width="1.5" height="1.5" fill="#8a9aa8"/><rect x="131" y="18" width="1.5" height="1.5" fill="#1c2a18"/><rect x="75" y="84" width="1.5" height="1.5" fill="#b86a50"/><rect x="87" y="70" width="1.5" height="1.5" fill="#2e4a28"/><rect x="141" y="15" width="1.5" height="1.5" fill="#6a9a5a"/><rect x="165" y="35" width="1.5" height="1.5" fill="#2e4a28"/><rect x="135" y="50" width="1.5" height="1.5" fill="#c8c0b0"/><rect x="26" y="59" width="1.5" height="1.5" fill="#6a9a5a"/><rect x="159" y="14" width="1.5" height="1.5" fill="#202820"/><rect x="107" y="78" width="1.5" height="1.5" fill="#7890b0"/><rect x="109" y="49" width="1.5" height="1.5" fill="#202820"/><rect x="161" y="19" width="1.5" height="1.5" fill="#7890b0"/><rect x="120" y="45" width="1.5" height="1.5" fill="#a0a8a0"/><rect x="81" y="74" width="1.5" height="1.5" fill="#4a6a38"/><rect x="40" y="56" width="1.5" height="1.5" fill="#202820"/><rect x="7" y="81" width="1.5" height="1.5" fill="#4a6a38"/><rect x="109" y="44" width="1.5" height="1.5" fill="#202820"/><rect x="8" y="14" width="1.5" height="1.5" fill="#1c2a18"/><rect x="26" y="46" width="1.5" height="1.5" fill="#e0e0e0"/><rect x="128" y="34" width="1.5" height="1.5" fill="#7890b0"/><rect x="82" y="52" width="1.5" height="1.5" fill="#c8c0b0"/><rect x="151" y="20" width="1.5" height="1.5" fill="#9aa8b8"/><rect x="19" y="24" width="1.5" height="1.5" fill="#a0a8a0"/><rect x="137" y="21" width="1.5" height="1.5" fill="#8a9aa8"/><rect x="139" y="49" width="1.5" height="1.5" fill="#e0e0e0"/><rect x="11" y="77" width="1.5" height="1.5" fill="#7890b0"/><rect x="60" y="50" width="1.5" height="1.5" fill="#1c2a18"/><rect x="79" y="51" width="1.5" height="1.5" fill="#6a9a5a"/><rect x="34" y="32" width="1.5" height="1.5" fill="#a0a8a0"/><rect x="42" y="18" width="1.5" height="1.5" fill="#9aa8b8"/><rect x="137" y="48" width="1.5" height="1.5" fill="#b86a50"/><rect x="13" y="48" width="1.5" height="1.5" fill="#c8c0b0"/><rect x="134" y="52" width="1.5" height="1.5" fill="#8a9aa8"/><rect x="139" y="22" width="1.5" height="1.5" fill="#1c2a18"/><rect x="31" y="36" width="1.5" height="1.5" fill="#1c2a18"/><rect x="166" y="27" width="1.5" height="1.5" fill="#e0e0e0"/><rect x="20" y="24" width="1.5" height="1.5" fill="#6a9a5a"/><rect x="5" y="63" width="1.5" height="1.5" fill="#9aa8b8"/><rect x="157" y="16" width="1.5" height="1.5" fill="#a0a8a0"/><rect x="36" y="58" width="1.5" height="1.5" fill="#7890b0"/><rect x="169" y="53" width="1.5" height="1.5" fill="#6a9a5a"/><rect x="66" y="73" width="1.5" height="1.5" fill="#7890b0"/><rect x="55" y="58" width="1.5" height="1.5" fill="#e0e0e0"/><rect x="115" y="26" width="1.5" height="1.5" fill="#b86a50"/><rect x="31" y="20" width="1.5" height="1.5" fill="#7890b0"/><rect x="101" y="13" width="1.5" height="1.5" fill="#e0e0e0"/><rect x="20" y="82" width="1.5" height="1.5" fill="#202820"/><rect x="108" y="34" width="1.5" height="1.5" fill="#c8c0b0"/><rect x="173" y="63" width="1.5" height="1.5" fill="#7890b0"/><rect x="125" y="77" width="1.5" height="1.5" fill="#6a9a5a"/><rect x="35" y="16" width="1.5" height="1.5" fill="#e0e0e0"/><rect x="74" y="73" width="1.5" height="1.5" fill="#6a9a5a"/><rect x="49" y="20" width="1.5" height="1.5" fill="#8a9aa8"/><rect x="164" y="37" width="1.5" height="1.5" fill="#7890b0"/><rect x="73" y="48" width="1.5" height="1.5" fill="#8a9aa8"/><rect x="50" y="77" width="1.5" height="1.5" fill="#e0e0e0"/><rect x="166" y="16" width="1.5" height="1.5" fill="#a0a8a0"/><rect x="79" y="82" width="1.5" height="1.5" fill="#6a9a5a"/><rect x="35" y="42" width="1.5" height="1.5" fill="#b86a50"/><rect x="78" y="15" width="1.5" height="1.5" fill="#6a9a5a"/><rect x="58" y="55" width="1.5" height="1.5" fill="#a0a8a0"/><rect x="166" y="33" width="1.5" height="1.5" fill="#7890b0"/><rect x="2" y="57" width="1.5" height="1.5" fill="#c8c0b0"/><rect x="72" y="20" width="1.5" height="1.5" fill="#e0e0e0"/><rect x="68" y="31" width="1.5" height="1.5" fill="#8a9aa8"/><rect x="143" y="75" width="1.5" height="1.5" fill="#202820"/><rect x="18" y="61" width="1.5" height="1.5" fill="#9aa8b8"/><rect x="156" y="17" width="1.5" height="1.5" fill="#1c2a18"/><rect x="3" y="12" width="1.5" height="1.5" fill="#202820"/><rect x="116" y="36" width="1.5" height="1.5" fill="#c8c0b0"/><rect x="116" y="22" width="1.5" height="1.5" fill="#8a9aa8"/><rect x="63" y="46" width="1.5" height="1.5" fill="#1c2a18"/><rect x="83" y="60" width="1.5" height="1.5" fill="#c8c0b0"/><rect x="169" y="85" width="1.5" height="1.5" fill="#6a9a5a"/><rect x="75" y="28" width="1.5" height="1.5" fill="#4a6a38"/><rect x="122" y="87" width="1.5" height="1.5" fill="#8a9aa8"/><rect x="174" y="61" width="1.5" height="1.5" fill="#a0a8a0"/><rect x="162" y="50" width="1.5" height="1.5" fill="#202820"/><rect x="36" y="38" width="1.5" height="1.5" fill="#2e4a28"/><rect x="90" y="17" width="1.5" height="1.5" fill="#8a9aa8"/><rect x="1" y="84" width="1.5" height="1.5" fill="#7890b0"/><rect x="108" y="67" width="1.5" height="1.5" fill="#e0e0e0"/><rect x="115" y="85" width="1.5" height="1.5" fill="#9aa8b8"/><rect x="135" y="19" width="1.5" height="1.5" fill="#9aa8b8"/><rect x="27" y="39" width="1.5" height="1.5" fill="#1c2a18"/><rect x="164" y="79" width="1.5" height="1.5" fill="#c8c0b0"/><rect x="19" y="42" width="1.5" height="1.5" fill="#4a6a38"/><rect x="93" y="19" width="1.5" height="1.5" fill="#8a9aa8"/><rect x="52" y="49" width="1.5" height="1.5" fill="#8a9aa8"/><rect x="12" y="28" width="1.5" height="1.5" fill="#a0a8a0"/><rect x="15" y="49" width="1.5" height="1.5" fill="#e0e0e0"/><rect x="61" y="29" width="1.5" height="1.5" fill="#202820"/><rect x="72" y="14" width="1.5" height="1.5" fill="#b86a50"/><rect x="102" y="23" width="1.5" height="1.5" fill="#8a9aa8"/><rect x="80" y="76" width="1.5" height="1.5" fill="#8a9aa8"/><rect x="141" y="49" width="1.5" height="1.5" fill="#2e4a28"/><rect x="169" y="50" width="1.5" height="1.5" fill="#6a9a5a"/><rect x="108" y="84" width="1.5" height="1.5" fill="#7890b0"/><rect x="168" y="42" width="1.5" height="1.5" fill="#c8c0b0"/><rect x="40" y="71" width="1.5" height="1.5" fill="#8a9aa8"/><rect x="128" y="65" width="1.5" height="1.5" fill="#2e4a28"/><rect x="51" y="58" width="1.5" height="1.5" fill="#6a9a5a"/><rect x="19" y="33" width="1.5" height="1.5" fill="#4a6a38"/><rect x="112" y="75" width="1.5" height="1.5" fill="#c8c0b0"/><rect x="68" y="33" width="1.5" height="1.5" fill="#b86a50"/><rect x="45" y="19" width="1.5" height="1.5" fill="#6a9a5a"/><rect x="57" y="48" width="1.5" height="1.5" fill="#a0a8a0"/><rect x="173" y="53" width="1.5" height="1.5" fill="#2e4a28"/><rect x="99" y="49" width="1.5" height="1.5" fill="#8a9aa8"/><rect x="69" y="33" width="1.5" height="1.5" fill="#7890b0"/><rect x="104" y="27" width="1.5" height="1.5" fill="#8a9aa8"/><rect x="75" y="47" width="1.5" height="1.5" fill="#1c2a18"/><rect x="113" y="36" width="1.5" height="1.5" fill="#8a9aa8"/><rect x="9" y="74" width="1.5" height="1.5" fill="#c8c0b0"/><rect x="28" y="39" width="1.5" height="1.5" fill="#1c2a18"/><rect x="70" y="27" width="1.5" height="1.5" fill="#8a9aa8"/><rect x="124" y="12" width="1.5" height="1.5" fill="#1c2a18"/><rect x="84" y="28" width="1.5" height="1.5" fill="#7890b0"/><rect x="92" y="66" width="1.5" height="1.5" fill="#1c2a18"/><rect x="71" y="84" width="1.5" height="1.5" fill="#c8c0b0"/><rect x="120" y="38" width="1.5" height="1.5" fill="#b86a50"/><rect x="64" y="56" width="1.5" height="1.5" fill="#1c2a18"/><rect x="146" y="26" width="1.5" height="1.5" fill="#202820"/><rect x="10" y="24" width="1.5" height="1.5" fill="#8a9aa8"/><rect x="90" y="68" width="1.5" height="1.5" fill="#c8c0b0"/><rect x="149" y="26" width="1.5" height="1.5" fill="#202820"/><rect x="47" y="71" width="1.5" height="1.5" fill="#6a9a5a"/><rect x="113" y="39" width="1.5" height="1.5" fill="#8a9aa8"/><rect x="50" y="62" width="1.5" height="1.5" fill="#8a9aa8"/><rect x="69" y="27" width="1.5" height="1.5" fill="#e0e0e0"/><rect x="57" y="34" width="1.5" height="1.5" fill="#2e4a28"/><rect x="137" y="59" width="1.5" height="1.5" fill="#c8c0b0"/><rect x="174" y="48" width="1.5" height="1.5" fill="#6a9a5a"/><rect x="109" y="53" width="1.5" height="1.5" fill="#1c2a18"/><rect x="111" y="12" width="1.5" height="1.5" fill="#a0a8a0"/><rect x="131" y="55" width="1.5" height="1.5" fill="#c8c0b0"/><rect x="143" y="47" width="1.5" height="1.5" fill="#1c2a18"/><rect x="118" y="86" width="1.5" height="1.5" fill="#8a9aa8"/><rect x="30" y="16" width="1.5" height="1.5" fill="#a0a8a0"/><rect x="131" y="39" width="1.5" height="1.5" fill="#9aa8b8"/><rect x="118" y="72" width="1.5" height="1.5" fill="#9aa8b8"/><rect x="56" y="67" width="1.5" height="1.5" fill="#8a9aa8"/><rect x="145" y="84" width="1.5" height="1.5" fill="#1c2a18"/><rect x="116" y="52" width="1.5" height="1.5" fill="#8a9aa8"/><rect x="122" y="41" width="1.5" height="1.5" fill="#7890b0"/><rect x="166" y="53" width="1.5" height="1.5" fill="#b86a50"/><rect x="17" y="35" width="1.5" height="1.5" fill="#2e4a28"/><rect x="146" y="19" width="1.5" height="1.5" fill="#e0e0e0"/><rect x="82" y="12" width="1.5" height="1.5" fill="#6a9a5a"/><rect x="162" y="25" width="1.5" height="1.5" fill="#7890b0"/><rect x="162" y="48" width="1.5" height="1.5" fill="#7890b0"/><rect x="139" y="49" width="1.5" height="1.5" fill="#9aa8b8"/><rect x="18" y="67" width="1.5" height="1.5" fill="#2e4a28"/><rect x="134" y="35" width="1.5" height="1.5" fill="#c8c0b0"/><rect x="60" y="23" width="1.5" height="1.5" fill="#1c2a18"/><rect x="66" y="72" width="1.5" height="1.5" fill="#a0a8a0"/><rect x="68" y="54" width="1.5" height="1.5" fill="#9aa8b8"/><rect x="62" y="55" width="1.5" height="1.5" fill="#9aa8b8"/><rect x="122" y="41" width="1.5" height="1.5" fill="#8a9aa8"/><rect x="121" y="28" width="1.5" height="1.5" fill="#e0e0e0"/><rect x="61" y="42" width="1.5" height="1.5" fill="#c8c0b0"/><rect x="45" y="15" width="1.5" height="1.5" fill="#e0e0e0"/><rect x="66" y="65" width="1.5" height="1.5" fill="#6a9a5a"/><rect x="158" y="15" width="1.5" height="1.5" fill="#2e4a28"/><rect x="170" y="80" width="1.5" height="1.5" fill="#9aa8b8"/><rect x="67" y="19" width="1.5" height="1.5" fill="#2e4a28"/><rect x="131" y="18" width="1.5" height="1.5" fill="#e0e0e0"/><rect x="87" y="22" width="1.5" height="1.5" fill="#7890b0"/><rect x="61" y="22" width="1.5" height="1.5" fill="#9aa8b8"/><rect x="58" y="22" width="1.5" height="1.5" fill="#1c2a18"/><rect x="140" y="18" width="1.5" height="1.5" fill="#2e4a28"/><rect x="38" y="25" width="1.5" height="1.5" fill="#4a6a38"/><rect x="128" y="37" width="1.5" height="1.5" fill="#2e4a28"/><rect x="133" y="55" width="1.5" height="1.5" fill="#1c2a18"/><rect x="120" y="38" width="1.5" height="1.5" fill="#7890b0"/><rect x="140" y="57" width="1.5" height="1.5" fill="#7890b0"/><rect x="171" y="19" width="1.5" height="1.5" fill="#1c2a18"/><rect x="4" y="51" width="1.5" height="1.5" fill="#e0e0e0"/><rect x="116" y="32" width="1.5" height="1.5" fill="#4a6a38"/><rect x="23" y="47" width="1.5" height="1.5" fill="#e0e0e0"/><rect x="5" y="71" width="1.5" height="1.5" fill="#4a6a38"/><rect x="26" y="40" width="1.5" height="1.5" fill="#4a6a38"/><rect x="149" y="57" width="1.5" height="1.5" fill="#4a6a38"/><rect x="139" y="23" width="1.5" height="1.5" fill="#a0a8a0"/><rect x="122" y="55" width="1.5" height="1.5" fill="#a0a8a0"/><rect x="45" y="14" width="1.5" height="1.5" fill="#1c2a18"/><rect x="113" y="52" width="1.5" height="1.5" fill="#9aa8b8"/><rect x="79" y="39" width="1.5" height="1.5" fill="#7890b0"/><rect x="38" y="59" width="1.5" height="1.5" fill="#e0e0e0"/><rect x="98" y="37" width="1.5" height="1.5" fill="#b86a50"/><rect x="13" y="52" width="1.5" height="1.5" fill="#202820"/><rect x="164" y="61" width="1.5" height="1.5" fill="#8a9aa8"/><rect x="53" y="10" width="1.5" height="1.5" fill="#202820"/><rect x="167" y="25" width="1.5" height="1.5" fill="#1c2a18"/><rect x="54" y="77" width="1.5" height="1.5" fill="#c8c0b0"/><rect x="165" y="61" width="1.5" height="1.5" fill="#2e4a28"/><rect x="5" y="54" width="1.5" height="1.5" fill="#a0a8a0"/><rect x="170" y="85" width="1.5" height="1.5" fill="#4a6a38"/><rect x="94" y="44" width="1.5" height="1.5" fill="#a0a8a0"/><rect x="32" y="51" width="1.5" height="1.5" fill="#1c2a18"/><rect x="107" y="81" width="1.5" height="1.5" fill="#7890b0"/><rect x="18" y="21" width="1.5" height="1.5" fill="#b86a50"/><rect x="14" y="47" width="1.5" height="1.5" fill="#4a6a38"/><rect x="164" y="79" width="1.5" height="1.5" fill="#8a9aa8"/><rect x="23" y="33" width="1.5" height="1.5" fill="#1c2a18"/><rect x="38" y="31" width="1.5" height="1.5" fill="#2e4a28"/><rect x="170" y="83" width="1.5" height="1.5" fill="#2e4a28"/><rect x="149" y="82" width="1.5" height="1.5" fill="#c8c0b0"/><rect x="106" y="71" width="1.5" height="1.5" fill="#a0a8a0"/><rect x="99" y="79" width="1.5" height="1.5" fill="#1c2a18"/><rect x="162" y="17" width="1.5" height="1.5" fill="#4a6a38"/><rect x="27" y="80" width="1.5" height="1.5" fill="#8a9aa8"/><rect x="19" y="77" width="1.5" height="1.5" fill="#c8c0b0"/><rect x="72" y="21" width="1.5" height="1.5" fill="#2e4a28"/><rect x="120" y="50" width="1.5" height="1.5" fill="#202820"/><rect x="133" y="62" width="1.5" height="1.5" fill="#8a9aa8"/><rect x="0" y="15" width="1.5" height="1.5" fill="#b86a50"/><rect x="170" y="74" width="1.5" height="1.5" fill="#6a9a5a"/><rect x="61" y="27" width="1.5" height="1.5" fill="#6a9a5a"/><rect x="3" y="69" width="1.5" height="1.5" fill="#e0e0e0"/><rect x="8" y="38" width="1.5" height="1.5" fill="#7890b0"/><rect x="58" y="62" width="1.5" height="1.5" fill="#9aa8b8"/><rect x="113" y="82" width="1.5" height="1.5" fill="#6a9a5a"/><rect x="31" y="22" width="1.5" height="1.5" fill="#e0e0e0"/><rect x="79" y="27" width="1.5" height="1.5" fill="#1c2a18"/><rect x="32" y="62" width="1.5" height="1.5" fill="#202820"/><rect x="45" y="50" width="1.5" height="1.5" fill="#e0e0e0"/><rect x="100" y="12" width="1.5" height="1.5" fill="#e0e0e0"/><rect x="40" y="33" width="1.5" height="1.5" fill="#1c2a18"/><rect x="129" y="26" width="1.5" height="1.5" fill="#c8c0b0"/><rect x="138" y="52" width="1.5" height="1.5" fill="#8a9aa8"/><rect x="119" y="49" width="1.5" height="1.5" fill="#9aa8b8"/><rect x="38" y="42" width="1.5" height="1.5" fill="#2e4a28"/><rect x="65" y="37" width="1.5" height="1.5" fill="#8a9aa8"/><rect x="172" y="40" width="1.5" height="1.5" fill="#2e4a28"/><rect x="73" y="62" width="1.5" height="1.5" fill="#b86a50"/><rect x="59" y="71" width="1.5" height="1.5" fill="#6a9a5a"/><rect x="158" y="53" width="1.5" height="1.5" fill="#7890b0"/><rect x="12" y="85" width="1.5" height="1.5" fill="#c8c0b0"/><rect x="9" y="13" width="1.5" height="1.5" fill="#8a9aa8"/><rect x="74" y="22" width="1.5" height="1.5" fill="#8a9aa8"/><rect x="36" y="78" width="1.5" height="1.5" fill="#b86a50"/><rect x="162" y="36" width="1.5" height="1.5" fill="#2e4a28"/><rect x="25" y="65" width="1.5" height="1.5" fill="#c8c0b0"/><rect x="34" y="20" width="1.5" height="1.5" fill="#a0a8a0"/><rect x="41" y="75" width="1.5" height="1.5" fill="#a0a8a0"/><rect x="79" y="39" width="1.5" height="1.5" fill="#8a9aa8"/><rect x="161" y="21" width="1.5" height="1.5" fill="#8a9aa8"/><rect x="171" y="66" width="1.5" height="1.5" fill="#a0a8a0"/><rect x="9" y="34" width="1.5" height="1.5" fill="#2e4a28"/><rect x="101" y="31" width="1.5" height="1.5" fill="#4a6a38"/><rect x="94" y="54" width="1.5" height="1.5" fill="#4a6a38"/><rect x="46" y="17" width="1.5" height="1.5" fill="#a0a8a0"/><rect x="39" y="16" width="1.5" height="1.5" fill="#e0e0e0"/><rect x="170" y="82" width="1.5" height="1.5" fill="#a0a8a0"/><rect x="88" y="22" width="1.5" height="1.5" fill="#1c2a18"/><rect x="111" y="18" width="1.5" height="1.5" fill="#9aa8b8"/><rect x="138" y="85" width="1.5" height="1.5" fill="#9aa8b8"/><rect x="61" y="87" width="1.5" height="1.5" fill="#9aa8b8"/><rect x="81" y="25" width="1.5" height="1.5" fill="#9aa8b8"/><rect x="170" y="12" width="1.5" height="1.5" fill="#202820"/><rect x="70" y="14" width="1.5" height="1.5" fill="#2e4a28"/><rect x="8" y="41" width="1.5" height="1.5" fill="#b86a50"/><rect x="167" y="12" width="1.5" height="1.5" fill="#6a9a5a"/><rect x="139" y="48" width="1.5" height="1.5" fill="#a0a8a0"/><rect x="11" y="12" width="1.5" height="1.5" fill="#1c2a18"/><rect x="3" y="33" width="1.5" height="1.5" fill="#c8c0b0"/><rect x="59" y="75" width="1.5" height="1.5" fill="#4a6a38"/><rect x="64" y="46" width="1.5" height="1.5" fill="#202820"/><rect x="129" y="23" width="1.5" height="1.5" fill="#2e4a28"/><rect x="154" y="55" width="1.5" height="1.5" fill="#6a9a5a"/><rect x="75" y="55" width="1.5" height="1.5" fill="#e0e0e0"/><rect x="58" y="80" width="1.5" height="1.5" fill="#b86a50"/><rect x="118" y="58" width="1.5" height="1.5" fill="#a0a8a0"/><rect x="28" y="49" width="1.5" height="1.5" fill="#e0e0e0"/><rect x="133" y="82" width="1.5" height="1.5" fill="#1c2a18"/><rect x="41" y="55" width="1.5" height="1.5" fill="#2e4a28"/><rect x="122" y="36" width="1.5" height="1.5" fill="#a0a8a0"/><rect x="17" y="63" width="1.5" height="1.5" fill="#1c2a18"/><rect x="83" y="19" width="1.5" height="1.5" fill="#7890b0"/><rect x="161" y="50" width="1.5" height="1.5" fill="#6a9a5a"/><rect x="119" y="61" width="1.5" height="1.5" fill="#6a9a5a"/><rect x="47" y="54" width="1.5" height="1.5" fill="#a0a8a0"/><rect x="99" y="14" width="1.5" height="1.5" fill="#1c2a18"/><rect x="87" y="47" width="1.5" height="1.5" fill="#a0a8a0"/><rect x="25" y="12" width="1.5" height="1.5" fill="#4a6a38"/><rect x="77" y="17" width="1.5" height="1.5" fill="#c8c0b0"/><rect x="41" y="74" width="1.5" height="1.5" fill="#c8c0b0"/><rect x="44" y="80" width="1.5" height="1.5" fill="#4a6a38"/><rect x="18" y="37" width="1.5" height="1.5" fill="#c8c0b0"/><rect x="165" y="48" width="1.5" height="1.5" fill="#9aa8b8"/><rect x="26" y="34" width="1.5" height="1.5" fill="#a0a8a0"/><rect x="88" y="36" width="1.5" height="1.5" fill="#b86a50"/><rect x="113" y="63" width="1.5" height="1.5" fill="#9aa8b8"/><rect x="140" y="85" width="1.5" height="1.5" fill="#2e4a28"/><rect x="119" y="71" width="1.5" height="1.5" fill="#7890b0"/><rect x="48" y="33" width="1.5" height="1.5" fill="#2e4a28"/><rect x="20" y="47" width="1.5" height="1.5" fill="#7890b0"/><rect x="42" y="81" width="1.5" height="1.5" fill="#c8c0b0"/><rect x="166" y="61" width="1.5" height="1.5" fill="#9aa8b8"/><rect x="138" y="57" width="1.5" height="1.5" fill="#6a9a5a"/><rect x="162" y="60" width="1.5" height="1.5" fill="#8a9aa8"/><rect x="170" y="22" width="1.5" height="1.5" fill="#e0e0e0"/><rect x="171" y="77" width="1.5" height="1.5" fill="#e0e0e0"/><rect x="44" y="57" width="1.5" height="1.5" fill="#e0e0e0"/><rect x="171" y="58" width="1.5" height="1.5" fill="#2e4a28"/><rect x="130" y="62" width="1.5" height="1.5" fill="#6a9a5a"/><rect x="151" y="69" width="1.5" height="1.5" fill="#c8c0b0"/><rect x="99" y="83" width="1.5" height="1.5" fill="#a0a8a0"/><rect x="161" y="27" width="1.5" height="1.5" fill="#7890b0"/><rect x="61" y="12" width="1.5" height="1.5" fill="#2e4a28"/><rect x="87" y="85" width="1.5" height="1.5" fill="#b86a50"/><rect x="114" y="70" width="1.5" height="1.5" fill="#7890b0"/><rect x="27" y="43" width="1.5" height="1.5" fill="#9aa8b8"/><rect x="47" y="24" width="1.5" height="1.5" fill="#a0a8a0"/><rect x="46" y="69" width="1.5" height="1.5" fill="#8a9aa8"/><rect x="58" y="81" width="1.5" height="1.5" fill="#c8c0b0"/><rect x="51" y="83" width="1.5" height="1.5" fill="#202820"/><rect x="53" y="46" width="1.5" height="1.5" fill="#c8c0b0"/><rect x="58" y="32" width="1.5" height="1.5" fill="#4a6a38"/><rect x="173" y="15" width="1.5" height="1.5" fill="#8a9aa8"/><rect x="150" y="51" width="1.5" height="1.5" fill="#9aa8b8"/><rect x="132" y="51" width="1.5" height="1.5" fill="#e0e0e0"/><rect x="35" y="55" width="1.5" height="1.5" fill="#b86a50"/><rect x="76" y="41" width="1.5" height="1.5" fill="#1c2a18"/><rect x="9" y="37" width="1.5" height="1.5" fill="#4a6a38"/><rect x="150" y="76" width="1.5" height="1.5" fill="#4a6a38"/><rect x="72" y="41" width="1.5" height="1.5" fill="#b86a50"/><rect x="137" y="81" width="1.5" height="1.5" fill="#8a9aa8"/><rect x="21" y="43" width="1.5" height="1.5" fill="#a0a8a0"/><rect x="72" y="58" width="1.5" height="1.5" fill="#a0a8a0"/><rect x="161" y="49" width="1.5" height="1.5" fill="#e0e0e0"/><rect x="102" y="42" width="1.5" height="1.5" fill="#c8c0b0"/><rect x="92" y="25" width="1.5" height="1.5" fill="#c8c0b0"/><rect x="107" y="24" width="1.5" height="1.5" fill="#e0e0e0"/><rect x="137" y="55" width="1.5" height="1.5" fill="#1c2a18"/><rect x="47" y="71" width="1.5" height="1.5" fill="#c8c0b0"/><rect x="123" y="45" width="1.5" height="1.5" fill="#6a9a5a"/><rect x="170" y="83" width="1.5" height="1.5" fill="#b86a50"/><rect x="166" y="78" width="1.5" height="1.5" fill="#c8c0b0"/><rect x="96" y="10" width="1.5" height="1.5" fill="#9aa8b8"/><rect x="121" y="44" width="1.5" height="1.5" fill="#2e4a28"/><rect x="173" y="48" width="1.5" height="1.5" fill="#7890b0"/><rect x="43" y="73" width="1.5" height="1.5" fill="#b86a50"/><rect x="119" y="57" width="1.5" height="1.5" fill="#c8c0b0"/><rect x="15" y="53" width="1.5" height="1.5" fill="#b86a50"/><rect x="10" y="46" width="1.5" height="1.5" fill="#c8c0b0"/><rect x="67" y="67" width="1.5" height="1.5" fill="#7890b0"/><rect x="82" y="18" width="1.5" height="1.5" fill="#b86a50"/><rect x="148" y="47" width="1.5" height="1.5" fill="#202820"/><rect x="152" y="81" width="1.5" height="1.5" fill="#a0a8a0"/><rect x="21" y="33" width="1.5" height="1.5" fill="#b86a50"/><rect x="145" y="66" width="1.5" height="1.5" fill="#202820"/><rect x="71" y="41" width="1.5" height="1.5" fill="#b86a50"/><rect x="45" y="71" width="1.5" height="1.5" fill="#7890b0"/><rect x="47" y="26" width="1.5" height="1.5" fill="#a0a8a0"/><rect x="76" y="45" width="1.5" height="1.5" fill="#1c2a18"/><rect x="37" y="12" width="1.5" height="1.5" fill="#e0e0e0"/><rect x="108" y="17" width="1.5" height="1.5" fill="#7890b0"/><rect x="82" y="78" width="1.5" height="1.5" fill="#9aa8b8"/><rect x="115" y="62" width="1.5" height="1.5" fill="#4a6a38"/><rect x="170" y="70" width="1.5" height="1.5" fill="#6a9a5a"/><rect x="154" y="16" width="1.5" height="1.5" fill="#b86a50"/><rect x="52" y="66" width="1.5" height="1.5" fill="#202820"/><rect x="114" y="61" width="1.5" height="1.5" fill="#6a9a5a"/><rect x="37" y="33" width="1.5" height="1.5" fill="#202820"/><rect x="134" y="52" width="1.5" height="1.5" fill="#7890b0"/><rect x="59" y="65" width="1.5" height="1.5" fill="#c8c0b0"/><rect x="146" y="37" width="1.5" height="1.5" fill="#6a9a5a"/><rect x="45" y="57" width="1.5" height="1.5" fill="#b86a50"/><rect x="150" y="33" width="1.5" height="1.5" fill="#b86a50"/><rect x="130" y="43" width="1.5" height="1.5" fill="#9aa8b8"/><rect x="101" y="73" width="1.5" height="1.5" fill="#a0a8a0"/><rect x="68" y="55" width="1.5" height="1.5" fill="#7890b0"/><rect x="124" y="36" width="1.5" height="1.5" fill="#1c2a18"/><rect x="101" y="29" width="1.5" height="1.5" fill="#7890b0"/><rect x="119" y="41" width="1.5" height="1.5" fill="#2e4a28"/><rect x="172" y="21" width="1.5" height="1.5" fill="#202820"/><rect x="57" y="66" width="1.5" height="1.5" fill="#c8c0b0"/><rect x="48" y="54" width="1.5" height="1.5" fill="#4a6a38"/><rect x="166" y="35" width="1.5" height="1.5" fill="#a0a8a0"/><rect x="138" y="48" width="1.5" height="1.5" fill="#9aa8b8"/><rect x="50" y="72" width="1.5" height="1.5" fill="#6a9a5a"/><rect x="118" y="18" width="1.5" height="1.5" fill="#c8c0b0"/><rect x="80" y="51" width="1.5" height="1.5" fill="#9aa8b8"/><rect x="99" y="83" width="1.5" height="1.5" fill="#1c2a18"/><rect x="75" y="14" width="1.5" height="1.5" fill="#c8c0b0"/><rect x="52" y="63" width="1.5" height="1.5" fill="#7890b0"/><rect x="63" y="27" width="1.5" height="1.5" fill="#7890b0"/><rect x="48" y="38" width="1.5" height="1.5" fill="#4a6a38"/><rect x="89" y="52" width="1.5" height="1.5" fill="#6a9a5a"/><rect x="114" y="21" width="1.5" height="1.5" fill="#e0e0e0"/><rect x="109" y="74" width="1.5" height="1.5" fill="#202820"/><rect x="43" y="24" width="1.5" height="1.5" fill="#8a9aa8"/><rect x="158" y="59" width="1.5" height="1.5" fill="#c8c0b0"/><rect x="129" y="30" width="1.5" height="1.5" fill="#9aa8b8"/><rect x="10" y="55" width="1.5" height="1.5" fill="#a0a8a0"/><rect x="142" y="76" width="1.5" height="1.5" fill="#b86a50"/><rect x="109" y="38" width="1.5" height="1.5" fill="#1c2a18"/><rect x="59" y="78" width="1.5" height="1.5" fill="#b86a50"/><rect x="147" y="64" width="1.5" height="1.5" fill="#c8c0b0"/><rect x="77" y="73" width="1.5" height="1.5" fill="#202820"/><rect x="49" y="49" width="1.5" height="1.5" fill="#1c2a18"/><rect x="39" y="27" width="1.5" height="1.5" fill="#202820"/><rect x="56" y="60" width="1.5" height="1.5" fill="#1c2a18"/><rect x="137" y="78" width="1.5" height="1.5" fill="#2e4a28"/><rect x="144" y="80" width="1.5" height="1.5" fill="#a0a8a0"/><rect x="133" y="46" width="1.5" height="1.5" fill="#202820"/><rect x="123" y="27" width="1.5" height="1.5" fill="#1c2a18"/><rect x="152" y="27" width="1.5" height="1.5" fill="#1c2a18"/><rect x="10" y="48" width="1.5" height="1.5" fill="#a0a8a0"/><rect x="8" y="64" width="1.5" height="1.5" fill="#8a9aa8"/><rect x="133" y="62" width="1.5" height="1.5" fill="#202820"/><rect x="4" y="35" width="1.5" height="1.5" fill="#202820"/><rect x="61" y="86" width="1.5" height="1.5" fill="#202820"/><rect x="93" y="40" width="1.5" height="1.5" fill="#8a9aa8"/><rect x="73" y="80" width="1.5" height="1.5" fill="#202820"/><rect x="31" y="31" width="1.5" height="1.5" fill="#a0a8a0"/><rect x="27" y="62" width="1.5" height="1.5" fill="#c8c0b0"/><rect x="81" y="32" width="1.5" height="1.5" fill="#4a6a38"/><rect x="4" y="29" width="1.5" height="1.5" fill="#c8c0b0"/><rect x="43" y="32" width="1.5" height="1.5" fill="#e0e0e0"/><rect x="3" y="38" width="1.5" height="1.5" fill="#6a9a5a"/><rect x="103" y="31" width="1.5" height="1.5" fill="#8a9aa8"/><rect x="28" y="17" width="1.5" height="1.5" fill="#a0a8a0"/><rect x="89" y="34" width="1.5" height="1.5" fill="#202820"/><rect x="139" y="44" width="1.5" height="1.5" fill="#7890b0"/><rect x="87" y="42" width="1.5" height="1.5" fill="#6a9a5a"/><rect x="63" y="30" width="1.5" height="1.5" fill="#9aa8b8"/><rect x="92" y="51" width="1.5" height="1.5" fill="#b86a50"/><rect x="50" y="33" width="1.5" height="1.5" fill="#6a9a5a"/><rect x="6" y="71" width="1.5" height="1.5" fill="#202820"/><rect x="79" y="50" width="1.5" height="1.5" fill="#1c2a18"/><rect x="151" y="74" width="1.5" height="1.5" fill="#a0a8a0"/><rect x="81" y="39" width="1.5" height="1.5" fill="#9aa8b8"/><rect x="16" y="49" width="1.5" height="1.5" fill="#b86a50"/><rect x="153" y="86" width="1.5" height="1.5" fill="#b86a50"/><rect x="13" y="29" width="1.5" height="1.5" fill="#1c2a18"/><rect x="95" y="50" width="1.5" height="1.5" fill="#e0e0e0"/><rect x="7" y="32" width="1.5" height="1.5" fill="#1c2a18"/><rect x="172" y="16" width="1.5" height="1.5" fill="#8a9aa8"/><rect x="2" y="21" width="1.5" height="1.5" fill="#6a9a5a"/><rect x="124" y="68" width="1.5" height="1.5" fill="#9aa8b8"/><rect x="98" y="82" width="1.5" height="1.5" fill="#6a9a5a"/><rect x="103" y="52" width="1.5" height="1.5" fill="#c8c0b0"/><rect x="101" y="23" width="1.5" height="1.5" fill="#9aa8b8"/><rect x="130" y="29" width="1.5" height="1.5" fill="#9aa8b8"/><rect x="38" y="44" width="1.5" height="1.5" fill="#4a6a38"/><rect x="141" y="86" width="1.5" height="1.5" fill="#a0a8a0"/><rect x="107" y="11" width="1.5" height="1.5" fill="#7890b0"/><rect x="114" y="27" width="1.5" height="1.5" fill="#8a9aa8"/><rect x="42" y="34" width="1.5" height="1.5" fill="#2e4a28"/><rect x="167" y="53" width="1.5" height="1.5" fill="#8a9aa8"/><rect x="170" y="24" width="1.5" height="1.5" fill="#b86a50"/><rect x="142" y="66" width="1.5" height="1.5" fill="#2e4a28"/><rect x="10" y="13" width="1.5" height="1.5" fill="#7890b0"/><rect x="24" y="26" width="1.5" height="1.5" fill="#c8c0b0"/><rect x="129" y="78" width="1.5" height="1.5" fill="#a0a8a0"/><rect x="167" y="35" width="1.5" height="1.5" fill="#e0e0e0"/><rect x="157" y="67" width="1.5" height="1.5" fill="#1c2a18"/><rect x="111" y="57" width="1.5" height="1.5" fill="#a0a8a0"/><rect x="8" y="53" width="1.5" height="1.5" fill="#6a9a5a"/><rect x="153" y="61" width="1.5" height="1.5" fill="#6a9a5a"/><rect x="124" y="24" width="1.5" height="1.5" fill="#9aa8b8"/><rect x="114" y="13" width="1.5" height="1.5" fill="#202820"/><rect x="49" y="81" width="1.5" height="1.5" fill="#a0a8a0"/><rect x="14" y="29" width="1.5" height="1.5" fill="#7890b0"/><rect x="41" y="32" width="1.5" height="1.5" fill="#a0a8a0"/><rect x="122" y="85" width="1.5" height="1.5" fill="#a0a8a0"/><rect x="113" y="63" width="1.5" height="1.5" fill="#7890b0"/><rect x="56" y="11" width="1.5" height="1.5" fill="#6a9a5a"/><rect x="86" y="40" width="1.5" height="1.5" fill="#4a6a38"/><rect x="44" y="19" width="1.5" height="1.5" fill="#1c2a18"/><rect x="171" y="39" width="1.5" height="1.5" fill="#1c2a18"/><rect x="68" y="83" width="1.5" height="1.5" fill="#a0a8a0"/><rect x="159" y="24" width="1.5" height="1.5" fill="#4a6a38"/><rect x="2" y="61" width="1.5" height="1.5" fill="#a0a8a0"/><rect x="98" y="28" width="1.5" height="1.5" fill="#b86a50"/><rect x="84" y="13" width="1.5" height="1.5" fill="#4a6a38"/><rect x="150" y="13" width="1.5" height="1.5" fill="#b86a50"/><rect x="67" y="27" width="1.5" height="1.5" fill="#6a9a5a"/><rect x="108" y="67" width="1.5" height="1.5" fill="#1c2a18"/><rect x="126" y="14" width="1.5" height="1.5" fill="#8a9aa8"/><rect x="26" y="22" width="1.5" height="1.5" fill="#c8c0b0"/><rect x="156" y="29" width="1.5" height="1.5" fill="#a0a8a0"/><rect x="66" y="17" width="1.5" height="1.5" fill="#c8c0b0"/><rect x="24" y="36" width="1.5" height="1.5" fill="#c8c0b0"/><rect x="103" y="28" width="1.5" height="1.5" fill="#2e4a28"/><rect x="33" y="19" width="1.5" height="1.5" fill="#b86a50"/><rect x="13" y="50" width="1.5" height="1.5" fill="#8a9aa8"/><rect x="29" y="51" width="1.5" height="1.5" fill="#6a9a5a"/><rect x="71" y="39" width="1.5" height="1.5" fill="#7890b0"/><rect x="88" y="40" width="1.5" height="1.5" fill="#9aa8b8"/><rect x="53" y="86" width="1.5" height="1.5" fill="#c8c0b0"/><rect x="34" y="36" width="1.5" height="1.5" fill="#c8c0b0"/><rect x="74" y="71" width="1.5" height="1.5" fill="#6a9a5a"/><rect x="50" y="32" width="1.5" height="1.5" fill="#a0a8a0"/><rect x="23" y="40" width="1.5" height="1.5" fill="#7890b0"/><rect x="153" y="81" width="1.5" height="1.5" fill="#8a9aa8"/><path d="M44 27 L45 17 L50 17 L51 13 L56 15 L58 10 L63 14 L70 12 L74 15 L80 10 L86 15 L92 11 L98 14 L106 12 L112 15 L120 13 L128 16 L130 27z" fill="#b8bcc2"/><path d="M50 26v-8M54 26v-9M60 26v-11M68 26v-10M76 26v-9M84 26v-10M94 26v-8M104 26v-9M114 26v-8M122 26v-7" stroke="#40485a" stroke-width="1.3"/><path d="M57 26v-9M72 26v-11M90 26v-12M100 26v-9M117 26v-9" stroke="#e8eaee" stroke-width="1.4"/><path d="M0 30 Q15 28 28 20 L38 20 Q32 30 30 40 Q12 44 0 44z" fill="#3a66a6"/><path d="M28 38 Q55 40 80 35 Q100 30 112 26 Q135 18 150 20 Q166 24 174 28 L174 38 Q160 30 148 27 Q132 26 115 31 Q95 38 78 40 Q50 44 28 42z" fill="#3a62a0"/><path d="M32 36 Q36 27 48 25 Q72 26 92 27 Q75 34 55 36z" fill="#4a8a3e"/><path d="M48 28 Q55 25 62 27 L60 33 Q52 33 48 28z" fill="#d8dad8"/><rect x="63" y="42" width="9" height="24" fill="#dde2ea"/><rect x="63" y="42" width="3" height="24" fill="#8a9ab4"/><path d="M1 55 Q10 51 24 54 L36 60 L33 66 Q15 67 2 62z" fill="#dfe3ea"/><rect x="39" y="54" width="8" height="11" fill="#c8c8c0"/><path d="M95 43 Q125 44 152 47 L150 51 Q122 48 95 47z" fill="#6aa84c"/><ellipse cx="74" cy="82" rx="34" ry="14" fill="#e4e8f0"/><ellipse cx="74" cy="83" rx="29" ry="11" fill="#8a8a7a"/><ellipse cx="72" cy="85" rx="20" ry="8" fill="#4a8a36"/><path d="M88 73 Q101 76 100 87 H88 Q94 80 88 73z" fill="#1c2220"/></svg>
<div class="bh" style="left:1255px;top:632px;font-size:13px">在此请输入标题</div>
<div class="bt" style="left:1213px;top:650px;width:82px;height:175.50px"><div class="f">金印客是一家专业数码与传统</div><div class="f">网络排版印刷的服务平台，拥</div><div class="f">有30多年印刷服务经验。金印</div><div class="f">客DPS排版软件简单好用，零</div><div class="f">基础也能排出专业作品。软件</div><div class="f">内有海量精美模板，不用设计</div><div class="f">、不用排版，直接套用模板，</div><div class="f">30分钟轻松搞定，有效节省你</div><div class="f">的排版时间和费用。作品排好</div><div class="f">后，无需到处寻找印刷厂，在</div><div class="f">DPS软件内下单印刷，快递直</div><div class="f">接送货上门。金印客是一家专</div><div class="f">业数码与传统网络排版印刷的</div><div class="f">服务平台，拥有30多年印刷服</div><div class="f">务经验。金印客DPS排版软件</div><div class="f">简单好用，零基础也能排出专</div><div class="f">业作品。软件内有海量精美模</div><div class="f">板，不用设计、不用排版，直</div></div>

<div class="bt" style="left:1308px;top:650px;width:80px;height:175.50px"><div class="f">品。软件内有海量精美模板，</div><div class="f">不用设计、不用排版，直接套</div><div class="f">用模板，30分钟轻松搞定，有</div><div class="f">效节省你的排版时间和费用。</div><div class="f">作品排好后，无需到处寻找印</div><div class="f">刷厂，在DPS软件内下单印刷</div><div class="f">，快递直接送货上门。金印客</div><div class="f">是一家专业数码与传统网络排</div><div class="f">版印刷的服务平台，拥有30多</div><div class="f">年印刷服务经验。金印客DPS</div><div class="f">排版软件简单好用，零基础也</div><div class="f">能排出专业作品。软件内有海</div><div class="f">量精美模板，不用设计、不用</div><div class="s">排版，直接套</div><div class="f">用模板，30分钟轻松搞定，有</div><div class="f">效节省你的排版时间和费用。</div><div class="f">作品排好后，无需到处寻找印</div><div class="s">刷厂，在</div></div>


</div>

<div id="vscroll" class="a"></div>
<svg class="a" style="left:1905px;top:187px" width="12" height="8" viewBox="0 0 12 8"><path d="M1.5 7 L6 2 L10.5 7z" fill="#606060"/></svg>
<div class="a" style="left:1904px;top:201px;width:15px;height:351px;border:1px solid #9a9a9a;border-radius:2px;background:linear-gradient(90deg,#f6f6f6,#f0f0f0 50%,#d6d6da)"></div>
<svg class="a" style="left:1907px;top:372px" width="9" height="7" viewBox="0 0 9 7"><path d="M1 1h7M1 3h7M1 5h7" stroke="#777"/></svg>
<svg class="a" style="left:1905px;top:885px" width="12" height="8" viewBox="0 0 12 8"><path d="M1.5 1 L6 6 L10.5 1z" fill="#606060"/></svg>
<!-- floating panel -->
<div class="a" style="left:1838px;top:245px;width:60px;height:384px;background:#fff;border-radius:4px 4px 0 0;box-shadow:0 0 1px #6a7388"></div>
<div class="a" style="left:1838px;top:245px;width:60px;height:25px;background:#87a9d8;border-radius:4px 4px 0 0"></div>
<svg class="a" style="left:1881px;top:252px" width="11" height="11" viewBox="0 0 11 11"><path d="M1 1 L10 10 M10 1 L1 10" stroke="#fff" stroke-width="1.3"/></svg>
<svg class="a" style="left:1855px;top:277px" width="26" height="27" viewBox="0 0 26 27"><path d="M2 1.5 H17 L23.5 8 V25.5 H2z" fill="none" stroke="#333" stroke-width="2"/><path d="M12.5 9v11M7 14.5h11" stroke="#333" stroke-width="2"/></svg>
<div class="t" style="left:1856px;top:310px;font-size:12px;color:#777">加页</div>
<svg class="a" style="left:1855px;top:336px" width="26" height="27" viewBox="0 0 26 27"><path d="M2 1.5 H17 L23.5 8 V25.5 H2z" fill="none" stroke="#333" stroke-width="2"/><path d="M7 14.5h11" stroke="#333" stroke-width="2"/></svg>
<div class="t" style="left:1856px;top:369px;font-size:12px;color:#777">删页</div>
<svg class="a" style="left:1855px;top:395px" width="27" height="28" viewBox="0 0 27 28"><circle cx="12" cy="12" r="10" fill="none" stroke="#333" stroke-width="2"/><path d="M19 19 L24 24" stroke="#333" stroke-width="2.2"/><path d="M12 7v10M7 12h10" stroke="#333" stroke-width="2"/></svg>
<div class="t" style="left:1856px;top:428px;font-size:12px;color:#777">放大</div>
<svg class="a" style="left:1855px;top:454px" width="27" height="28" viewBox="0 0 27 28"><circle cx="12" cy="12" r="10" fill="none" stroke="#333" stroke-width="2"/><path d="M19 19 L24 24" stroke="#333" stroke-width="2.2"/><path d="M7 12h10" stroke="#333" stroke-width="2"/></svg>
<div class="t" style="left:1856px;top:487px;font-size:12px;color:#777">缩小</div>
<svg class="a" style="left:1855px;top:513px" width="26" height="26" viewBox="0 0 26 26"><path d="M13 5 Q7 1 1.5 3 V23 Q7 21 13 24 Q19 21 24.5 23 V3 Q19 1 13 5z M13 5 V24" fill="none" stroke="#333" stroke-width="2" stroke-linejoin="round"/></svg>
<div class="t" style="left:1856px;top:546px;font-size:12px;color:#777">预览</div>
<svg class="a" style="left:1855px;top:573px" width="27" height="25" viewBox="0 0 27 25"><ellipse cx="10" cy="9" rx="8.5" ry="7" fill="#fff" stroke="#333" stroke-width="1.7"/><path d="M5 15 L4 19 L8 16" fill="#fff" stroke="#333" stroke-width="1.5"/><ellipse cx="17.5" cy="15.5" rx="7.5" ry="6" fill="#fff" stroke="#333" stroke-width="1.7"/><path d="M21 21 L23 24 L19 21.5" fill="#fff" stroke="#333" stroke-width="1.5"/><circle cx="7" cy="7.5" r="1" fill="#333"/><circle cx="13" cy="7.5" r="1" fill="#333"/><circle cx="15" cy="14.5" r="1" fill="#333"/><circle cx="20" cy="14.5" r="1" fill="#333"/></svg>
<div class="t" style="left:1856px;top:605px;font-size:12px;color:#777">分享</div>

<div id="bottom" class="a"></div>
<div class="a" style="left:35px;top:899px;width:1885px;height:1px;background:#8a93a8"></div>
<div class="a" style="left:35px;top:900px;width:1885px;height:7px;background:#dde8f4"></div>
<div class="a" style="left:930px;top:900px;width:95px;height:7px;background:#e6e6e6"></div>
<svg class="a" style="left:972px;top:901px" width="9" height="5" viewBox="0 0 9 5"><path d="M0.5 0.5 L4.5 4.5 L8.5 0.5z" fill="#333"/></svg>
<div class="a" style="left:35px;top:907px;width:1885px;height:1px;background:#a0a0a0"></div>
<div class="a" style="left:35px;top:908px;width:1px;height:104px;background:#a0a0a0"></div>
<div class="a" style="left:36px;top:960px;width:34px;height:52px;background:#f0f0f0;border:1px solid #c8c8c8;border-bottom:none"></div>
<div class="a" style="left:69px;top:908px;width:1px;height:52px;background:#fff"></div>
<svg class="a" style="left:40px;top:910px" width="24" height="29" viewBox="0 0 24 29"><path d="M1.5 1.5 H15 L22.5 9 V27.5 H1.5z" fill="#fff" stroke="#7a8aa8"/><path d="M15 1.5 V9 H22.5" fill="#e6eef8" stroke="#7a8aa8"/><path d="M4 10h8M4 13h16M4 16h16M4 19h16M4 22h16M4 25h16" stroke="#4a6ab8"/></svg>
<div class="t" style="left:40px;top:942px;font-size:12px;color:#e8601a">页面</div>
<svg class="a" style="left:40px;top:962px" width="24" height="29" viewBox="0 0 24 29"><path d="M1.5 1.5 H15 L22.5 9 V27.5 H1.5z" fill="#fff" stroke="#777"/><path d="M15 1.5 V9 H22.5" fill="#eee" stroke="#777"/><rect x="4.5" y="4.5" width="8" height="4" fill="none" stroke="#666"/><path d="M4 12h16M4 15h16M4 18h16" stroke="#888"/><rect x="4.5" y="21.5" width="15" height="4" fill="none" stroke="#666"/></svg>
<div class="t" style="left:40px;top:994px;font-size:12px;color:#888">母版</div>
<div class="a" style="left:78px;top:916px;width:80px;height:59px;border:3px solid #2a62c8;border-radius:2px"></div>
<div class="a" style="left:81px;top:919px;width:74px;height:53px;background:#fff;overflow:hidden"><div class="a" style="left:2px;top:2px;width:33px;height:1.5px;background:#8fb0dc"></div><div class="a" style="left:2px;top:5px;width:33px;height:45px;background:repeating-linear-gradient(#fff 0,#fff 1px,#d4d4d4 1px,#d4d4d4 2px)"></div><div class="a" style="left:18px;top:15px;width:16px;height:9px;background:linear-gradient(#6a8ab8,#3a5a98)"></div><div class="a" style="left:2px;top:27px;width:15px;height:8px;background:linear-gradient(#c8d4e4,#8a9aa8)"></div><div class="a" style="left:39px;top:3px;width:33px;height:6px;background:#fff"></div><div class="t" style="left:44px;top:3px;font-size:5.5px;color:#d83030;font-weight:bold;letter-spacing:.6px">新闻报刊</div><div class="a" style="left:38px;top:11px;width:34px;height:1px;background:#bbb"></div><div class="a" style="left:38px;top:14px;width:34px;height:13px;background:repeating-linear-gradient(#fff 0,#fff 1px,#d4d4d4 1px,#d4d4d4 2px)"></div><div class="a" style="left:39px;top:26px;width:15px;height:8px;background:#5a7a5a"></div><div class="a" style="left:56px;top:26px;width:15px;height:8px;background:#5a7a5a"></div><div class="a" style="left:39px;top:34px;width:15px;height:16px;background:repeating-linear-gradient(#fff 0,#fff 1px,#d4d4d4 1px,#d4d4d4 2px)"></div><div class="a" style="left:56px;top:34px;width:15px;height:16px;background:repeating-linear-gradient(#fff 0,#fff 1px,#d4d4d4 1px,#d4d4d4 2px)"></div><div class="a" style="left:38.5px;top:26px;width:0.8px;height:25px;background:#999"></div><div class="a" style="left:54.5px;top:26px;width:0.8px;height:25px;background:#999"></div><div class="a" style="left:55.5px;top:26px;width:0.8px;height:25px;background:#999"></div><div class="a" style="left:71px;top:26px;width:0.8px;height:25px;background:#999"></div><div class="a" style="left:36.5px;top:0px;width:1px;height:53px;background:#e8e8e8"></div></div>
<div class="a" style="left:165px;top:918px;width:76px;height:55px;border:1px solid #a0a0a0"></div>
<div class="a" style="left:166px;top:919px;width:74px;height:53px;background:#fff;overflow:hidden"><div class="a" style="left:2px;top:2px;width:33px;height:1.5px;background:#8fb0dc"></div><div class="a" style="left:39px;top:2px;width:33px;height:1.5px;background:#8fb0dc"></div><div class="a" style="left:2px;top:5px;width:33px;height:45px;background:repeating-linear-gradient(#fff 0,#fff 1px,#d4d4d4 1px,#d4d4d4 2px)"></div><div class="a" style="left:39px;top:5px;width:33px;height:45px;background:repeating-linear-gradient(#fff 0,#fff 1px,#d4d4d4 1px,#d4d4d4 2px)"></div><div class="a" style="left:13px;top:6px;width:21px;height:10px;background:linear-gradient(#8a8680,#4a3c34)"></div><div class="a" style="left:2px;top:21px;width:7px;height:12px;background:linear-gradient(#c8a8b8,#6a7aa0)"></div><div class="a" style="left:26px;top:42px;width:7px;height:7px;background:#9a9a9a"></div><div class="a" style="left:45px;top:18px;width:26px;height:11px;background:linear-gradient(90deg,#b8aaa0,#6a5a50 60%,#3a3a40)"></div><div class="a" style="left:38px;top:42px;width:6px;height:8px;background:#8a7050"></div><div class="a" style="left:36.5px;top:0px;width:1px;height:53px;background:#e8e8e8"></div></div>
<div class="t" style="left:83px;top:976px;font-size:12px;color:#111;letter-spacing:.3px">04版 &nbsp;- 01版</div>
<div class="t" style="left:168px;top:976px;font-size:12px;color:#111;letter-spacing:.3px">02版 &nbsp;- 03版</div>
<div class="a" style="left:70px;top:994px;width:1850px;height:18px;background:#f0f0f0"></div>
<svg class="a" style="left:75px;top:997px" width="9" height="11" viewBox="0 0 9 11"><path d="M7 1 L2 5.5 L7 10z" fill="#555"/></svg>
<div class="a" style="left:87px;top:995px;width:1815px;height:15px;border:1px solid #a8a8a8;border-radius:2px;background:linear-gradient(#f8f8f8,#e8e8e8 50%,#d8d8d8)"></div>
<svg class="a" style="left:991px;top:998px" width="7" height="9" viewBox="0 0 7 9"><path d="M1 1v7M3 1v7M5 1v7" stroke="#777"/></svg>
<svg class="a" style="left:1907px;top:997px" width="9" height="11" viewBox="0 0 9 11"><path d="M2 1 L7 5.5 L2 10z" fill="#555"/></svg>

<div id="status" class="a"></div>
<div class="t" style="left:6px;top:1019px;font-size:12px;color:#1a2a4a">选中38个对象，尺寸 = <span style="font-family:Liberation Mono;font-size:11.5px;letter-spacing:-.5px">500.0 x 350.1</span></div>
<div class="a" style="left:363px;top:1014px;width:1px;height:25px;background:#a8b8d0"></div>
<div class="a" style="left:985px;top:1017px;width:98px;height:18px;background:#00a822;border:1px solid #7aa"></div>
<div class="t" style="left:1022px;top:1021px;font-size:10px;color:#fff">100%</div>
<div class="t" style="left:1093px;top:1020px;font-size:11.5px;color:#1a2a4a;font-family:Liberation Mono;letter-spacing:-.6px">X:227.0&nbsp; Y:263.5</div>
<div class="t" style="left:1221px;top:1019px;font-size:12px;color:#1a2a4a">报纸 八开报(540x390mm) 竖式 对折 2页</div>
<svg class="a" style="left:1458px;top:1015px" width="215" height="23" viewBox="0 0 215 23">
 <defs><linearGradient id="nb" x1="0" y1="0" x2="0" y2="1"><stop offset="0" stop-color="#fbfbfb"/><stop offset="1" stop-color="#dedede"/></linearGradient></defs>
 <rect x="1.5" y="1.5" width="25" height="20" rx="2" fill="url(#nb)" stroke="#a8a8a8"/>
 <rect x="30.5" y="1.5" width="25" height="20" rx="2" fill="url(#nb)" stroke="#a8a8a8"/>
 <rect x="59.5" y="1.5" width="96" height="20" fill="#f2f6fb" stroke="#b8c8dc"/>
 <rect x="158.5" y="1.5" width="25" height="20" rx="2" fill="url(#nb)" stroke="#888"/>
 <rect x="187.5" y="1.5" width="25" height="20" rx="2" fill="url(#nb)" stroke="#888"/>
 <path d="M7 6v11" stroke="#777" stroke-width="2"/><path d="M9 11.5 L15 6 V9.5 H21 V13.5 H15 V17z" fill="#777"/>
 <path d="M36 11.5 L42 6 V9.5 H50 V13.5 H42 V17z" fill="#888"/>
 <path d="M178 11.5 L172 6 V9.5 H164 V13.5 H172 V17z" fill="#222"/>
 <path d="M206 6v11" stroke="#222" stroke-width="2"/><path d="M204 11.5 L198 6 V9.5 H192 V13.5 H198 V17z" fill="#222"/>
 <path d="M143 9 L146 12 L149 9z" fill="#555"/>
</svg>
<div class="t" style="left:1524px;top:1019px;font-size:12px;color:#111">04版 - 01版</div>
<svg class="a" style="left:1692px;top:1015px" width="57" height="22" viewBox="0 0 57 22">
 <rect x="1.5" y="1.5" width="54" height="19" rx="2" fill="#e4ecf6" stroke="#9ab"/>
 <rect x="6" y="3" width="11" height="7" fill="#fff" stroke="#666"/><text x="7" y="9" font-size="5" fill="#333">100</text><circle cx="8" cy="14" r="3.5" fill="none" stroke="#666"/><path d="M10 16l3 3" stroke="#e08a20" stroke-width="2"/>
 <rect x="20.5" y="4.5" width="14" height="13" fill="#fff" stroke="#555"/><path d="M22 7h11M22 9.5h11M22 12h11M22 14.5h11" stroke="#555"/>
 <rect x="37" y="2" width="17" height="18" fill="#c8d8ee" stroke="#7a9ac8"/><rect x="41.5" y="4.5" width="9" height="13" fill="#fff" stroke="#555"/>
</svg>
<div class="t" style="left:1765px;top:1020px;font-size:11px;color:#1a2a5a;font-weight:bold;font-family:Liberation Serif">44%</div>
<svg class="a" style="left:1788px;top:1015px" width="132" height="22" viewBox="0 0 132 22">
 <circle cx="10" cy="11" r="7.5" fill="#eef3fa" stroke="#5a6a88"/><path d="M6 11h8" stroke="#445" stroke-width="2"/>
 <path d="M25 10.5h83" stroke="#7a9ac8"/><path d="M71 7v7" stroke="#7a9ac8"/>
 <path d="M37 5 H47 V14 L42 18 L37 14z" fill="#d8e4f4" stroke="#556"/><path d="M42 7v7" stroke="#7a9ac8"/>
 <circle cx="122" cy="11" r="7.5" fill="#eef3fa" stroke="#5a6a88"/><path d="M118 11h8M122 7v8" stroke="#445" stroke-width="2"/>
</svg>

</body>
</html>
